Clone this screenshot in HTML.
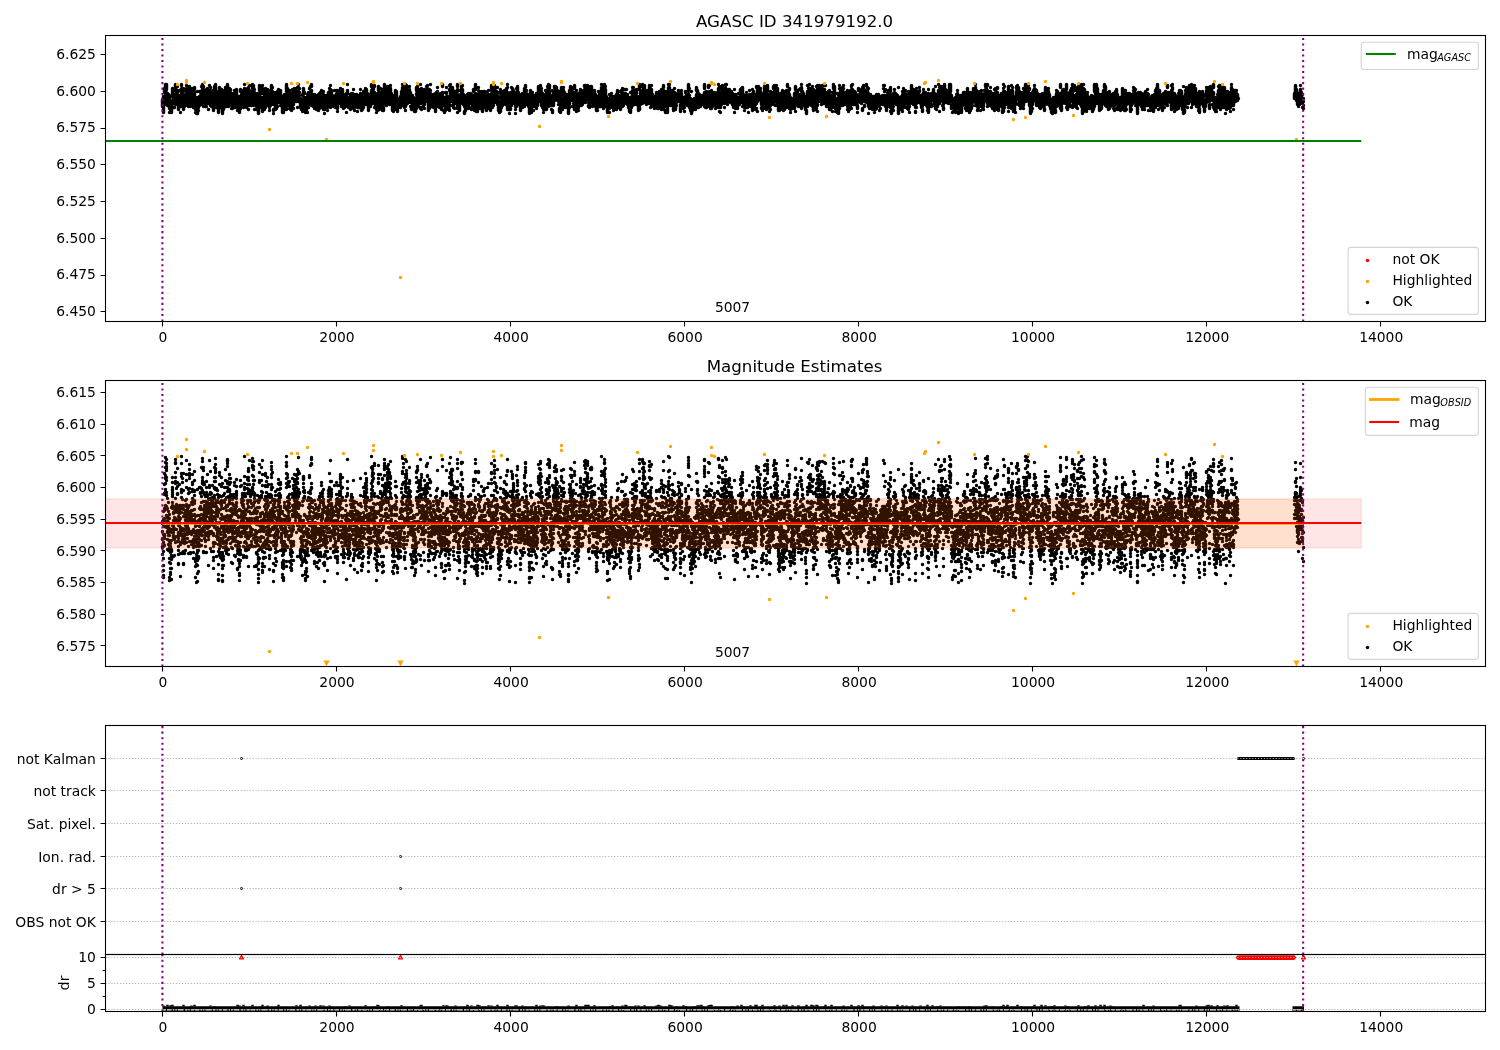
<!DOCTYPE html>
<html><head><meta charset="utf-8"><title>AGASC ID 341979192.0</title>
<style>html,body{margin:0;padding:0;background:#fff;overflow:hidden}svg{display:block;will-change:transform}</style></head>
<body>
<svg width="1500" height="1050" viewBox="0 0 1500 1050" font-family="DejaVu Sans, Liberation Sans, sans-serif" font-size="13.89px" fill="#000">
<defs>
<clipPath id="c0"><rect x="105.5" y="35.5" width="1380.0" height="286.0"/></clipPath>
<clipPath id="c1"><rect x="105.5" y="380.5" width="1380.0" height="286.0"/></clipPath>
<clipPath id="c2"><rect x="105.5" y="725.5" width="1380.0" height="229.0"/></clipPath>
<clipPath id="c3"><rect x="105.5" y="954.5" width="1380.0" height="57.0"/></clipPath>
</defs>
<g clip-path="url(#c0)">
<path transform="translate(.5 .5)" d="M162 99v7M163 96v16M164 88v4m0 4v8M165 84v8m0 3v1M166 84v5m0 3v5m0 3h0M167 93h0m0 3v9M168 94v2m0 3v6M169 97v11m0 4h0M170 101h0m0 3v7M171 95h0m0 6v11M172 88v8m0 4h0M173 97v6m0 4h0M174 97v6m0 4h0M175 84v6m0 3v5m0 6h0M176 91h0m0 4v7M177 86h0m0 4v2m0 3v4m0 4h0M178 98v11M179 90h0m0 5v7M180 95v6m0 3v2m0 6h0M181 84v1m0 3h0m0 3v2m0 3v1m0 3v1M182 89v1m0 4v1m0 5v3m0 3h0M183 88h0m0 3h0m0 4v3m0 3v2m0 3v3M184 97h0m0 4v5M185 94v11M186 85h0m0 3v3m0 3v7m0 3h0M187 96v7M188 91v1m0 3v7m0 3v1M189 86v6m0 3v3m0 5h0M190 96v5m0 5h0M191 94v10M192 88v13M193 98v9M194 87v2m0 3v6m0 4h0M195 98v7m0 3v1m0 3h0M196 100v9m0 4h0M197 91h0m0 6h0m0 4v12M198 98h0m0 3v6m0 3h0M199 91h0m0 5v9M200 91v1m0 3v7M201 86h0m0 5v3m0 3v7M202 84v8m0 4v6M203 86v1m0 3v4m0 3v4m0 5h0M204 90v2m0 3v8M205 93v6m0 3v4M206 89v3m0 3v7m0 4h0M207 88h0m0 4v9M208 94v9m0 6h0M209 85h0m0 5v1m0 4v6M210 87h0m0 5v6m0 4h0m0 3h0M211 92v9m0 5h0M212 90h0m0 3v6M213 93h0m0 7v10M214 86v14m0 4h0M215 84v7m0 4v4m0 5h0M216 91h0m0 3v8m0 5h0M217 92v11M218 93h0m0 3v10m0 3v3M219 87v3m0 3v1m0 5v8M220 95v12M221 89v11m0 3h0m0 4h0M222 90h0m0 8h0m0 5h0m0 3v7M223 93h0m0 3v13M224 91v3m0 4v5M225 87v2m0 5v8m0 3v1M226 91v9m0 3v3M227 84v2m0 3v3m0 3v3M228 91v4m0 3v8M229 88v8m0 4v3M230 89v1m0 3v7m0 4h0M231 93v9m0 3h0m0 3h0M232 94v3m0 3v5m0 3h0M233 93v10M234 90h0m0 3v3m0 4v3m0 4h0M235 95v9m0 3h0M236 89v11m0 3h0M237 97v2m0 3v4m0 4h0M238 96v5m0 3v4M239 96h0m0 8v8M240 89v2m0 5v12M241 90h0m0 4v8M242 92v6m0 3h0M243 94v1m0 3v6m0 3h0M244 84h0m0 4v4m0 4v2m0 3h0m0 3h0M245 93h0m0 3v9M246 96v11M247 88v8m0 3v5M248 87v8m0 8v2m0 4h0M249 85h0m0 5v2m0 4v9M250 91v3m0 3v5M251 91v1m0 3v10M252 84v4m0 3v1m0 9h0M253 85v7m0 3v2m0 6v2M254 89h0m0 3v7m0 3v1m0 6h0M255 96v8M256 97v9m0 3h0M257 93v6m0 4v3M258 94h0m0 5v2m0 3v9M259 85v5m0 3v2m0 4v2m0 4v2M260 93h0m0 4v8M261 86h0m0 3h0m0 3v1m0 4v5m0 3h0M262 85h0m0 3v4m0 5v4m0 3v7M263 98v9M264 94v7m0 3v2m0 3h0M265 88v8m0 3v1m0 3v1m0 3h0M266 90v9m0 3v3M267 89v14M268 90v2m0 3v9M269 93h0m0 4v10m0 3h0M270 92v10m0 3h0M271 85v8m0 4h0m0 3v1m0 3h0M272 87h0m0 4h0m0 3v6M273 95v9m0 5v1m0 3h0M274 94v10M275 92v3m0 3v1m0 3v7M276 94h0m0 4v10M277 91h0m0 3v8m0 4h0M278 89v9m0 3v1M279 90v8M280 90v10m0 5h0M281 99v5M282 96v2m0 3v11M283 101h0m0 3v8M284 94v6m0 3v2M285 98v7M286 84v7m0 5v1m0 5h0m0 6v1M287 88v13m0 3v1M288 90h0m0 3v6m0 3v1M289 90v12m0 6h0M290 99v10M291 101v9M292 89h0m0 3v9m0 3v2M293 90v7m0 3v4m0 4h0M294 88v9M295 90v8M296 88v9m0 4h0M297 87v7m0 3v3m0 7h0M298 84h0m0 3h0m0 4v10M299 88h0m0 4h0m0 3h0m0 3v3M300 98h0m0 5v4M301 101v8M302 94v1m0 4v1m0 3v5m0 3h0M303 88v6m0 4v4m0 6h0M304 92v1m0 4h0m0 3v7M305 104v8M306 97v7m0 4v2M307 94h0m0 4h0m0 3v6m0 5h0M308 92v1m0 3h0m0 3v5m0 3h0M309 88h0m0 7v5m0 3h0M310 86h0m0 5v13M311 84v2m0 4v1m0 3h0m0 7v4M312 94v11M313 97v9M314 94v11m0 3h0M315 95v10M316 95v5m0 4v2m0 3h0M317 98v10M318 94v9m0 4h0m0 3h0M319 93v2m0 3h0m0 3v4m0 3h0M320 92v2m0 3v9M321 90h0m0 8v6m0 3h0M322 92v11M323 91h0m0 3v3m0 4v3m0 5h0M324 95v1m0 4v9m0 4h0M325 98v1m0 3v5M326 95v5m0 3v3M327 96v5m0 3v3m0 3h0M328 92v10M329 88h0m0 3v1m0 3v6M330 85h0m0 4h0m0 3v15M331 90v9m0 3h0M332 95v6M333 97v9M334 90h0m0 6h0m0 3v5M335 95h0m0 3v1m0 3v5M336 90h0m0 3v7m0 5h0M337 90h0m0 3v3m0 3v2m0 4v3m0 3h0M338 94v9M339 90v6m0 3h0M340 88v8m0 4v2M341 89v2m0 3v12M342 89v13m0 3h0M343 99v9M344 97v10M345 94v10M346 93v10m0 9h0M347 84h0m0 6v3m0 4v2m0 4v3M348 98v9M349 100v7M350 94v3m0 3v3m0 3h0m0 3h0M351 93v6m0 3h0M352 93v10M353 89h0m0 6v13M354 94v13m0 3h0M355 96v9M356 94h0m0 3v8M357 96v1m0 3v7m0 4h0M358 95v12M359 97v1m0 3v6M360 89h0m0 4v9m0 4h0M361 95h0m0 3v7m0 4v1M362 98v3m0 3v5M363 91v2m0 4v5m0 3v2M364 92v2m0 3v6M365 88v8m0 3h0M366 89v9m0 6h0M367 93v1m0 3v6M368 97v13M369 94v12M370 95v2m0 3v6M371 84v2m0 4v6m0 3v4M372 86v6m0 6h0m0 5h0M373 88v1m0 6v4m0 3h0M374 85v1m0 6v1m0 4v6m0 4h0M375 95v3m0 3v5M376 98v11m0 3h0M377 93v1m0 5v11M378 86v4m0 3h0m0 3v1m0 3v2m0 3h0M379 95h0m0 4v7m0 3h0M380 88h0m0 4v9m0 3h0M381 92v6m0 5v1m0 3h0M382 89v1m0 3v2m0 5v4m0 4v2M383 93v2m0 3v6m0 3v3M384 84v8M385 86h0m0 4v9M386 91v14M387 86v8M388 86v8m0 3v5M389 87v5m0 3v1m0 3v5M390 85h0m0 3v5m0 3h0m0 3v4M391 93h0m0 3v6M392 95h0m0 5v10M393 100v11M394 95v6m0 3h0m0 4v1M395 90v6m0 3v5M396 91v8m0 5v5M397 99v3m0 3v1m0 3v2M398 100v7M399 98v7M400 96v11M401 91v11M402 84h0m0 3v3m0 3v5M403 85v1m0 4h0m0 3h0m0 3v9M404 98v9M405 84h0m0 4v10m0 8h0m0 4h0M406 85v13m0 6h0M407 92v7m0 3v1M408 91v11M409 86h0m0 3v7m0 3h0M410 92v6m0 3v1m0 4h0M411 96h0m0 3v3m0 5v2M412 95h0m0 3v7m0 3v1M413 97h0m0 4v7M414 98v10m0 3h0M415 101v10M416 87v3m0 3v1m0 3h0m0 7v1m0 3h0M417 86v1m0 5v8M418 89v2m0 3v1m0 4v4m0 3h0M419 90v7m0 3h0M420 84h0m0 5v11m0 3h0m0 4v1M421 88v7m0 3v5m0 6h0M422 91v7m0 3h0M423 95v11M424 89v3m0 3v9m0 4h0M425 90v4m0 3v4M426 86h0m0 5v8M427 85h0m0 3v11M428 98v12M429 89v2m0 3v2m0 3h0m0 3v3m0 3h0M430 84h0m0 6h0m0 3v7m0 6h0M431 97v9M432 98v5m0 3h0M433 94v7m0 3h0m0 3h0M434 96v11M435 93h0m0 4v4m0 3v2m0 3v2M436 92v3m0 3v3m0 5h0M437 87h0m0 4h0m0 3v5m0 3h0m0 4h0M438 94v10M439 94v9m0 4h0M440 93h0m0 3v10M441 98v2m0 3v6M442 84v2m0 6v3m0 3h0m0 4v3M443 97h0m0 3v5m0 5h0M444 98v6m0 6v2M445 92h0m0 5v13M446 87h0m0 5v1m0 3v7m0 6h0M447 96v10M448 99v9M449 85h0m0 4v1m0 6h0m0 3v2m0 3v2m0 3v1M450 84h0m0 3h0m0 5v3m0 4v2m0 4h0M451 87v3m0 4v3M452 87v13M453 91h0m0 3v13M454 91v5m0 3v4m0 5h0M455 91v11M456 91v4m0 3v5M457 84v2m0 3v2m0 3v2m0 5h0m0 5v2m0 4h0M458 97v11M459 96h0m0 3h0m0 3v8M460 90h0m0 4v9M461 85v3m0 4v5m0 3h0M462 85h0m0 4v13M463 94v5m0 3v2M464 95h0m0 3v8m0 5v2M465 99v5m0 3v3M466 97v3m0 3v5M467 94h0m0 3v8M468 93h0m0 3v12M469 94v6M470 93v8M471 94v9m0 4v2M472 96v11M473 89v2m0 4v2m0 3v3M474 95v3m0 4v3m0 3v2M475 84v5m0 4v7M476 97h0m0 4v10M477 100v11M478 87h0m0 3h0m0 3v2m0 5v6M479 94v5M480 93v1m0 4v10M481 91v2m0 3v9M482 96v7m0 3v5M483 91v1m0 5v9M484 91v10m0 3v3M485 94h0m0 3v7m0 3h0M486 100v10M487 91h0m0 3v9m0 5h0M488 90h0m0 4v2m0 4v3M489 95v11M490 95v2m0 4v9M491 85v5m0 3v2m0 3v2m0 4h0M492 97v10M493 93v1m0 3v1m0 3v1m0 3h0M494 85v10m0 4v3M495 90v11M496 91h0m0 3v7M497 87h0m0 5h0m0 3v5m0 3v1M498 101v9M499 103v9M500 89v4m0 3v1m0 3v11M501 96v2m0 3v6M502 94v8m0 3h0M503 91v11M504 90v11M505 92h0m0 3v9M506 88v2m0 3v9M507 84h0m0 3h0m0 5h0m0 4h0m0 5h0m0 3v5M508 93v10m0 4v2M509 96v10m0 3h0m0 4h0M510 92v1m0 7v5m0 3v1M511 87h0m0 5h0m0 3v10M512 88v1m0 3v7M513 90v10M514 93v6m0 4h0M515 95v7m0 3v1m0 3h0m0 4h0M516 88h0m0 4v3m0 4v7M517 86v11M518 92v12M519 94v7M520 100v10M521 94h0m0 3v6m0 3h0M522 93v1m0 3v6m0 3v1M523 97v8M524 88v3m0 3v6m0 4v2M525 85v2m0 4v3m0 3v2m0 3v2M526 90h0m0 3v9M527 94v9M528 95v4m0 3v4M529 103v10M530 90v3m0 4v7M531 92v9m0 4v3m0 4h0M532 92h0m0 6v8m0 4h0M533 95v10m0 5h0M534 95v6m0 3v2M535 95v11M536 93h0m0 7v4m0 3v1M537 98v7M538 86v14M539 86h0m0 3v1m0 3h0m0 3v1M540 85v8m0 4h0m0 4h0M541 88h0m0 3v14M542 93h0m0 5v6m0 3h0M543 95v7m0 3v1m0 3h0m0 3h0M544 95v9M545 90h0m0 4h0m0 3v12M546 91v12m0 5v1M547 86h0m0 3h0m0 3v7m0 6h0M548 84v1m0 4v3m0 4v1m0 3h0m0 3h0m0 3h0M549 85v3m0 3v6m0 5v1M550 95v7m0 3h0M551 96v9m0 4h0M552 90h0m0 6h0m0 3h0m0 3v3m0 5v2M553 91v14M554 86v1m0 4v9M555 86h0m0 3v10M556 87v11M557 90v10M558 92v9m0 3h0M559 91h0m0 5v6m0 6v3M560 95v4m0 4v3m0 5v1M561 87v7m0 4v2m0 3h0M562 98h0m0 4v7M563 87h0m0 3v3m0 4v6M564 92v7m0 5v1M565 94v2m0 4v7M566 94v11M567 95v10M568 96h0m0 3h0m0 3v3m0 3v5M569 90v14m0 3h0M570 86v14M571 87v1m0 4v6M572 89h0m0 3v8m0 6h0M573 92v7m0 4h0M574 85v3m0 6v6m0 5h0m0 3v1M575 92h0m0 3v12M576 90h0m0 4v10m0 4h0m0 3h0M577 98h0m0 3v7M578 93h0m0 5v1m0 3v5m0 3h0M579 94v11M580 89v3m0 3v5M581 93v7m0 3v2M582 91v1m0 3v6m0 3h0M583 90v4m0 3v2m0 3h0M584 85v1m0 3h0m0 3v9M585 85v4m0 3v4m0 5v1M586 89v10M587 85v4m0 3v5M588 90v1m0 4v4m0 3h0m0 3v1M589 95v12M590 86v9m0 3v2M591 86v11m0 3h0M592 92h0m0 4v6m0 3v1M593 94v11M594 90v12M595 94v3m0 3v2m0 3v1M596 98v3m0 3v6M597 96h0m0 3v8m0 3h0M598 91h0m0 5v6M599 93v3m0 3v4m0 3h0M600 94v9m0 3h0M601 84h0m0 3v9m0 3v1m0 5h0M602 87h0m0 4v10M603 97v11M604 84v13m0 3h0M605 86h0m0 3v10m0 5h0M606 96h0m0 3v7M607 98v5m0 3v6M608 99v9M609 94h0m0 5v4m0 3v2m0 4h0M610 94v9M611 93h0m0 3v10M612 98v9M613 96v1m0 3v4m0 6h0M614 96v13M615 96v10M616 94v15M617 90v6m0 4v3m0 3h0M618 91h0m0 6v6m0 3v1M619 95v7m0 3h0M620 100v9M621 90v2m0 3v9M622 88h0m0 4v14M623 95v2m0 4v4M624 89h0m0 4v10M625 89h0m0 4v8M626 89h0m0 5v8M627 94v3m0 3v4M628 97v6m0 3v1M629 98v5m0 3v5M630 92h0m0 5h0m0 3v2m0 3v7M631 101v6M632 87h0m0 3v8m0 3v1m0 3h0M633 87h0m0 6v9M634 90v8m0 3h0m0 3h0M635 91v3m0 3v5M636 89v4m0 3v3m0 3v2M637 96v6M638 99v11M639 84v5m0 7v3m0 3h0m0 5v2M640 92v7m0 3v2M641 95v8M642 84v2m0 4v5m0 5h0m0 3h0M643 85v4m0 3h0m0 3h0m0 4h0m0 3h0M644 85v11m0 5v1M645 90v12M646 97v7M647 90h0m0 3v10M648 92v11M649 85v3m0 5v8M650 86h0m0 3v5m0 3h0m0 3v2m0 5h0M651 85h0m0 4v7m0 4v5M652 94h0m0 3v9M653 97v8M654 96v12M655 97v9M656 92v3m0 4v5M657 97h0m0 3v8M658 95v9m0 4h0M659 91v1m0 3v12M660 95h0m0 3v7M661 89v6m0 4h0m0 3h0m0 3v4M662 93v10M663 85v2m0 3v2m0 5v1m0 5v1m0 5h0M664 93h0m0 3h0m0 3v7M665 91v3m0 3v4m0 3v2m0 4v2M666 94v1m0 3v7M667 92h0m0 3h0m0 3v14M668 84h0m0 3v12M669 84h0m0 3v4m0 4h0m0 3h0m0 3v2M670 93v12M671 93v9M672 90v5m0 4v4M673 92v4m0 3v11M674 88h0m0 4v2m0 3h0m0 3h0m0 3h0m0 3v3M675 96v6m0 3v4M676 97v5m0 3h0M677 93v5m0 3h0M678 90v1m0 3v7M679 91v9M680 97v4m0 3v7M681 90h0m0 3v8M682 97v9M683 97v3m0 3v1m0 3v1M684 97v7m0 3h0m0 4h0M685 91v1m0 4v2m0 4v1M686 94v9M687 97v8M688 84v6m0 3h0m0 3v5M689 88h0m0 7h0m0 4v8M690 98v1m0 3v3m0 3v2M691 91h0m0 8v14M692 99v11M693 102v7M694 98v3m0 3v4M695 98v11M696 87v3m0 4v11M697 90v11M698 93v14M699 94v12M700 99v7M701 95v9M702 95v6M703 95v6m0 3h0M704 84v4m0 4v1m0 3v2m0 4h0m0 4h0M705 98v9M706 91v6m0 3v3m0 4h0M707 94v12M708 85v2m0 5v1m0 3v3m0 3h0M709 85h0m0 6v2m0 3v4m0 3v2M710 93v6m0 5h0m0 3v1M711 90v11m0 4h0m0 3h0M712 95v8m0 3h0M713 93v8m0 3h0M714 92v12M715 99v6m0 3h0M716 97v7M717 92v5m0 4v5M718 84h0m0 4v4m0 4h0m0 3v4m0 3v1M719 86v2m0 6v4m0 5v3m0 5h0M720 93v8m0 3v3m0 5h0M721 91v7m0 3v3M722 85v9m0 3h0M723 95v7M724 90v6m0 4v3m0 4h0M725 84h0m0 3v8m0 5h0M726 84h0m0 8v9M727 97v4m0 3h0M728 89v2m0 3v7M729 89v10M730 92v10M731 91v7M732 93v8m0 3h0M733 94h0m0 3v10M734 89h0m0 5v9m0 4h0m0 5h0M735 94h0m0 3v7m0 3v1M736 96v6m0 3v1M737 97v11M738 93h0m0 4v7M739 97v7M740 89v9M741 88v6m0 3v3M742 87v10m0 3v2m0 4h0M743 94v7m0 3v1M744 97v4m0 3v3m0 3h0M745 95v10M746 92h0m0 5v10M747 95v9m0 3h0M748 95v10m0 7h0M749 90h0m0 4v10M750 95v7m0 3v1M751 98v3m0 3v2M752 89h0m0 4v3m0 3v4m0 6v1M753 91v2m0 3h0m0 3v5m0 4h0M754 97v9M755 97v7m0 5h0M756 86v1m0 7v9m0 5h0M757 88v10m0 3h0m0 10h0M758 86v4m0 3v4M759 89v10M760 88h0m0 3v9M761 95h0m0 3v6m0 3v1M762 95v2m0 3v4m0 3h0m0 3h0M763 93v10m0 3v2M764 86v11m0 4h0M765 86h0m0 3v12M766 86h0m0 7v3m0 3v2m0 3v5M767 85v6m0 3v2m0 3h0m0 3h0M768 94h0m0 4v8M769 99v9m0 3h0M770 91h0m0 3v11m0 4h0M771 92v3m0 3v5M772 93v10M773 86v2m0 5v11M774 85v8m0 5v2m0 4h0M775 86v1m0 3v3m0 5v2m0 5h0M776 85h0m0 3v4m0 4v5m0 3h0M777 88v12m0 5h0M778 95v2m0 3v10M779 97v13M780 93v10M781 99v9M782 90v2m0 3v6m0 4v4M783 97h0m0 4v9M784 91v7m0 6v2m0 3h0M785 93v14M786 90h0m0 5h0m0 4h0m0 3v5M787 84v2m0 4v6m0 3v2m0 3h0M788 90v3m0 3v4m0 3h0M789 88v1m0 5v6m0 3h0m0 3v2M790 97v3m0 3h0m0 4v2m0 3h0M791 98v10M792 99v5m0 4h0M793 98v9M794 93v8m0 4v3M795 86v3m0 3v7m0 5v1m0 6h0M796 92h0m0 3v6M797 90v3m0 3v4m0 3h0M798 98v8M799 89h0m0 6v10M800 88h0m0 6v12M801 84h0m0 3v4m0 3v1m0 4h0m0 7v2M802 91v7m0 3v4M803 93v5m0 4v3M804 96v9M805 96v3m0 3v7M806 99v7m0 4v3M807 85h0m0 6v5m0 3v7M808 85h0m0 3h0m0 6v2m0 3v2m0 3h0M809 84h0m0 4v6m0 3v4m0 3h0M810 88v3m0 4v8M811 92v2m0 5v6M812 86h0m0 4v1m0 4v5m0 3h0m0 3h0M813 89h0m0 3h0m0 6v1m0 3v8M814 92v2m0 3h0m0 3v7M815 97v1m0 3v3m0 5h0M816 86h0m0 4v3m0 3v2m0 5v2m0 3h0M817 85v6m0 4h0m0 5h0m0 4v1m0 6h0M818 86v10m0 5h0M819 85h0m0 3v10M820 88v2m0 3v4m0 3v1M821 87v12m0 5h0M822 85h0m0 3h0m0 4v9M823 92v11M824 85h0m0 4v5m0 6h0M825 85h0m0 8v7M826 95v11M827 92v12M828 91v4m0 3v1m0 3v3M829 90v2m0 4h0m0 6v7M830 96v9m0 4h0M831 95v3m0 4v2m0 3h0M832 92h0m0 7v8m0 4h0M833 84v4m0 4v4m0 10h0M834 86v14M835 98h0m0 3v7m0 3h0M836 99v11M837 93h0m0 5h0m0 3v4m0 5v2M838 95h0m0 4v5m0 4v5M839 85h0m0 3h0m0 6h0m0 3v7m0 3v1M840 88v6m0 3v5m0 3h0M841 94v9M842 87v7m0 3v5m0 3h0M843 85h0m0 3h0m0 5v11M844 92v7m0 4v1M845 92v7m0 4h0M846 92h0m0 4v8M847 90v2m0 3v2m0 3v6m0 3h0M848 91v8m0 3v4m0 5h0M849 95v6m0 3v5M850 90v7m0 4h0m0 3v3M851 85v1m0 3h0m0 5v1m0 4v1m0 3h0m0 5h0M852 84h0m0 5h0m0 3v8M853 92v6m0 3v3M854 91v13M855 92v1m0 3v8M856 94v9M857 99v3m0 3v3m0 4h0M858 88v2m0 7v3M859 94v7M860 91v1m0 4v6M861 89h0m0 4v10M862 87h0m0 5v1m0 4v4m0 7v2M863 85v8m0 3v1m0 3h0M864 94v7m0 4v1M865 90v9M866 84v1m0 5v1m0 3v1m0 4h0m0 3h0M867 87v11m0 4h0M868 88h0m0 5v1m0 5v7m0 7h0M869 96h0m0 3v9M870 94v9M871 98v6m0 3v1M872 96v7m0 3h0m0 3h0M873 96v3m0 3v5M874 96v8m0 4v1m0 3h0M875 96v9m0 4h0M876 94v5m0 4v5M877 98v5m0 3h0M878 94h0m0 3v8M879 99v6m0 5h0M880 96v7m0 5h0M881 96v6M882 95v9M883 85h0m0 3h0m0 7v2m0 5v2M884 85h0m0 6h0m0 4v8M885 89h0m0 6v11M886 96v14M887 92h0m0 3v7M888 90v9M889 90v2m0 3v4m0 4v3M890 87v4m0 3v2m0 3v2m0 4v2m0 4h0M891 97h0m0 4v4m0 3v1m0 3v1M892 102v7M893 93v10m0 3h0m0 4h0M894 89h0m0 3v1m0 3v6M895 93v9M896 94v10M897 95v9M898 87h0m0 16h0m0 3v7M899 97v1m0 4v7M900 97v2m0 3h0m0 3v3M901 96v5m0 3v1m0 3v1M902 91h0m0 3h0m0 3v5m0 3h0m0 3h0m0 3h0M903 88h0m0 4v8M904 91h0m0 5v7m0 3h0M905 90h0m0 3v10m0 4h0M906 94v7M907 96v7m0 3v2M908 91h0m0 7v1m0 3v7M909 93h0m0 5v4m0 4h0m0 6h0M910 91v5m0 4v3M911 85v12M912 94v8M913 89v4m0 4v7M914 90v11M915 93v2m0 3v9m0 4v1M916 88h0m0 3v7m0 3v2m0 4h0M917 92v10M918 93v7M919 87h0m0 3v1m0 4v7M920 95v8M921 96v11M922 94h0m0 5v7m0 3v2M923 89h0m0 3v8m0 3v1M924 92v9M925 92v12M926 94h0m0 4v7M927 98v9m0 3h0M928 89h0m0 4h0m0 3h0m0 6v10M929 94v11M930 94v9M931 93v6m0 5v2M932 93h0m0 3v4M933 89v10M934 93v12M935 86h0m0 14v8M936 94h0m0 5v6m0 4h0M937 97v9M938 84h0m0 6v7m0 3v2M939 87h0m0 7v4m0 3v2m0 8h0M940 86h0m0 6v2m0 3v4M941 86v10M942 89v11m0 5h0M943 95v5m0 3v1m0 3v2M944 84v3m0 4v9M945 89h0m0 4v8M946 90v12M947 91v10M948 92v11M949 84v7m0 3v5M950 84v7m0 3v3M951 95v6m0 3v4M952 100v2m0 3v2m0 5h0M953 103v4m0 4h0M954 98v9m0 3h0M955 97v15M956 94h0m0 3v11M957 90h0m0 3v1m0 3v5M958 99v9m0 3v2M959 97v9M960 95v7m0 6h0M961 95h0m0 5v12M962 97v8M963 92v12M964 92v7m0 3v1M965 93v11m0 3v1M966 93v1m0 3h0m0 3v10M967 88v6m0 3v5m0 4v1M968 96h0m0 3v8M969 97v5m0 3v7M970 92v9m0 3v2m0 4h0M971 98v10M972 92h0m0 4v6m0 3h0M973 88v6m0 4h0M974 88h0m0 5v7M975 84h0m0 3v4m0 3v1m0 4h0m0 3h0m0 3h0M976 90v10m0 4h0M977 96h0m0 3v7m0 3v1M978 99v5m0 3h0M979 91v9m0 3h0M980 94v7m0 9h0M981 90h0m0 3v1m0 4h0m0 3v5M982 95v9m0 3h0M983 98v8m0 3h0M984 90h0m0 3v8M985 84v2m0 3v7M986 88v4m0 3v5M987 84v1m0 5v1m0 3v1m0 3v1m0 4h0m0 3h0M988 91v2m0 4v8M989 94h0m0 3v4m0 3v1M990 87h0m0 4h0m0 3v2m0 3h0m0 3v3M991 97v9M992 93h0m0 4v8m0 3h0M993 94v13M994 89h0m0 4h0m0 3v7m0 7h0M995 88v2m0 3v3m0 3h0m0 3h0m0 3v4M996 88h0m0 6v10M997 87v1m0 4v8M998 96v14M999 95v7m0 4h0M1000 96v9M1001 93h0m0 3v2m0 3v3M1002 96h0m0 4v7m0 3v2M1003 84h0m0 4h0m0 3h0m0 3v2m0 3v12M1004 86h0m0 5h0m0 4v5m0 3h0m0 4h0M1005 92v1m0 3v7M1006 93v4m0 3v4M1007 93v6M1008 86v8m0 6v2m0 5h0m0 4h0M1009 94v2m0 3v8M1010 92v10m0 3v2M1011 85h0m0 5v5m0 3v4m0 6h0M1012 87h0m0 3v7m0 3v2M1013 100h0m0 5v6M1014 98v12M1015 96v8m0 8h0M1016 86v2m0 3v7M1017 85v1m0 4v9M1018 87v10m0 6v1M1019 91v2m0 3v6m0 3h0M1020 92v6m0 4h0m0 6h0M1021 94v5m0 3v4M1022 92h0m0 3v11M1023 88h0m0 7v10m0 3h0M1024 90v3m0 3v4M1025 84v2m0 3v12M1026 84h0m0 5v1m0 3v6M1027 84v3m0 6v7M1028 85h0m0 3h0m0 4v9M1029 88v1m0 4v4m0 3v5M1030 98v2m0 4v9M1031 97h0m0 3v11M1032 92v12m0 4h0M1033 90h0m0 3v7M1034 85h0m0 3v1m0 3v8M1035 89v8M1036 90v5m0 3v7M1037 93v1m0 3v5M1038 94v2m0 3v6M1039 98v9M1040 94h0m0 5v9M1041 94v9m0 3h0M1042 93v6m0 4v3M1043 96v10M1044 96v6m0 3h0m0 3v2M1045 87v12m0 5h0M1046 88v4m0 3v4m0 3h0M1047 92v1m0 3v7M1048 88h0m0 3v3m0 4v6M1049 94v11M1050 100v8M1051 99v13M1052 102v4m0 7h0M1053 97v11M1054 97v2m0 3v2m0 3h0m0 3v2M1055 101v6m0 3v2M1056 90h0m0 3v7m0 4v2M1057 91v12M1058 97v8M1059 94v9M1060 84v3m0 6h0m0 3v3m0 4v1m0 3v1M1061 95v8m0 3v4M1062 90v8m0 5h0M1063 89v6m0 4v3M1064 93v8M1065 90v10m0 3h0M1066 84v5m0 3v7m0 3h0m0 5h0M1067 94v3m0 3v9M1068 95v1m0 3v6M1069 92v1m0 3v10M1070 90h0m0 4v7m0 4v1M1071 88h0m0 3v7M1072 84v1m0 4v11m0 7h0M1073 88h0m0 7v4m0 3v2M1074 85v1m0 3v1m0 8v4m0 3h0M1075 95v11M1076 94v8m0 4v1M1077 87v5m0 3v4m0 4h0m0 5h0M1078 86h0m0 5v4m0 4v2M1079 85v1m0 3v2m0 3v6M1080 87h0m0 5v12M1081 84v10m0 5h0m0 6v1M1082 95h0m0 3v7m0 3v5M1083 84h0m0 4h0m0 6v2m0 3v2m0 5v2m0 3h0M1084 89v4m0 4v7M1085 99v10M1086 95v16M1087 92h0m0 3v7m0 5h0M1088 99v7M1089 100h0m0 3v5M1090 97v9M1091 95h0m0 5v5m0 3h0M1092 101v5m0 3v2M1093 96v13M1094 84v7m0 6v4m0 3v2M1095 92v8m0 3h0M1096 84v4m0 3v8m0 3h0M1097 88v6m0 4v5M1098 94v7M1099 94h0m0 5v11M1100 95h0m0 8v6M1101 94v2m0 4v8M1102 94v7M1103 90v13M1104 84v3m0 3v2m0 9v1M1105 86v3m0 6h0m0 4v2m0 3v1M1106 98v8M1107 92v4m0 3v5M1108 95h0m0 4v10M1109 91v11m0 6h0M1110 99v4m0 3h0M1111 96h0m0 3v6M1112 94v8M1113 93v9m0 3h0m0 3h0M1114 96h0m0 3v6m0 3v2M1115 91v11M1116 89v11M1117 94v2m0 3v5m0 3v2M1118 98v8M1119 102v7M1120 97v6m0 4h0m0 3h0M1121 97v2m0 3v7M1122 88v9m0 5v3m0 3h0M1123 94v11M1124 90v5m0 3v2m0 4v6M1125 90h0m0 3h0m0 4v10m0 3h0M1126 93h0m0 5v6m0 5h0M1127 93v6m0 3h0M1128 93h0m0 3v7M1129 93v8M1130 97h0m0 6v8M1131 94v8m0 3h0m0 4h0M1132 94v1m0 3v5M1133 87h0m0 3h0m0 3v8M1134 88v10M1135 89h0m0 5v8m0 3h0M1136 93v2m0 4v5M1137 95h0m0 7v11M1138 92v7m0 5h0M1139 93v7M1140 92v12M1141 93v9m0 3v1M1142 98v6m0 3v2M1143 94v11M1144 93h0m0 3v10m0 3h0M1145 91h0m0 4v5m0 3v2M1146 95v10M1147 89h0m0 4v8m0 4h0M1148 94h0m0 3v5m0 8h0M1149 98v7M1150 99v8m0 3h0M1151 96h0m0 3v6M1152 95v9m0 3v2M1153 97v8m0 3v3M1154 94v11M1155 90v1m0 5v2m0 5v4M1156 88v4m0 5v3M1157 84v6m0 5v4m0 3v2M1158 94h0m0 4v7m0 4h0M1159 90v2m0 3v5m0 3v1M1160 94v2m0 3v5m0 3h0M1161 95v12M1162 98v12M1163 93h0m0 3v5m0 3h0M1164 93h0m0 3v6m0 5h0M1165 91v11M1166 92v8m0 4h0M1167 85v2m0 5h0m0 3v4m0 3h0m0 3h0M1168 92v8M1169 93v8M1170 92v10M1171 85h0m0 5h0m0 4v1m0 6v8M1172 84h0m0 3v2m0 3h0m0 3v3m0 4v1M1173 94v5m0 5v3M1174 93v2m0 4v5m0 3v1m0 3h0M1175 95v11m0 3h0M1176 97h0m0 3v9M1177 96v1m0 3v6M1178 93h0m0 5v3m0 3v4M1179 90v4m0 3h0m0 3h0m0 3v2M1180 90v2m0 3v5m0 3h0M1181 91v10M1182 96v13M1183 86h0m0 14v6m0 5v2M1184 99v7m0 3v3M1185 90h0m0 3v11M1186 87v3m0 3v2m0 5v3M1187 91v3m0 4v5m0 4h0M1188 91v12M1189 85v3m0 3v5M1190 87v10M1191 84h0m0 3h0m0 5v2m0 3v4m0 6h0M1192 87h0m0 7v10M1193 85h0m0 4v2m0 5v6M1194 85h0m0 3h0m0 5v6m0 4h0M1195 88v12M1196 94h0m0 3v9M1197 93v10m0 3h0M1198 97v10m0 3h0M1199 91h0m0 6h0m0 3v5m0 3v4M1200 94v8M1201 93v7m0 3h0M1202 91v11M1203 94v2m0 4v6M1204 101v10M1205 99v7M1206 87h0m0 3v6m0 5v1M1207 89h0m0 3v8M1208 87v11M1209 92v1m0 3v5m0 3v4M1210 86h0m0 3v7M1211 87v7m0 4h0M1212 92v8m0 4h0M1213 84v3m0 5v2m0 3v1m0 8v1M1214 97h0m0 3v9M1215 97v3m0 3v8M1216 101v7m0 3h0M1217 94h0m0 4v9M1218 86h0m0 4v9m0 3v3M1219 85v7m0 4v1m0 3h0m0 3v4M1220 90v9m0 3v1m0 4v2M1221 85v6m0 4v5M1222 92v13M1223 87h0m0 4h0m0 5v6m0 4v1M1224 87v4m0 4v4m0 3v2M1225 94v6m0 4h0m0 3h0m0 6h0M1226 93v1m0 4h0m0 4v7M1227 91v5m0 3h0m0 3v2M1228 92v8M1229 95v4m0 3v6M1230 96v11m0 4h0M1231 84h0m0 3v8m0 3v3M1232 89v1m0 4v10M1233 93v12m0 4h0M1234 90v8m0 3h0M1235 90v1m0 3v7M1236 90h0m0 3v7M1237 94v6M1238 98h0M1294 93v5M1295 85v12M1296 89v11M1297 94v10M1298 93v10m0 3h0M1299 94v1m0 3v2m0 3v1M1300 85h0m0 4v5m0 4h0m0 3h0M1301 92v1m0 3v6M1302 94h0m0 4v5m0 4h0M1303 98h0m0 3h0m0 4h0m0 3h0" stroke="#000" stroke-width="3.45" stroke-linecap="round" fill="none"/>
<path transform="translate(.5 .5)" d="M177 84h0M186 80h0m0 2h0M204 82h0M247 83h0M269 129h0M291 83h0M297 83h0M307 82h0M326 139h0M343 83h0M373 81v1M400 277h0M404 83h0M417 83h0M441 83h0M460 83h0M493 82h0m0 2h0M501 83h0M539 126h0M561 81v1M608 116h0M637 83h0M670 81h0M711 82v1M714 84h0M764 83h0M769 117h0M824 83h0M826 116h0M924 83h0M925 82h0M938 80h0M974 83h0M1013 119h0M1025 117h0M1028 83h0M1045 81h0M1073 115h0M1078 83h0M1165 83h0M1214 81h0M1222 84h0M1296 139h0" stroke="#ffa500" stroke-width="3.45" stroke-linecap="round" fill="none"/>
<path d="M105.5 141.0H1361.2" stroke="#008000" stroke-width="2.08" fill="none"/>
<path d="M162.4 321.5V35.5" stroke="#800080" stroke-width="2.08" stroke-dasharray="2.08 3.44" fill="none"/>
<path d="M1303.15 321.5V35.5" stroke="#800080" stroke-width="2.08" stroke-dasharray="2.08 3.44" fill="none"/>
</g>
<rect x="105.5" y="35.5" width="1380.0" height="286.0" fill="none" stroke="#000" stroke-width="1.1"/>
<text x="163.0" y="341.5" text-anchor="middle">0</text>
<text x="337.0" y="341.5" text-anchor="middle">2000</text>
<text x="511.1" y="341.5" text-anchor="middle">4000</text>
<text x="685.1" y="341.5" text-anchor="middle">6000</text>
<text x="859.1" y="341.5" text-anchor="middle">8000</text>
<text x="1033.1" y="341.5" text-anchor="middle">10000</text>
<text x="1207.2" y="341.5" text-anchor="middle">12000</text>
<text x="1381.2" y="341.5" text-anchor="middle">14000</text>
<path d="M162.5 321.5v4.9M336.5 321.5v4.9M510.5 321.5v4.9M684.5 321.5v4.9M858.5 321.5v4.9M1032.5 321.5v4.9M1206.5 321.5v4.9M1380.5 321.5v4.9" stroke="#000" stroke-width="1.1" fill="none"/>
<text x="95.9" y="315.9" text-anchor="end">6.450</text>
<text x="95.9" y="279.2" text-anchor="end">6.475</text>
<text x="95.9" y="242.5" text-anchor="end">6.500</text>
<text x="95.9" y="205.7" text-anchor="end">6.525</text>
<text x="95.9" y="169.0" text-anchor="end">6.550</text>
<text x="95.9" y="132.3" text-anchor="end">6.575</text>
<text x="95.9" y="95.5" text-anchor="end">6.600</text>
<text x="95.9" y="58.8" text-anchor="end">6.625</text>
<path d="M105.5 311.5h-4.9M105.5 275.5h-4.9M105.5 238.5h-4.9M105.5 201.5h-4.9M105.5 164.5h-4.9M105.5 128.5h-4.9M105.5 91.5h-4.9M105.5 54.5h-4.9" stroke="#000" stroke-width="1.1" fill="none"/>
<text x="794.6" y="27" text-anchor="middle" font-size="16.67px">AGASC ID 341979192.0</text>
<text x="714.9" y="311.8">5007</text>
<rect x="1361.3" y="42.2" width="117.1" height="27.3" rx="2.8" fill="#fff" fill-opacity="0.8" stroke="#ccc" stroke-opacity="0.8" stroke-width="1.15"/>
<path d="M1366.9 54H1394.7" stroke="#008000" stroke-width="2.08" stroke-linecap="square" fill="none"/>
<text x="1407" y="58.8">mag<tspan font-size="9.72px" font-style="italic" dy="2.3" dx="-0.6">AGASC</tspan></text>
<rect x="1348.1" y="247.3" width="130.3" height="67.1" rx="2.8" fill="#fff" fill-opacity="0.8" stroke="#ccc" stroke-opacity="0.8" stroke-width="1.15"/>
<circle cx="1367.5" cy="260.5" r="1.725" fill="#ff0000"/>
<text x="1392.4" y="263.9">not OK</text>
<circle cx="1367.5" cy="281.5" r="1.725" fill="#ffa500"/>
<text x="1392.4" y="284.9">Highlighted</text>
<circle cx="1367.5" cy="302.5" r="1.725" fill="#000"/>
<text x="1392.4" y="305.8">OK</text>
<g clip-path="url(#c1)">
<path transform="translate(.5 .5)" d="M162 521v2m0 8h0m0 7v1m0 7v1m0 7h0M163 511h0m0 8h0m0 6h0m0 9h0m0 8v1m0 3h0m0 5h0m0 7h0m0 7h0m0 5h0m0 5h0m0 2h0M164 473h0m0 11h0m0 9v1m0 14h0m0 2h0m0 8h0m0 3h0m0 5h0m0 8v2m0 2h0m0 7h0M165 457h0m0 5h0m0 5h0m0 8h0m0 2v1m0 5h0m0 6h0m0 2h0m0 14h0m0 2h0m0 2h0M166 459h0m0 4h0m0 3h0m0 2h0m0 2h0m0 7h0m0 3h0m0 12h0m0 3h0m0 11h0m0 9h0m0 11v1M167 498h0m0 10h0m0 8v1m0 3h0m0 2h0m0 2h0m0 3h0m0 4v1m0 7h0m0 10h0M168 502h0m0 9h0m0 11v1m0 2h0m0 4h0m0 3h0m0 3h0m0 9h0m0 6h0M169 514h0m0 4h0m0 10h0m0 7h0m0 5v1m0 6h0m0 3h0m0 8h0m0 4h0m0 15h0m0 3h0M170 530h0m0 13h0m0 3v1m0 3v2m0 11h0m0 5h0m0 4h0m0 2h0M171 507h0m0 22h0m0 3h0m0 8h0m0 9v2m0 4h0m0 2v2m0 9h0m0 11h0M172 477h0m0 5h0m0 5h0m0 2v1m0 2h0m0 2h0m0 2h0m0 6h0m0 3h0m0 2v1m0 17h0M173 512v1m0 7h0m0 4h0m0 2h0m0 2v1m0 3h0m0 3v2m0 19h0M174 511v1m0 5h0m0 3h0m0 2h0m0 6v1m0 8v2m0 16h0M175 459h0m0 3v1m0 9h0m0 5h0m0 4h0m0 2h0m0 15h0m0 8h0m0 3h0m0 9h0m0 24h0M176 488h0m0 16v1m0 2v1m0 2v1m0 8v2m0 8h0m0 7h0M177 468h0m0 14h0m0 4h0m0 7v1m0 12h0m0 3h0m0 3h0m0 9h0m0 20h0M178 516h0m0 9h0m0 7v1m0 2h0m0 3h0m0 3h0m0 5h0m0 4h0m0 4h0m0 9v1M179 484h0m0 21h0m0 3h0m0 2h0m0 2v1m0 4v3m0 5h0m0 9v1M180 505h0m0 7h0m0 6h0m0 9v1m0 2h0m0 2h0m0 10h0m0 2h0m0 9h0m0 23h0M181 456h0m0 7h0m0 10h0m0 3h0m0 13h0m0 2v1m0 5h0m0 11h0m0 4h0m0 16h0m0 3h0M182 478h0m0 4h0m0 17h0m0 6h0m0 23v2m0 4h0m0 2h0m0 3v1m0 2h0m0 10v1M183 473h0m0 17h0m0 15v1m0 3h0m0 7h0m0 13h0m0 5v1m0 6h0m0 10h0m0 12v1M184 513h0m0 17h0m0 3h0m0 3v1m0 2v1m0 2v1m0 10h0M185 500h0m0 10h0m0 2h0m0 3v1m0 3v1m0 5h0m0 3h0m0 6h0m0 8h0m0 8h0M186 460h0m0 14h0m0 6h0m0 7h0m0 12h0m0 5h0m0 2h0m0 8h0m0 7h0m0 2h0m0 5v1m0 13h0M187 509v1m0 2v1m0 2h0m0 3h0m0 6h0m0 2v1m0 5h0m0 2h0m0 4h0M188 489h0m0 4h0m0 14h0m0 7h0m0 5h0m0 2h0m0 7v2m0 3h0m0 13h0m0 7h0M189 464h0m0 5h0m0 4h0m0 2h0m0 3h0m0 10h0m0 4h0m0 13h0m0 9h0m0 2h0m0 25h0M190 511v1m0 3v1m0 5h0m0 11v1m0 19v1M191 502h0m0 8h0m0 4h0m0 2h0m0 2v4m0 9h0m0 3h0m0 7h0m0 3h0M192 474h0m0 8h0m0 2h0m0 5h0m0 2h0m0 7h0m0 3v1m0 2h0m0 6h0m0 5h0m0 7h0m0 10h0M193 520h0m0 9v1m0 2h0m0 7h0m0 2v2m0 2h0m0 2h0m0 5h0m0 6h0M194 471h0m0 9h0m0 10v1m0 4h0m0 5v1m0 2h0m0 6h0m0 5v1m0 4h0m0 17h0M195 516h0m0 5h0m0 3h0m0 2h0m0 5v1m0 3h0m0 4h0m0 2h0m0 5h0m0 13h0m0 2h0m0 5h0m0 11h0M196 525h0m0 10h0m0 4h0m0 2v1m0 3v1m0 8h0m0 3h0m0 3h0m0 4h0m0 18h0M197 489h0m0 26h0m0 15h0m0 3h0m0 5h0m0 12h0m0 2h0m0 4h0m0 4h0m0 5h0m0 8h0m0 8h0M198 520h0m0 11v1m0 5h0m0 5v1m0 3h0m0 4h0m0 6v2m0 13h0M199 487h0m0 21h0m0 7h0m0 4h0m0 3h0m0 3v1m0 4v1m0 3h0m0 5h0m0 5h0m0 2h0M200 487h0m0 5v1m0 13v3m0 9v2m0 3h0m0 8v2M201 467h0m0 21h0m0 8h0m0 6h0m0 12h0m0 5h0m0 4h0m0 6h0m0 3h0m0 3h0m0 5h0m0 5h0M202 458h0m0 3h0m0 6v1m0 9h0m0 3h0m0 2v1m0 7h0m0 2h0m0 17h0m0 9h0m0 10h0m0 7h0M203 467h0m0 3h0m0 12h0m0 2h0m0 8h0m0 9h0m0 15h0m0 2h0m0 2h0m0 3h0m0 4h0m0 4h0m0 20v1M204 484h0m0 10h0m0 11h0m0 2h0m0 3h0m0 2h0m0 2h0m0 2h0m0 3v1m0 4v1m0 5h0m0 8h0M205 496h0m0 5h0m0 8h0m0 8h0m0 2h0m0 4v1m0 9h0m0 2h0m0 5v1m0 5h0m0 6h0M206 481h0m0 6h0m0 5h0m0 11h0m0 2h0m0 6h0m0 5h0m0 5h0m0 4h0m0 2h0m0 8h0m0 17h0M207 474h0m0 20h0m0 2h0m0 6h0m0 2h0m0 3h0m0 2v1m0 3h0m0 10v1m0 4h0m0 4h0M208 499h0m0 8h0m0 3h0m0 2v1m0 11h0m0 3h0m0 5h0m0 3v1m0 3h0m0 26h0M209 460h0m0 25h0m0 2h0m0 16h0m0 3h0m0 2h0m0 9v1m0 3h0m0 3v2m0 5h0M210 471h0m0 21h0m0 2h0m0 4v1m0 9h0m0 2h0m0 2h0m0 4h0m0 2h0m0 15h0m0 15h0M211 493h0m0 5h0m0 4h0m0 8v1m0 2h0m0 2v1m0 4h0m0 3v1m0 7h0m0 20h0M212 485h0m0 12h0m0 3v1m0 3v2m0 5v1m0 7h0m0 2h0M213 498h0m0 27h0m0 8v2m0 7v1m0 3h0m0 5h0m0 6h0m0 3h0m0 8h0M214 467h0m0 10h0m0 4h0m0 6v1m0 7h0m0 3h0m0 5h0m0 3h0m0 10v1m0 6h0m0 4h0m0 15h0M215 458h0m0 6h0m0 4h0m0 2h0m0 2h0m0 5h0m0 4h0m0 7v1m0 16h0m0 7h0m0 7h0m0 5h0m0 19h0M216 488h0m0 12v2m0 4h0m0 3h0m0 4v1m0 8h0m0 7h0m0 7h0m0 20h0M217 490h0m0 4h0m0 6h0m0 2h0m0 6h0m0 4h0m0 2v2m0 11h0m0 5h0m0 2h0m0 5h0M218 497h0m0 14v1m0 11h0m0 6h0m0 8h0m0 7h0m0 7h0m0 13h0m0 10h0m0 5v1M219 472h0m0 3h0m0 9h0m0 11h0m0 7h0m0 20h0m0 7h0m0 2h0m0 7h0m0 3h0m0 7h0m0 4h0m0 2v1M220 503h0m0 6h0m0 9h0m0 5h0m0 9h0m0 2h0m0 6v2m0 3v1m0 6h0m0 4v1M221 477h0m0 9h0m0 10h0m0 4v1m0 2h0m0 2h0m0 3h0m0 6h0m0 5h0m0 7v1m0 11h0m0 20h0M222 483h0m0 33h0m0 24h0m0 12h0m0 2h0m0 5v1m0 5h0m0 3h0m0 7h0m0 5v1M223 495h0m0 13h0m0 9h0m0 9v1m0 2h0m0 2h0m0 3h0m0 3h0m0 6h0m0 4h0m0 9h0m0 3h0m0 6h0M224 487h0m0 6h0m0 7h0m0 2h0m0 16v1m0 5h0m0 5v1m0 2h0m0 2h0m0 7v1M225 469h0m0 11h0m0 19h0m0 8h0m0 9h0m0 4v1m0 10h0m0 4v1m0 10v1m0 3h0M226 487h0m0 10h0m0 8h0m0 5h0m0 6h0m0 7h0m0 2h0m0 3h0m0 12v1m0 2h0m0 4h0m0 4h0m0 2h0M227 459v2m0 2h0m0 3h0m0 15h0m0 2h0m0 4h0m0 4h0m0 15h0m0 9h0m0 2h0M228 490h0m0 6h0m0 8h0m0 13v1m0 2h0m0 8h0m0 2h0m0 2h0m0 6v1m0 10h0m0 5h0M229 474h0m0 4h0m0 5v1m0 5v2m0 7h0m0 2h0m0 2h0m0 8h0m0 16h0m0 11v1M230 478h0m0 4h0m0 12h0m0 9h0m0 6h0m0 6h0m0 3v4m0 6h0m0 15h0M231 496h0m0 7h0m0 5h0m0 3h0m0 4v1m0 5h0m0 2h0m0 2h0m0 5v1m0 6h0m0 10h0m0 15h0M232 499h0m0 4h0m0 6h0m0 5h0m0 12h0m0 2v2m0 3h0m0 3h0m0 2h0m0 3h0m0 7h0m0 15h0M233 494h0m0 11h0m0 8h0m0 7v1m0 2v1m0 2v1m0 4v1m0 8h0M234 482h0m0 3h0m0 12h0m0 8v1m0 3v1m0 14h0m0 3h0m0 6h0m0 5h0m0 17h0M235 507v1m0 2h0m0 2v2m0 7h0m0 3h0m0 7h0m0 6h0m0 3v1m0 4h0m0 11h0M236 479h0m0 7h0m0 5h0m0 2h0m0 2h0m0 3h0m0 4v1m0 3h0m0 5v1m0 11h0m0 5h0m0 13h0M237 515h0m0 6v1m0 11h0m0 2h0m0 6h0m0 5v1m0 3h0m0 3h0m0 15v1M238 510h0m0 7h0m0 10h0m0 2v1m0 13v1m0 3h0m0 2h0m0 3h0m0 7v1M239 509h0m0 33h0m0 4h0m0 3h0m0 5h0m0 7h0m0 2h0m0 3h0m0 7h0m0 2h0m0 5h0M240 480h0m0 6h0m0 24h0m0 6h0m0 9h0m0 7v1m0 2v1m0 6h0m0 8h0m0 3v1m0 6h0M241 485h0m0 14h0m0 3h0m0 9h0m0 3h0m0 3h0m0 3v1m0 2h0m0 2v2m0 9h0M242 493h0m0 2h0m0 2v4m0 3v1m0 6h0m0 6h0m0 3h0m0 11h0M243 500h0m0 4h0m0 2v1m0 9h0m0 4h0m0 2h0m0 2h0m0 3h0m0 6h0m0 13h0m0 9h0m0 2h0M244 456h0m0 20h0m0 7h0m0 4h0m0 2h0m0 4v1m0 17h0m0 2h0m0 4h0m0 12v1m0 12h0M245 496h0m0 13h0m0 5h0m0 9h0m0 2h0m0 2h0m0 5h0m0 4h0m0 5h0m0 6v1m0 2h0M246 509h0m0 9h0m0 4h0m0 3v1m0 2h0m0 4h0m0 2v1m0 8h0m0 6v1m0 6v1M247 477h0m0 2h0m0 5h0m0 4h0m0 5h0m0 7h0m0 3h0m0 8h0m0 9v1m0 4h0m0 10h0m0 3h0m0 8h0M248 468h0m0 2v1m0 6h0m0 3h0m0 9h0m0 2h0m0 2h0m0 7h0m0 6v1m0 31h0m0 11h0m0 17h0M249 460h0m0 24h0m0 9h0m0 18h0m0 7h0m0 3h0m0 5h0m0 6h0m0 3v1m0 9v2M250 490h0m0 6h0m0 4v1m0 12h0m0 8h0m0 2h0m0 4v1m0 3h0m0 4h0M251 490h0m0 4h0m0 9h0m0 4h0m0 6h0m0 5h0m0 2v1m0 11h0m0 3h0m0 6h0m0 3h0m0 2h0M252 458h0m0 3h0m0 4h0m0 2h0m0 8h0m0 12v1m0 2h0m0 3h0m0 36h0M253 461h0m0 5h0m0 3h0m0 7h0m0 4h0m0 4h0m0 8h0m0 13h0m0 7v1m0 25h0m0 8h0M254 480h0m0 13v2m0 3h0m0 3v1m0 8h0m0 8h0m0 3h0m0 13v1m0 4h0m0 27h0M255 508h0m0 3h0m0 7h0m0 2v3m0 7h0m0 3h0m0 3h0m0 6h0m0 4h0M256 513h0m0 4v1m0 6h0m0 8v1m0 7h0m0 2h0m0 10v1m0 12v1M257 495h0m0 5h0m0 7h0m0 4h0m0 6v1m0 5v1m0 13h0m0 3h0m0 4v1m0 9h0M258 502h0m0 19h0m0 10h0m0 14h0m0 5h0m0 7v2m0 3v1m0 6h0m0 5h0m0 4h0m0 4h0M259 464h0m0 8h0m0 8h0m0 2h0m0 14h0m0 2v2m0 7h0m0 16h0m0 2h0m0 5h0m0 19h0m0 9h0M260 497h0m0 16v1m0 2h0m0 7v1m0 2h0m0 3h0m0 2h0m0 6v1m0 3h0m0 6h0M261 467h0m0 13h0m0 11h0m0 4h0m0 2h0m0 16h0m0 7v1m0 2v1m0 3h0m0 2h0m0 7h0m0 12h0M262 460h0m0 14h0m0 11h0m0 7h0m0 20h0m0 12h0m0 3h0m0 2h0m0 16h0m0 6h0m0 12h0m0 3h0m0 4h0m0 2h0M263 519h0m0 3v2m0 5h0m0 2h0m0 6h0m0 6h0m0 4h0m0 10v1M264 499h0m0 7h0m0 8v1m0 2h0m0 3h0m0 2h0m0 5v1m0 3h0m0 11h0m0 10h0m0 14h0M265 473h0m0 2h0m0 10v1m0 10h0m0 4h0m0 4h0m0 5h0m0 13h0m0 5h0m0 13h0m0 2h0m0 3h0m0 12h0M266 481h0m0 11h0m0 5h0m0 2h0m0 2h0m0 8h0m0 3v1m0 3h0m0 4h0m0 2h0m0 12h0m0 9h0m0 5h0M267 477h0m0 9h0m0 10h0m0 4h0m0 3h0m0 4h0m0 7h0m0 9h0m0 3h0m0 4h0m0 2h0m0 6h0m0 2h0M268 484h0m0 10h0m0 11h0m0 10h0m0 3h0m0 4h0m0 5h0m0 6v2m0 6h0m0 4h0M269 497h0m0 15h0m0 2h0m0 6h0m0 4h0m0 5h0m0 3h0m0 3h0m0 6h0m0 6h0m0 2h0m0 6h0m0 3h0m0 11h0M270 494h0m0 8h0m0 8h0m0 4v1m0 2v1m0 4v1m0 8h0m0 4h0m0 13v1M271 462h0m0 4h0m0 3h0m0 5h0m0 3h0m0 7h0m0 3h0m0 2h0m0 6h0m0 2h0m0 15h0m0 17h0m0 13h0M272 472h0m0 15h0m0 12v1m0 8v1m0 2h0m0 5v1m0 3v1m0 6h0M273 504v1m0 8h0m0 9h0m0 7h0m0 6h0m0 6h0m0 4h0m0 18h0m0 7v1m0 10h0M274 499h0m0 2h0m0 2h0m0 8h0m0 4v1m0 7h0m0 2h0m0 3h0m0 9h0m0 8h0M275 491h0m0 4h0m0 5h0m0 7h0m0 10v1m0 5h0m0 10h0m0 8h0m0 2h0m0 5h0m0 4h0m0 6h0m0 7h0M276 500h0m0 19h0m0 3h0m0 2v2m0 5h0m0 4h0m0 4h0m0 2h0m0 3v1m0 6h0m0 10h0M277 489h0m0 11h0m0 10h0m0 8v2m0 3v1m0 5h0m0 4v2m0 16h0M278 479h0m0 4h0m0 11v1m0 4v2m0 3h0m0 2h0m0 7h0m0 3h0m0 2h0m0 13h0m0 6h0M279 484h0m0 5h0m0 4h0m0 2h0m0 2v1m0 2h0m0 2h0m0 8h0m0 2v3m0 3h0M280 482h0m0 2h0m0 4h0m0 7h0m0 2h0m0 9h0m0 2h0m0 3h0m0 7h0m0 2h0m0 2h0m0 3h0m0 2h0m0 23h0M281 522h0m0 3v4m0 4h0m0 2h0m0 2h0m0 2h0m0 2v1M282 511h0m0 2h0m0 6h0m0 10h0m0 12h0m0 4h0m0 3h0m0 7h0m0 7v1m0 2h0m0 2h0m0 7h0m0 3h0M283 532h0m0 11h0m0 7v2m0 2h0m0 6h0m0 3v1m0 2h0m0 2h0m0 9v1m0 2h0M284 502h0m0 3h0m0 2h0m0 8h0m0 4v1m0 4h0m0 4h0m0 13h0m0 6h0m0 2h0M285 519h0m0 2v1m0 5h0m0 2v1m0 2v2m0 2h0m0 8h0m0 6h0M286 456h0m0 6h0m0 3v1m0 7h0m0 5h0m0 5h0m0 4h0m0 21v1m0 7h0m0 18h0m0 27h0m0 5h0M287 474h0m0 3h0m0 9h0m0 11h0m0 4h0m0 5h0m0 4h0m0 7v1m0 4h0m0 2h0m0 7h0m0 15v1M288 481h0m0 2h0m0 13h0m0 5h0m0 3v1m0 2h0m0 5h0m0 3h0m0 6h0m0 16h0m0 2h0M289 481h0m0 5h0m0 8h0m0 5h0m0 4h0m0 4h0m0 4h0m0 7v2m0 4h0m0 3h0m0 8h0m0 26h0M290 523h0m0 7h0m0 6h0m0 5v1m0 7h0m0 3h0m0 2h0m0 7v1m0 5h0M291 531h0m0 3v1m0 6h0m0 3v2m0 4h0m0 2h0m0 4h0m0 4h0m0 4h0m0 4h0m0 2h0M292 478h0m0 15v1m0 3h0m0 8h0m0 5h0m0 4h0m0 2h0m0 7h0m0 2h0m0 3h0m0 2v1m0 14h0m0 7h0M293 485h0m0 3h0m0 7h0m0 2h0m0 10h0m0 7h0m0 12h0m0 3h0m0 12v1m0 2v1m0 15h0M294 474h0m0 5h0m0 2h0m0 8v1m0 2h0m0 4h0m0 2h0m0 2h0m0 4v1m0 7h0M295 482h0m0 2h0m0 8v1m0 2h0m0 7v1m0 6h0m0 3v1m0 3v1m0 3h0M296 475h0m0 4h0m0 8h0m0 4h0m0 3h0m0 3h0m0 3v1m0 3h0m0 3h0m0 5h0m0 2h0m0 18h0M297 469h0m0 5h0m0 4h0m0 4v1m0 8h0m0 7h0m0 4h0m0 12v1m0 9v1m0 31h0M298 457h0m0 14v1m0 17h0m0 3h0m0 4h0m0 6h0m0 3h0m0 2v1m0 6h0m0 3h0m0 7h0m0 5h0M299 473h0m0 19v1m0 10v2m0 12v2m0 2v1m0 4h0m0 4h0M300 516h0m0 3v1m0 18h0m0 11v2m0 2v2m0 2h0M301 529h0m0 2h0m0 5v1m0 4v1m0 4h0m0 5h0m0 5h0m0 3h0m0 6h0M302 501h0m0 4h0m0 17h0m0 2h0m0 3h0m0 13v1m0 3v1m0 2h0m0 3h0m0 12h0m0 13h0M303 476v3m0 4h0m0 4h0m0 4h0m0 7h0m0 2h0m0 20h0m0 6h0m0 7h0m0 3h0m0 25h0M304 490h0m0 2h0m0 4h0m0 2h0m0 16v1m0 10h0m0 6h0m0 9h0m0 10h0m0 2h0m0 6h0M305 546h0m0 5v2m0 2h0m0 5h0m0 11h0m0 2v1m0 4h0m0 2h0M306 516v1m0 11h0m0 3v1m0 2h0m0 6h0m0 3v1m0 18h0m0 6h0m0 3h0M307 500h0m0 19h0m0 11h0m0 2h0m0 3v1m0 5h0m0 7h0m0 3h0m0 3v1m0 21h0M308 492h0m0 5v1m0 9h0m0 15h0m0 7h0m0 4v1m0 3h0m0 5h0m0 13h0M309 475h0m0 2h0m0 27h0m0 3v1m0 4h0m0 3h0m0 3h0m0 6v1m0 17h0M310 465h0m0 25h0m0 3h0m0 5h0m0 2h0m0 6h0m0 5h0m0 5h0m0 6h0m0 3h0m0 11v1m0 7h0M311 457h0m0 2h0m0 4v1m0 19h0m0 4v1m0 11h0m0 3h0m0 29h0m0 4h0m0 3h0m0 12h0M312 501v1m0 5h0m0 12h0m0 3h0m0 2h0m0 3h0m0 2h0m0 4v2m0 9h0m0 3h0M313 512h0m0 4h0m0 10h0m0 8v1m0 4v2m0 2h0m0 3h0m0 6h0M314 500h0m0 9h0m0 8h0m0 6h0m0 4v1m0 3v1m0 6h0m0 2v1m0 8h0m0 12h0m0 2h0M315 504h0m0 10h0m0 2h0m0 6h0m0 4h0m0 3h0m0 2h0m0 2h0m0 2h0m0 2h0m0 5v1m0 4h0M316 507v1m0 5v1m0 9h0m0 5h0m0 14h0m0 10h0m0 2h0m0 12h0M317 517v1m0 5h0m0 8h0m0 2h0m0 8v1m0 4h0m0 2h0m0 3h0m0 2h0m0 9h0M318 499h0m0 8h0m0 3h0m0 4h0m0 9h0m0 5v2m0 4h0m0 6h0m0 16h0m0 12h0M319 496h0m0 2h0m0 7h0m0 2h0m0 9h0m0 13h0m0 3h0m0 2h0m0 5v2m0 6h0m0 13h0M320 493h0m0 3h0m0 4h0m0 2h0m0 12v1m0 9h0m0 4h0m0 3h0m0 5v1m0 8h0m0 7h0m0 2h0M321 482h0m0 3h0m0 31h0m0 3v1m0 3h0m0 4h0m0 4v1m0 2h0m0 5h0m0 6h0m0 11h0M322 491h0m0 2h0m0 3h0m0 6h0m0 7h0m0 3h0m0 3h0m0 2v1m0 6h0m0 3v1m0 6h0m0 6h0M323 489h0m0 10h0m0 3h0m0 2v1m0 5h0m0 2h0m0 19h0m0 2h0m0 6h0m0 3h0m0 2h0m0 19h0M324 506v1m0 4h0m0 16h0m0 4h0m0 5h0m0 7h0m0 11h0m0 2h0m0 6h0m0 2v1m0 16h0M325 520h0m0 2h0m0 2h0m0 11v3m0 3v2m0 3h0m0 5h0m0 4h0M326 507h0m0 4h0m0 2h0m0 5v1m0 3h0m0 5v1m0 11h0m0 2h0m0 2h0m0 4h0m0 4h0M327 507v1m0 5v2m0 2h0m0 3h0m0 4h0m0 5h0m0 3h0m0 10h0m0 9h0m0 7h0m0 12h0M328 490h0m0 3h0m0 3h0m0 4v1m0 4h0m0 5h0m0 3h0m0 11h0m0 4h0m0 8h0M329 473h0m0 14v2m0 4h0m0 11h0m0 6h0m0 2v1m0 6h0m0 9h0m0 4h0M330 460h0m0 21h0m0 9h0m0 9h0m0 6h0m0 9h0m0 3h0m0 5h0m0 9v1m0 6h0m0 2h0m0 8h0m0 9h0M331 481h0m0 8h0m0 3h0m0 2h0m0 2h0m0 7v2m0 3h0m0 7h0m0 4h0m0 3h0m0 14h0M332 507h0m0 2v1m0 2h0m0 3v1m0 4h0m0 4v1m0 5h0m0 3h0M333 514v1m0 7h0m0 4h0m0 3h0m0 3v1m0 2h0m0 10v1m0 5v1M334 485h0m0 26h0m0 11v1m0 5v3m0 2h0m0 5h0m0 7h0M335 506h0m0 14h0m0 2h0m0 12h0m0 7v2m0 3h0m0 3h0m0 2h0m0 5v1M336 482h0m0 12h0m0 5h0m0 3h0m0 2h0m0 4h0m0 3h0m0 4h0m0 8h0m0 2h0m0 23h0M337 485h0m0 13h0m0 4h0m0 7h0m0 11h0m0 3h0m0 5h0m0 5h0m0 14h0m0 4h0m0 5h0m0 3h0m0 3h0m0 11h0M338 499h0m0 11h0m0 3h0m0 2h0m0 2h0m0 5v2m0 6h0m0 6h0m0 2v2M339 485h0m0 6h0m0 2h0m0 2h0m0 6h0m0 3v1m0 5h0m0 12v2M340 474h0m0 2h0m0 2v1m0 3h0m0 3h0m0 6h0m0 2h0m0 2h0m0 8h0m0 4h0m0 2h0m0 17h0m0 8h0M341 477h0m0 11h0m0 11v1m0 8h0m0 7h0m0 6h0m0 2h0m0 2h0m0 5h0m0 6v1m0 5h0m0 12h0M342 477h0m0 10h0m0 10h0m0 3h0m0 8h0m0 8v1m0 6v2m0 8h0m0 13h0M343 524h0m0 2v1m0 2h0m0 7h0m0 2h0m0 11h0m0 2h0m0 4h0m0 2h0m0 5h0M344 515h0m0 8h0m0 5h0m0 4h0m0 5v2m0 3h0m0 3h0m0 8h0m0 4h0M345 500h0m0 10h0m0 9h0m0 5v1m0 2h0m0 3h0m0 4v1m0 2h0m0 7v1M346 496h0m0 9h0m0 10h0m0 2v1m0 3h0m0 8v1m0 3h0m0 3v1m0 3v1m0 38h0M347 459h0m0 22h0m0 7h0m0 5h0m0 2h0m0 18h0m0 2h0m0 4h0m0 3v1m0 15h0m0 7h0m0 3h0m0 6h0M348 519h0m0 2h0m0 2h0m0 5v2m0 6h0m0 6h0m0 5v1m0 2h0m0 2h0m0 6h0M349 526h0m0 2v1m0 5h0m0 2v1m0 2v1m0 2h0m0 2h0m0 3h0m0 4h0m0 4h0M350 500h0m0 4h0m0 7h0m0 2v2m0 10v1m0 3h0m0 8v1m0 15h0m0 12h0M351 494h0m0 2h0m0 2v1m0 5h0m0 2v1m0 5h0m0 3v1m0 4h0m0 3h0m0 12h0M352 497h0m0 3h0m0 3h0m0 8h0m0 5h0m0 3h0m0 4v1m0 5h0m0 2h0m0 8h0M353 480h0m0 24h0m0 3h0m0 7h0m0 10v1m0 9h0m0 6h0m0 2v1m0 6h0m0 9h0m0 2h0M354 501v1m0 5h0m0 8h0m0 3h0m0 7h0m0 4h0m0 10v1m0 3h0m0 2h0m0 8h0m0 2h0m0 14h0M355 510h0m0 8h0m0 2h0m0 4v1m0 6h0m0 4h0m0 3v1m0 4h0m0 2h0m0 5h0M356 502h0m0 11h0m0 8h0m0 2v1m0 2v2m0 5h0m0 3h0m0 6h0m0 3h0m0 4h0M357 511v1m0 3h0m0 12h0m0 3v1m0 2h0m0 3h0m0 9h0m0 2h0m0 2h0m0 6h0m0 17h0M358 504h0m0 8h0m0 5h0m0 2h0m0 2h0m0 2h0m0 9h0m0 3v1m0 6v1m0 11h0m0 3h0M359 515h0m0 4h0m0 10h0m0 2h0m0 5h0m0 4h0m0 3h0m0 2v1m0 2h0m0 4v1m0 4h0M360 478h0m0 17h0m0 8h0m0 2h0m0 8h0m0 4h0m0 4h0m0 7v1m0 3v1m0 20h0M361 506h0m0 11h0m0 2v1m0 5h0m0 5v1m0 5v2m0 4h0m0 7h0m0 16h0m0 5h0M362 518h0m0 4h0m0 6v4m0 11h0m0 3h0m0 5h0m0 7h0m0 5h0m0 3h0M363 487h0m0 9h0m0 16h0m0 5h0m0 2h0m0 3v2m0 8h0m0 4h0m0 11h0m0 9h0M364 491h0m0 2h0m0 3h0m0 4h0m0 2h0m0 13h0m0 2h0m0 5h0m0 6v1m0 4h0m0 5h0M365 473h0m0 10h0m0 2v2m0 6h0m0 2h0m0 4h0m0 3h0m0 3v1m0 2h0m0 14h0m0 2h0M366 478h0m0 2h0m0 2h0m0 3h0m0 3v1m0 3h0m0 5h0m0 5h0m0 4h0m0 4h0m0 7h0m0 27h0M367 497h0m0 2h0m0 15v2m0 2h0m0 3h0m0 2h0m0 2h0m0 3v1m0 2h0m0 8h0M368 515h0m0 6h0m0 4h0m0 2v1m0 4h0m0 5h0m0 10h0m0 4h0m0 2h0m0 4h0m0 5h0m0 9h0M369 500h0m0 7h0m0 6h0m0 2h0m0 3h0m0 10h0m0 3h0m0 10h0m0 2h0m0 5v1m0 5h0M370 507h0m0 6h0m0 2h0m0 13h0m0 4v1m0 4v1m0 4h0m0 6h0m0 2h0m0 2h0M371 456h0m0 11h0m0 16h0m0 6h0m0 4h0m0 3h0m0 3h0m0 8h0m0 3h0m0 10h0m0 8v1m0 13h0M372 466h0m0 2v1m0 3h0m0 2v2m0 4v1m0 5h0m0 4h0m0 4h0m0 24h0m0 22h0M373 473h0m0 5h0m0 25h0m0 4h0m0 3h0m0 3h0m0 2h0m0 3v2m0 3h0m0 13h0M374 463h0m0 2h0m0 28h0m0 3h0m0 19h0m0 3h0m0 3h0m0 4v2m0 2h0m0 3h0m0 9h0m0 17h0M375 504h0m0 7v1m0 2h0m0 3h0m0 12v1m0 3h0m0 2h0m0 6h0m0 2h0m0 5h0m0 5v1M376 517h0m0 6h0m0 6h0m0 5h0m0 8h0m0 2h0m0 5h0m0 5h0m0 6h0m0 4h0m0 3h0m0 13h0M377 496h0m0 7h0m0 21h0m0 6h0m0 6h0m0 2h0m0 3v1m0 4h0m0 4v1m0 5h0m0 7h0m0 7h0M378 465h0m0 9h0m0 4h0m0 4v1m0 14h0m0 14h0m0 2h0m0 13h0m0 5v1m0 3h0m0 13h0M379 504h0m0 19h0m0 3h0m0 4v2m0 6h0m0 2v1m0 8h0m0 2h0m0 13h0M380 474h0m0 17h0m0 2h0m0 9v1m0 4h0m0 2v1m0 5h0m0 5h0m0 2h0m0 2h0m0 8h0m0 11h0M381 493h0m0 5h0m0 6v1m0 2v2m0 6h0m0 4h0m0 21h0m0 2h0m0 14h0M382 478v1m0 6h0m0 11h0m0 4h0m0 4h0m0 24h0m0 2h0m0 10h0m0 2h0m0 20h0m0 4h0m0 6h0M383 494h0m0 6h0m0 3h0m0 13h0m0 8v2m0 2h0m0 9h0m0 5h0m0 14h0m0 9h0m0 6h0M384 459h0m0 4h0m0 2v1m0 2v1m0 6h0m0 10h0m0 2h0m0 3v2M385 468h0m0 15h0m0 5h0m0 2h0m0 4h0m0 4v2m0 9h0m0 4v1m0 6h0M386 487v2m0 8h0m0 5h0m0 6h0m0 5h0m0 4h0m0 4v1m0 10h0m0 8v1m0 6h0M387 466h0m0 6h0m0 2h0m0 3h0m0 2h0m0 3v1m0 2v2m0 4h0m0 9v1M388 464h0m0 5h0m0 4h0m0 12v1m0 12v1m0 3h0m0 13h0m0 2h0m0 10h0m0 6h0M389 472h0m0 2h0m0 8v2m0 3h0m0 4h0m0 14h0m0 5h0m0 11h0m0 11h0m0 3h0m0 7h0M390 461h0m0 15h0m0 2h0m0 5h0m0 5h0m0 5h0m0 3h0m0 12h0m0 2h0m0 13h0m0 4v1m0 6h0m0 5h0M391 498h0m0 10v2m0 3h0m0 2h0m0 4h0m0 2h0m0 2h0m0 2v1m0 9h0M392 506h0m0 20h0m0 7h0m0 3h0m0 4h0m0 3v1m0 2v1m0 2h0m0 6h0m0 6h0m0 10h0M393 527v1m0 8h0m0 6h0m0 2h0m0 3h0m0 2h0m0 2h0m0 2h0m0 2v1m0 11h0m0 6h0M394 505h0m0 2h0m0 7v1m0 8v2m0 8h0m0 11h0m0 17h0m0 4h0M395 481h0m0 5h0m0 9h0m0 9h0m0 5h0m0 12h0m0 4h0m0 4h0m0 3h0m0 2h0m0 4h0m0 5h0M396 486h0m0 11h0m0 4h0m0 6v2m0 5v1m0 7h0m0 24v1m0 9h0m0 9h0M397 523h0m0 2h0m0 2v1m0 7h0m0 2h0m0 10h0m0 2v1m0 17v1m0 4h0M398 525h0m0 7v1m0 6h0m0 3v1m0 2h0m0 6v1m0 3h0m0 3h0M399 517v1m0 7v2m0 4v1m0 2v1m0 2h0m0 5v1m0 7h0M400 509h0m0 2v1m0 5h0m0 8h0m0 7h0m0 2h0m0 5h0m0 4h0m0 3h0m0 5h0m0 5v1M401 488h0m0 4h0m0 9h0m0 7h0m0 3h0m0 4h0m0 2v1m0 5v1m0 3h0m0 3h0m0 7h0M402 456h0m0 2h0m0 13h0m0 2h0m0 11h0m0 13v1m0 4v2m0 5h0m0 2h0m0 5h0M403 463h0m0 4h0m0 15h0m0 13h0m0 14v1m0 8h0m0 7h0m0 2h0m0 10h0m0 3h0m0 4h0m0 3h0M404 518v2m0 4v1m0 7v1m0 4h0m0 3h0m0 4h0m0 4h0m0 8v1m0 2h0M405 459h0m0 15h0m0 3h0m0 4h0m0 2h0m0 3h0m0 2h0m0 3h0m0 5h0m0 8h0m0 4h0m0 10h0m0 34h0m0 16h0M406 461h0m0 9h0m0 3h0m0 2h0m0 2v1m0 5h0m0 4v1m0 4h0m0 9h0m0 9h0m0 10h0m0 24h0M407 492h0m0 4h0m0 3v1m0 6v1m0 2h0m0 4h0m0 3h0m0 2h0m0 2h0m0 4h0m0 12h0m0 4h0M408 487h0m0 8h0m0 4h0m0 5h0m0 4h0m0 5h0m0 5h0m0 3h0m0 2v3m0 6v1M409 467h0m0 13v1m0 2h0m0 7h0m0 4h0m0 4h0m0 4h0m0 2h0m0 5h0m0 13v1M410 491h0m0 5h0m0 5v1m0 2h0m0 4h0m0 4h0m0 5v1m0 11h0m0 2h0m0 3h0m0 20h0M411 510v1m0 12v1m0 2h0m0 2h0m0 2v1m0 3h0m0 22h0m0 3h0m0 8h0M412 505h0m0 12v1m0 4h0m0 5v3m0 5h0m0 10h0m0 2h0m0 13h0m0 3h0m0 4h0M413 515h0m0 15h0m0 3h0m0 3h0m0 3v1m0 6h0m0 5h0m0 2h0m0 10h0M414 517h0m0 4h0m0 4h0m0 8h0m0 2h0m0 3h0m0 2h0m0 8h0m0 5h0m0 2v1m0 6h0m0 13h0M415 529h0m0 8h0m0 3h0m0 3h0m0 2h0m0 4h0m0 2v1m0 4h0m0 5v1m0 7h0m0 3h0M416 471v1m0 5h0m0 5h0m0 15v1m0 2h0m0 14h0m0 29v1m0 3h0m0 12v2M417 466h0m0 3v1m0 21h0m0 6h0m0 4h0m0 2v1m0 3h0m0 7h0m0 7v2m0 5h0M418 480h0m0 2h0m0 5h0m0 12v1m0 6h0m0 15h0m0 3h0m0 2h0m0 5h0m0 11h0m0 12h0M419 485h0m0 2h0m0 3h0m0 5v4m0 2h0m0 4h0m0 5h0m0 2h0m0 15h0M420 459h0m0 21v1m0 3v1m0 9h0m0 2h0m0 10h0m0 6h0m0 6h0m0 7h0m0 14h0m0 16h0m0 4h0M421 474h0m0 3h0m0 11v1m0 6h0m0 12h0m0 9v1m0 5v1m0 5h0m0 6h0m0 5h0m0 26h0M422 489h0m0 5h0m0 4v1m0 6h0m0 3h0m0 2h0m0 4h0m0 2h0m0 13v1m0 2h0M423 507h0m0 2h0m0 2h0m0 3v2m0 2h0m0 3h0m0 6h0m0 4v1m0 2h0m0 8h0m0 10h0M424 480h0m0 8h0m0 2h0m0 2v1m0 13h0m0 7h0m0 2h0m0 2h0m0 5h0m0 2h0m0 8h0m0 7h0m0 5h0m0 16h0M425 485h0m0 4h0m0 2h0m0 5h0m0 2h0m0 2h0m0 13h0m0 4h0m0 2h0m0 3h0m0 2h0m0 6h0m0 2h0M426 465v1m0 22h0m0 2h0m0 3h0m0 7v1m0 4h0m0 6h0m0 3v1m0 2h0m0 7h0M427 463h0m0 12v1m0 7v1m0 2h0m0 6h0m0 7h0m0 4h0m0 5h0m0 4h0m0 4h0m0 8h0M428 519h0m0 3v1m0 5h0m0 4h0m0 4h0m0 4h0m0 3v1m0 2h0m0 8h0m0 2h0m0 4h0m0 11h0M429 479h0m0 9h0m0 13h0m0 6h0m0 2h0m0 11h0m0 3h0m0 11h0m0 6h0m0 2h0m0 2h0m0 2h0m0 4h0m0 10h0M430 457h0m0 24v1m0 13h0m0 8h0m0 3v2m0 4h0m0 2h0m0 7h0m0 2h0m0 4h0m0 25h0M431 514v2m0 3h0m0 4h0m0 8v2m0 3h0m0 10v1m0 6h0M432 518h0m0 3v1m0 3h0m0 2v1m0 2h0m0 2v1m0 8v1m0 11h0M433 501h0m0 4h0m0 4h0m0 2h0m0 9h0m0 2h0m0 2v1m0 4v1m0 12h0m0 17h0M434 510h0m0 2h0m0 5h0m0 2h0m0 5h0m0 9v1m0 7h0m0 3h0m0 4h0m0 5h0m0 4h0M435 497h0m0 17h0m0 3h0m0 5h0m0 3h0m0 2h0m0 2h0m0 3h0m0 11h0m0 2h0m0 2h0m0 7h0m0 13h0m0 8h0M436 490h0m0 6h0m0 4h0m0 3h0m0 14h0m0 6h0m0 3v1m0 2v1m0 21h0M437 470h0m0 18h0m0 12h0m0 2h0m0 3h0m0 3h0m0 2h0m0 6h0m0 2h0m0 4v1m0 10h0m0 18h0M438 502h0m0 2h0m0 4h0m0 10h0m0 5h0m0 2v1m0 6h0m0 2h0m0 3v1m0 6h0M439 501h0m0 9v1m0 10h0m0 2h0m0 3h0m0 2h0m0 2h0m0 2h0m0 2h0m0 2h0m0 2h0m0 2h0m0 16h0M440 498h0m0 12h0m0 5v1m0 5h0m0 2v1m0 6h0m0 6h0m0 2h0m0 2h0m0 3h0m0 2h0m0 8h0M441 519v1m0 5h0m0 3h0m0 12h0m0 4h0m0 3h0m0 3v1m0 12v1m0 3h0M442 459h0m0 7h0m0 25v1m0 2v1m0 8h0m0 3h0m0 11h0m0 16h0m0 4h0m0 2h0m0 2h0m0 8h0M443 513h0m0 12h0m0 2h0m0 2v4m0 5h0m0 2h0m0 5h0m0 4h0m0 22h0M444 517h0m0 7h0m0 3h0m0 6h0m0 4h0m0 2h0m0 4v2m0 26h0m0 7h0M445 493h0m0 21h0m0 7h0m0 2h0m0 4h0m0 2h0m0 10v1m0 8h0m0 2h0m0 4v1m0 10h0m0 5h0M446 470h0m0 23v2m0 16h0m0 8v1m0 5h0m0 6h0m0 3h0m0 5h0m0 2h0m0 24h0M447 508v1m0 3h0m0 6h0m0 3v1m0 8h0m0 3h0m0 8h0m0 2h0m0 5v1m0 2h0M448 524h0m0 7v1m0 2h0m0 7h0m0 4h0m0 5v1m0 7h0m0 5h0M449 463h0m0 14h0m0 6h0m0 28h0m0 11h0m0 4h0m0 2v2m0 12h0m0 8h0m0 4h0m0 11h0m0 4h0M450 457h0m0 15v1m0 18h0m0 2h0m0 3h0m0 2h0m0 8h0m0 16h0m0 10h0m0 17h0M451 469h0m0 2h0m0 3v1m0 3h0m0 2h0m0 2h0m0 2h0m0 14v2m0 11h0m0 3h0M452 469v1m0 11h0m0 3h0m0 9h0m0 2h0m0 2h0m0 3v1m0 10h0m0 5h0m0 2h0m0 9h0M453 489h0m0 12h0m0 6h0m0 8h0m0 2h0m0 2h0m0 6h0m0 5v1m0 9h0m0 7h0m0 4h0m0 4h0M454 486h0m0 10h0m0 3h0m0 4h0m0 3h0m0 2h0m0 13h0m0 5v1m0 3h0m0 6h0m0 3h0m0 20h0M455 488h0m0 7h0m0 2h0m0 6h0m0 3h0m0 4v1m0 5h0m0 3h0m0 7h0m0 9v2M456 488h0m0 7h0m0 3v1m0 3v1m0 2h0m0 11v1m0 6h0m0 5h0m0 4h0m0 9h0M457 459h0m0 4h0m0 5h0m0 13h0m0 6v1m0 11h0m0 4h0m0 6h0m0 20h0m0 23h0m0 8h0m0 18h0M458 513h0m0 8h0m0 3v1m0 3h0m0 5h0m0 8v1m0 2h0m0 2v2m0 8h0m0 4h0M459 511h0m0 12v1m0 10v1m0 4h0m0 2h0m0 5h0m0 2h0m0 4h0m0 7v1m0 2h0m0 8h0M460 484v1m0 15h0m0 3h0m0 3h0m0 3h0m0 3h0m0 3v1m0 7v1m0 3h0m0 8h0m0 3h0M461 462v1m0 9v2m0 19h0m0 2v1m0 8h0m0 2h0m0 9h0m0 10h0M462 462h0m0 17h0m0 8h0m0 2h0m0 7h0m0 3h0m0 2h0m0 8h0m0 6h0m0 2h0m0 5h0m0 11h0m0 2h0M463 501h0m0 4h0m0 7v1m0 2h0m0 3h0m0 2h0m0 2h0m0 11h0m0 9h0m0 4h0M464 506h0m0 10h0m0 6h0m0 2h0m0 8v3m0 5h0m0 9h0m0 2h0m0 21h0m0 8h0m0 3h0M465 521h0m0 5h0m0 4h0m0 8h0m0 3h0m0 4h0m0 11h0m0 3h0m0 3v1m0 3h0m0 5h0M466 515h0m0 9h0m0 4h0m0 12v1m0 2h0m0 2h0m0 3h0m0 4h0m0 4h0m0 2h0m0 3h0M467 502v1m0 10v1m0 3v1m0 4h0m0 9h0m0 3h0m0 5h0m0 6h0m0 2h0M468 496h0m0 14h0m0 2h0m0 10h0m0 11h0m0 3h0m0 2h0m0 4h0m0 2h0m0 3h0m0 2h0m0 6h0m0 7h0M469 502h0m0 3h0m0 3v1m0 2v2m0 6h0m0 2h0m0 3h0m0 4h0M470 494v1m0 9h0m0 6h0m0 2h0m0 2h0m0 4h0m0 2v2m0 4h0m0 5h0M471 502h0m0 7h0m0 8h0m0 2h0m0 5h0m0 2v2m0 2h0m0 3h0m0 4h0m0 2h0m0 17h0m0 10h0M472 509h0m0 10v1m0 2h0m0 5v1m0 3h0m0 10h0m0 7v1m0 2h0m0 3h0m0 3h0M473 479h0m0 2h0m0 4h0m0 5h0m0 14h0m0 4h0m0 4h0m0 13v1m0 3v1m0 9h0M474 505h0m0 3h0m0 8v1m0 17h0m0 5h0m0 4h0m0 2h0m0 4h0m0 10v1m0 6h0m0 2h0M475 459h0m0 4h0m0 8v1m0 7v1m0 17h0m0 2v1m0 9h0m0 4h0m0 10h0m0 3h0M476 512h0m0 18v1m0 6h0m0 2h0m0 2h0m0 6h0m0 4h0m0 3h0m0 7h0m0 4v1m0 4h0m0 3h0M477 525h0m0 11v1m0 8h0m0 2h0m0 6h0m0 4h0m0 3h0m0 5h0m0 3h0m0 4h0m0 3h0M478 471v1m0 10h0m0 12h0m0 5h0m0 5h0m0 2h0m0 19v1m0 7h0m0 8h0m0 9h0m0 4h0M479 501h0m0 5v1m0 3h0m0 7v1m0 3v2M480 496h0m0 3h0m0 18h0m0 7h0m0 2h0m0 8h0m0 4v1m0 2h0m0 7v1m0 6h0m0 4h0M481 486h0m0 10h0m0 15h0m0 4v2m0 2h0m0 3h0m0 3h0m0 2h0m0 8v2m0 12h0M482 510v1m0 5h0m0 5h0m0 3h0m0 4h0m0 8h0m0 2h0m0 13h0m0 4h0m0 6h0m0 6h0m0 6h0M483 490v1m0 24h0m0 5h0m0 2h0m0 3h0m0 5h0m0 4v2m0 10h0m0 2h0m0 3h0M484 488h0m0 7h0m0 10h0m0 2h0m0 2h0m0 7h0m0 8h0m0 2h0m0 4h0m0 15h0m0 7h0m0 3h0m0 2h0M485 503h0m0 12h0m0 5h0m0 5h0m0 4v2m0 3v2m0 4h0m0 5h0m0 14h0M486 526v2m0 6h0m0 2h0m0 2h0m0 5h0m0 2h0m0 3h0m0 6h0m0 8h0m0 4h0m0 2h0M487 487h0m0 12h0m0 4h0m0 9h0m0 10h0m0 2h0m0 3h0m0 10v2m0 23h0M488 483h0m0 17h0m0 2h0m0 3v1m0 4h0m0 17h0m0 3v1m0 3v2m0 3h0M489 505h0m0 4h0m0 5v1m0 7h0m0 3h0m0 8h0m0 2h0m0 2h0m0 3h0m0 2h0m0 2h0m0 9h0M490 505h0m0 7h0m0 19h0m0 2h0m0 8v1m0 4h0m0 2v2m0 2v1m0 4h0m0 9h0m0 2h0M491 463h0m0 9v1m0 6h0m0 4h0m0 12h0m0 7h0m0 3v1m0 11h0m0 3h0m0 5h0m0 17h0M492 514h0m0 2h0m0 8h0m0 5h0m0 2h0m0 5h0m0 2v1m0 9h0m0 2v1m0 5h0M493 495h0m0 5h0m0 12h0m0 5v2m0 10v1m0 3v1m0 13v2M494 460h0m0 5v1m0 4h0m0 3h0m0 4h0m0 5h0m0 8h0m0 8h0m0 8h0m0 15h0m0 11v1M495 483h0m0 7h0m0 8v1m0 6v2m0 7v1m0 6h0m0 4h0m0 5v1M496 486v1m0 12v1m0 10v3m0 6h0m0 8h0m0 4h0M497 469h0m0 23h0m0 12v3m0 3h0m0 8v1m0 8h0m0 11h0m0 4v1M498 531v1m0 2h0m0 4h0m0 3h0m0 6h0m0 7v1m0 3h0m0 2h0m0 3h0m0 5h0M499 541h0m0 3h0m0 4v1m0 2h0m0 4h0m0 2v2m0 2h0m0 8h0m0 10h0M500 477h0m0 11h0m0 9h0m0 10h0m0 6h0m0 11h0m0 9h0m0 6h0m0 11v1m0 5h0m0 2h0m0 8h0m0 9h0M501 508h0m0 9v1m0 12v2m0 2h0m0 2v1m0 7h0m0 7h0m0 3h0m0 4h0M502 499h0m0 2h0m0 6h0m0 7v1m0 5h0m0 6h0m0 2v1m0 3h0m0 2h0m0 16h0M503 489h0m0 3h0m0 7h0m0 2h0m0 5h0m0 9h0m0 9h0m0 2h0m0 4h0m0 2h0m0 5h0M504 481v1m0 10v1m0 5h0m0 3h0m0 2h0m0 6h0m0 5h0m0 5v1m0 5h0m0 8h0M505 491h0m0 3h0m0 11h0m0 3h0m0 8h0m0 3h0m0 3h0m0 6v1m0 9h0m0 3v1m0 4h0M506 475h0m0 9h0m0 13h0m0 6h0m0 2h0m0 2h0m0 3h0m0 7v1m0 4h0m0 8h0m0 3h0m0 3h0M507 459h0m0 11v1m0 22h0m0 14h0m0 4h0m0 21h0m0 12v1m0 5v1m0 10h0m0 3h0M508 495h0m0 7h0m0 9h0m0 8h0m0 2v1m0 6v1m0 9h0m0 20h0m0 6h0M509 509h0m0 3h0m0 8h0m0 5v2m0 3h0m0 4h0m0 6h0m0 2h0m0 6h0m0 4h0m0 15h0m0 14h0M510 491h0m0 5h0m0 33h0m0 6v1m0 7h0m0 5v1m0 12h0m0 5h0M511 471h0m0 20h0m0 14h0m0 5h0m0 5h0m0 3h0m0 9h0m0 2h0m0 6v1m0 2h0m0 9h0M512 474h0m0 2h0m0 2h0m0 13h0m0 3h0m0 2h0m0 2v2m0 5h0m0 4h0m0 5v1m0 6h0M513 483h0m0 2h0m0 2h0m0 2h0m0 2h0m0 6h0m0 6h0m0 4h0m0 2h0m0 7h0m0 10v1M514 498h0m0 2h0m0 4h0m0 3h0m0 4v2m0 2h0m0 4v1m0 3h0m0 16h0m0 2h0M515 505h0m0 10h0m0 8v1m0 5h0m0 6h0m0 13h0m0 3v1m0 13h0m0 17h0M516 475h0m0 16h0m0 4h0m0 8h0m0 2h0m0 17h0m0 5h0m0 8h0m0 5v1m0 6h0m0 6h0M517 466h0m0 3h0m0 11h0m0 2h0m0 3h0m0 5h0m0 7v1m0 2h0m0 3h0m0 2h0m0 9h0M518 494h0m0 6h0m0 10h0m0 4h0m0 2h0m0 4v1m0 5h0m0 2h0m0 3v1m0 3h0m0 3h0m0 4h0M519 501h0m0 3h0m0 5v1m0 5h0m0 2h0m0 4v2m0 3h0m0 4h0m0 2h0M520 528h0m0 6h0m0 4v1m0 3h0m0 8h0m0 8h0m0 5v1m0 5h0M521 499h0m0 15h0m0 6h0m0 4h0m0 3h0m0 5v1m0 2h0m0 2h0m0 2v1m0 11v1M522 497h0m0 2h0m0 13v1m0 5h0m0 2h0m0 4h0m0 5h0m0 2h0m0 9h0m0 12h0m0 3h0M523 513h0m0 2h0m0 3h0m0 3v2m0 6h0m0 2v1m0 3v1m0 2h0m0 10h0M524 475h0m0 2h0m0 6h0m0 5v1m0 13h0m0 4h0m0 10v1m0 4h0m0 4h0m0 18h0m0 9h0M525 462v1m0 4h0m0 3h0m0 2h0m0 14h0m0 5h0m0 9h0m0 11h0m0 13h0m0 11h0m0 4h0m0 2h0m0 2h0M526 485h0m0 11h0m0 3h0m0 4h0m0 2h0m0 2h0m0 10v3m0 4h0m0 3h0m0 2h0m0 7h0M527 502h0m0 6h0m0 3v1m0 3h0m0 2h0m0 3h0m0 7h0m0 4v2m0 5h0M528 503h0m0 8h0m0 8h0m0 3h0m0 2h0m0 10v1m0 4v1m0 2h0m0 2h0m0 5h0m0 5h0M529 540h0m0 3h0m0 8h0m0 4h0m0 7v1m0 3v1m0 3h0m0 7v1m0 4h0M530 485h0m0 8h0m0 2h0m0 17h0m0 2h0m0 5h0m0 8h0m0 4v1m0 5h0m0 2h0m0 5v1M531 491h0m0 6h0m0 9h0m0 3v1m0 3h0m0 6h0m0 3h0m0 3h0m0 5h0m0 18h0m0 7h0m0 7h0m0 15h0M532 492h0m0 25h0m0 9v1m0 2h0m0 3h0m0 7h0m0 2v1m0 4v1m0 4h0m0 17h0M533 504h0m0 8h0m0 5h0m0 2h0m0 5h0m0 4h0m0 7h0m0 2v2m0 3v1m0 6h0m0 20h0M534 503h0m0 10v1m0 3h0m0 2v1m0 3h0m0 4h0m0 3h0m0 12h0m0 3v1m0 5h0M535 507h0m0 2h0m0 2h0m0 2v2m0 3h0m0 4h0m0 9h0m0 2h0m0 4h0m0 4h0m0 2h0m0 11h0M536 494h0m0 33h0m0 2h0m0 3h0m0 4v1m0 4h0m0 2v2m0 11v1m0 6h0M537 516v2m0 3h0m0 4h0m0 7h0m0 6v1m0 3h0m0 6h0M538 464h0m0 12h0m0 2h0m0 3v1m0 11h0m0 2h0m0 7h0m0 4h0m0 6h0m0 6v1m0 3h0m0 4h0M539 468h0m0 10h0m0 2h0m0 2v2m0 11v1m0 13h0m0 2h0m0 2h0M540 461h0m0 2h0m0 6h0m0 4v2m0 5h0m0 3h0m0 6h0m0 4h0m0 4h0m0 15v1m0 17h0M541 476h0m0 11h0m0 5h0m0 7h0m0 2v1m0 6h0m0 7h0m0 8h0m0 2h0m0 5h0m0 4h0m0 7h0m0 9h0M542 496h0m0 23v1m0 2v1m0 3h0m0 3h0m0 7v1m0 2h0m0 3h0m0 16h0M543 503h0m0 5h0m0 10h0m0 3h0m0 4h0m0 2h0m0 2v1m0 2h0m0 4h0m0 12h0m0 6h0m0 12h0m0 10h0M544 504h0m0 7h0m0 4h0m0 6h0m0 2h0m0 4v1m0 5v1m0 2h0m0 5h0m0 2v1M545 482h0m0 18h0m0 13h0m0 5h0m0 4v1m0 4h0m0 7h0m0 4v1m0 4h0m0 6h0m0 6h0m0 8h0M546 489v1m0 4h0m0 9h0m0 2h0m0 6h0m0 6v1m0 4h0m0 7h0m0 8h0m0 2h0m0 22h0m0 3h0M547 464h0m0 14v1m0 13v1m0 5h0m0 8v1m0 5h0m0 2h0m0 10h0m0 23h0M548 459h0m0 4h0m0 18v2m0 7v1m0 2h0m0 18h0m0 2h0m0 11h0m0 18h0m0 10h0M549 460h0m0 2h0m0 3h0m0 2h0m0 8h0m0 2h0m0 10h0m0 3h0m0 6h0m0 7h0m0 2h0m0 7h0m0 22h0m0 6h0M550 504h0m0 2v1m0 7h0m0 4h0m0 8v1m0 3v1m0 5h0m0 14h0M551 511h0m0 4h0m0 7h0m0 2v1m0 4h0m0 5h0m0 6v1m0 3v1m0 3v1m0 18h0M552 485h0m0 23h0m0 14h0m0 2h0m0 9h0m0 4v1m0 4v1m0 6h0m0 19v1m0 10h0M553 487h0m0 8h0m0 2h0m0 2h0m0 2h0m0 8h0m0 9v1m0 3h0m0 4h0m0 3h0m0 4h0m0 5h0m0 11h0M554 467h0m0 4h0m0 19h0m0 3v1m0 3h0m0 5h0m0 2h0m0 3h0m0 2h0m0 8h0m0 6h0m0 3h0M555 465h0m0 13h0m0 7h0m0 3h0m0 4h0m0 2v1m0 7v1m0 6v1m0 5h0m0 5h0M556 469h0m0 2h0m0 10v3m0 4v1m0 9h0m0 3v2m0 3h0m0 4h0m0 9h0M557 482h0m0 7h0m0 2v1m0 4v2m0 5h0m0 6h0m0 5h0m0 3h0m0 4h0m0 5h0M558 493h0m0 4h0m0 5h0m0 3h0m0 4h0m0 3h0m0 6v1m0 2h0m0 11v1m0 9h0M559 486h0m0 23h0m0 7h0m0 4v1m0 6v1m0 7h0m0 27h0m0 9h0m0 3h0M560 504h0m0 3h0m0 4v1m0 5h0m0 3h0m0 2h0m0 15h0m0 8h0m0 8h0m0 21h0m0 2h0M561 470h0m0 6v1m0 3h0m0 8h0m0 2v1m0 4h0m0 4h0m0 2h0m0 17h0m0 9h0m0 13h0M562 519h0m0 15h0m0 6h0m0 2h0m0 2v1m0 2h0m0 2h0m0 8h0m0 3h0m0 3h0m0 2v1M563 469h0m0 13h0m0 6h0m0 6h0m0 2h0m0 17h0m0 7v1m0 7h0m0 2v1m0 10h0M564 492h0m0 9h0m0 7v1m0 5h0m0 3h0m0 4v1m0 21h0m0 6h0M565 501h0m0 5h0m0 3h0m0 2h0m0 15h0m0 4h0m0 3v1m0 6h0m0 4h0m0 2h0m0 5v1m0 6h0M566 501v1m0 4v2m0 11h0m0 5h0m0 6h0m0 3v1m0 4h0m0 9h0M567 507h0m0 3h0m0 2v1m0 3h0m0 3h0m0 2h0m0 2h0m0 4h0m0 5h0m0 5v1m0 12h0M568 508h0m0 15h0m0 12h0m0 7h0m0 2h0m0 5h0m0 14h0m0 3h0m0 8v1m0 4h0m0 2h0M569 484h0m0 5h0m0 3h0m0 9h0m0 4h0m0 11h0m0 8v1m0 4h0m0 7h0m0 9h0m0 13h0M570 468h0m0 7h0m0 9h0m0 3v1m0 3h0m0 2h0m0 2h0m0 3h0m0 2h0m0 9h0m0 10h0m0 8h0M571 469h0m0 6h0m0 2h0m0 14h0m0 6v2m0 2h0m0 3h0m0 7h0m0 5h0M572 481h0m0 10h0m0 2h0m0 2h0m0 10v2m0 3h0m0 3v1m0 3h0m0 4h0m0 6h0m0 26h0M573 490h0m0 9h0m0 2h0m0 4v1m0 2h0m0 4h0m0 2v1m0 6h0m0 2h0m0 14h0M574 462h0m0 9h0m0 3v1m0 25v1m0 2h0m0 12h0m0 7h0m0 2h0m0 4h0m0 18h0m0 15h0m0 4h0M575 493h0m0 13h0m0 9h0m0 7h0m0 3h0m0 8h0m0 4h0m0 4h0m0 9h0m0 5v1M576 484h0m0 17h0m0 4h0m0 6h0m0 3h0m0 4h0m0 2h0m0 6h0m0 7h0m0 4h0m0 4h0m0 2h0m0 17h0m0 12h0M577 516v1m0 2h0m0 13h0m0 8h0m0 2h0m0 2h0m0 4h0m0 3h0m0 2h0m0 6v1M578 495h0m0 22h0m0 6h0m0 10v2m0 2h0m0 3h0m0 9v2m0 5h0m0 12h0M579 502h0m0 3h0m0 3h0m0 3h0m0 4h0m0 9h0m0 2h0m0 2h0m0 2h0m0 4h0m0 3h0m0 6h0m0 3h0M580 478h0m0 2h0m0 2h0m0 4v1m0 7h0m0 10v2m0 9h0m0 3h0m0 10h0M581 497v1m0 3h0m0 5h0m0 9h0m0 8h0m0 3v2m0 10h0m0 8h0M582 490v1m0 14h0m0 5v1m0 4v1m0 2h0m0 5v1m0 3h0m0 3h0m0 13h0m0 2h0M583 484h0m0 3h0m0 3h0m0 2v1m0 9h0m0 10v1m0 5h0m0 3h0m0 16h0M584 461h0m0 4h0m0 14h0m0 12h0m0 10h0m0 4v1m0 4h0m0 3h0m0 2h0m0 2h0m0 2h0m0 2h0m0 10h0M585 460h0m0 2v1m0 5h0m0 4h0m0 7h0m0 15h0m0 3v1m0 6h0m0 2h0m0 5h0m0 20h0m0 3h0M586 479h0m0 2h0m0 2h0m0 2h0m0 9h0m0 2h0m0 4h0m0 6h0m0 6v1m0 2h0m0 4h0m0 3h0M587 461h0m0 2h0m0 2h0m0 8v1m0 2v2m0 3h0m0 11h0m0 3h0m0 11h0m0 7h0M588 482h0m0 5v1m0 19h0m0 3v1m0 8h0m0 3v1m0 13h0m0 13h0m0 2h0M589 505h0m0 10v1m0 4h0m0 8v2m0 5h0m0 4h0m0 2v1m0 6h0m0 10h0M590 468v1m0 12h0m0 6h0m0 5h0m0 7v1m0 5h0m0 11v1m0 7h0m0 3h0m0 2h0M591 467v2m0 9h0m0 8h0m0 6h0m0 3v2m0 6v1m0 10h0m0 12h0M592 491v1m0 2h0m0 13v1m0 8h0m0 5h0m0 5h0m0 3h0m0 4h0m0 13h0m0 5v1M593 500h0m0 5h0m0 7h0m0 5h0m0 3h0m0 2h0m0 7h0m0 4v1m0 2h0m0 9h0m0 2h0M594 485h0m0 7h0m0 2h0m0 8h0m0 4h0m0 4h0m0 10h0m0 2h0m0 2v1m0 3h0m0 8h0M595 501h0m0 3h0m0 8h0m0 2h0m0 11h0m0 3v1m0 7h0m0 11h0m0 4v1m0 2h0M596 518h0m0 6h0m0 4h0m0 5h0m0 9h0m0 5h0m0 4v2m0 3h0m0 6h0m0 3h0m0 3h0m0 3h0M597 509v1m0 13h0m0 3h0m0 4h0m0 6v1m0 6h0m0 5h0m0 9h0m0 13h0M598 488h0m0 22h0m0 4v1m0 3h0m0 2v1m0 4h0m0 2v1m0 3h0m0 4h0M599 498h0m0 4h0m0 4v1m0 13v1m0 3h0m0 3h0m0 3h0m0 2h0m0 5h0m0 14h0M600 502h0m0 3h0m0 3h0m0 8h0m0 5v1m0 6h0m0 9h0m0 3h0m0 11v1M601 456h0m0 15h0m0 4h0m0 9v1m0 5h0m0 10h0m0 2h0m0 8h0m0 12h0m0 3h0m0 24h0M602 472h0m0 16h0m0 2h0m0 3h0m0 5h0m0 7h0m0 3h0m0 5h0m0 2h0m0 2h0m0 3h0m0 5h0m0 3h0m0 3h0M603 512v1m0 7h0m0 2h0m0 4v1m0 2h0m0 9h0m0 6h0m0 2h0m0 7h0m0 3h0m0 5h0M604 459h0m0 3v1m0 7h0m0 3v1m0 2h0m0 9h0m0 9h0m0 8h0m0 6h0m0 6h0m0 11h0M605 468h0m0 11h0m0 3h0m0 4h0m0 5h0m0 4h0m0 2h0m0 7h0m0 5h0m0 2h0m0 8v1m0 4h0m0 21h0M606 510h0m0 12v2m0 2h0m0 4h0m0 3h0m0 4h0m0 4v1m0 4h0m0 5h0M607 518h0m0 4h0m0 7h0m0 8h0m0 14v2m0 3h0m0 2v1m0 12h0m0 2h0m0 7h0M608 523h0m0 2h0m0 6v2m0 5v1m0 5h0m0 8h0m0 5h0m0 2v1M609 502h0m0 19h0m0 2h0m0 3h0m0 9h0m0 4h0m0 11h0m0 4v1m0 2h0m0 6h0m0 16h0M610 500v1m0 3h0m0 2h0m0 5h0m0 2h0m0 4h0m0 4v1m0 2h0m0 4h0m0 4h0m0 9h0M611 497h0m0 11h0m0 4h0m0 3h0m0 4h0m0 8h0m0 5v1m0 4h0m0 5h0m0 8v2M612 517h0m0 5h0m0 5h0m0 2v1m0 3v1m0 3h0m0 3v1m0 3h0m0 5h0m0 7h0M613 509h0m0 6h0m0 10h0m0 2v1m0 8h0m0 4h0m0 2v1m0 3h0m0 22h0M614 508h0m0 7h0m0 8v1m0 4h0m0 8h0m0 4h0m0 3h0m0 5h0m0 9h0m0 5h0m0 4h0M615 511h0m0 9h0m0 3h0m0 8v3m0 3h0m0 6h0m0 4h0m0 2h0m0 2h0M616 500h0m0 6v1m0 7h0m0 5h0m0 5h0m0 6h0m0 5h0m0 9h0m0 10v1m0 2h0m0 7h0M617 483h0m0 7h0m0 7h0m0 2h0m0 8h0m0 18h0m0 5v2m0 5h0m0 3h0m0 14h0M618 488h0m0 28h0m0 2h0m0 4v1m0 2v1m0 4v1m0 2h0m0 6h0m0 15h0m0 2h0M619 504h0m0 5h0m0 8h0m0 5v1m0 2v1m0 5h0m0 4v1m0 12h0m0 2h0M620 527h0m0 3h0m0 3h0m0 2h0m0 2v1m0 6h0m0 5h0m0 2v1m0 7h0m0 2h0m0 6h0M621 481h0m0 10h0m0 13h0m0 10h0m0 3v1m0 6h0m0 7v2m0 7h0m0 3h0M622 474h0m0 17h0m0 11h0m0 3v1m0 8h0m0 5h0m0 9h0m0 3h0m0 3h0m0 5v1m0 2h0m0 3h0m0 8h0M623 504h0m0 2h0m0 5h0m0 2h0m0 17v1m0 3h0m0 3h0m0 3v2m0 2h0m0 3h0M624 481h0m0 14h0m0 4h0m0 6h0m0 6h0m0 7h0m0 4h0m0 2h0m0 7h0m0 3v1m0 6h0M625 480h0m0 14h0m0 8h0m0 2h0m0 5v2m0 2h0m0 2v1m0 2h0m0 2h0m0 2h0m0 11h0M626 477h0m0 22h0m0 4h0m0 5h0m0 2v1m0 4h0m0 4h0m0 5h0m0 3h0m0 9h0M627 499h0m0 2v1m0 2v1m0 5h0m0 5h0m0 12h0m0 5v1m0 5h0m0 3v1M628 512v2m0 2h0m0 11v1m0 2v1m0 5v1m0 14h0m0 7h0M629 516h0m0 4h0m0 8h0m0 2h0m0 3h0m0 8h0m0 10v2m0 2h0m0 7h0m0 7h0m0 2h0m0 2h0M630 492h0m0 23h0m0 13v1m0 5h0m0 3h0m0 10h0m0 6h0m0 7h0m0 2h0m0 5h0m0 9h0m0 2h0M631 531v1m0 4h0m0 4h0m0 3h0m0 3h0m0 2h0m0 3h0m0 6h0m0 2h0M632 469h0m0 15h0m0 5h0m0 4h0m0 5h0m0 7h0m0 4h0m0 4h0m0 3h0m0 2v1m0 12h0m0 6h0m0 10h0M633 471h0m0 27h0m0 7v1m0 9v1m0 2h0m0 2v1m0 5h0m0 4h0m0 2h0m0 2h0M634 483h0m0 2h0m0 3v1m0 7h0m0 3h0m0 2h0m0 3h0m0 5h0m0 2h0m0 5h0m0 16h0m0 11h0M635 489v1m0 10h0m0 2h0m0 11v1m0 2h0m0 6v1m0 3h0m0 3h0m0 8h0M636 481h0m0 4v1m0 4h0m0 6v2m0 11h0m0 7v1m0 5h0m0 15h0m0 6h0M637 508h0m0 2h0m0 3h0m0 5h0m0 4v2m0 7h0m0 5h0M638 522h0m0 3h0m0 9h0m0 2h0m0 2h0m0 2h0m0 4h0m0 3h0m0 3h0m0 5h0m0 3h0m0 2h0m0 10h0M639 459h0m0 4h0m0 8h0m0 7h0m0 33v1m0 3h0m0 3h0m0 4h0m0 15h0m0 21h0m0 6h0m0 3h0M640 492h0m0 8h0m0 2h0m0 6h0m0 2h0m0 5h0m0 4h0m0 3h0m0 13v1m0 8h0M641 505h0m0 2h0m0 2v1m0 6h0m0 3v2m0 6h0m0 2v1m0 7h0M642 459h0m0 2h0m0 7h0m0 15h0m0 7h0m0 2h0m0 2v1m0 5v1m0 2h0m0 22h0m0 13h0M643 462v1m0 4h0m0 2h0m0 3h0m0 3v1m0 2v1m0 15h0m0 10h0m0 17h0m0 15h0M644 463h0m0 8h0m0 6v1m0 6h0m0 2v1m0 7h0m0 6h0m0 4h0m0 7h0m0 18h0m0 4h0m0 3h0M645 485h0m0 3h0m0 5h0m0 3h0m0 8h0m0 3h0m0 6h0m0 2h0m0 5h0m0 2v1m0 7h0m0 3h0M646 512v1m0 2h0m0 9h0m0 4h0m0 3h0m0 4h0m0 4h0m0 6h0M647 483h0m0 13h0m0 2h0m0 5h0m0 2v1m0 3h0m0 11h0m0 2h0m0 2h0m0 9h0m0 6h0M648 491h0m0 10h0m0 7h0m0 6h0m0 2h0m0 2v1m0 2h0m0 2h0m0 2h0m0 7h0m0 7h0M649 461h0m0 4v1m0 4h0m0 7h0m0 19h0m0 2h0m0 8h0m0 2h0m0 6h0m0 4h0m0 6h0m0 5h0M650 466h0m0 13h0m0 11h0m0 2v1m0 3h0m0 5h0m0 13v1m0 10v1m0 6v1m0 23h0M651 464h0m0 14h0m0 9h0m0 11h0m0 3h0m0 7h0m0 18h0m0 6h0m0 3v1m0 2h0m0 10h0M652 500h0m0 13h0m0 8h0m0 7v1m0 5h0m0 5h0m0 2h0m0 2h0m0 4h0m0 7h0M653 514h0m0 6v1m0 3h0m0 3h0m0 4h0m0 3h0m0 2h0m0 3h0m0 4h0m0 6h0M654 508v2m0 8v1m0 3h0m0 6h0m0 5h0m0 6h0m0 7v1m0 4h0m0 9h0M655 515h0m0 8h0m0 2h0m0 2h0m0 4v1m0 2h0m0 4h0m0 2h0m0 2h0m0 6v1m0 2h0M656 490v1m0 7h0m0 5h0m0 18h0m0 2h0m0 3h0m0 3h0m0 3h0m0 2h0m0 2h0m0 9h0M657 512h0m0 3h0m0 12h0m0 3h0m0 2h0m0 4v2m0 3h0m0 3h0m0 3h0m0 4v1m0 7h0M658 505h0m0 8h0m0 2h0m0 4h0m0 5h0m0 6h0m0 5h0m0 3v1m0 3h0m0 3h0m0 15h0M659 489h0m0 2h0m0 12h0m0 10h0m0 7h0m0 9h0m0 10h0m0 5v1m0 2v1m0 7h0M660 505h0m0 11v1m0 4v2m0 8v2m0 2h0m0 5h0m0 6v1M661 480h0m0 3h0m0 4h0m0 9h0m0 11h0m0 15v1m0 13h0m0 13h0m0 5h0m0 2v1m0 6h0M662 497h0m0 5h0m0 3h0m0 7h0m0 4v1m0 9v3m0 12h0M663 461h0m0 9h0m0 15h0m0 4v1m0 2h0m0 20v1m0 6h0m0 21h0m0 5h0m0 21h0M664 497h0m0 10h0m0 15h0m0 4h0m0 2h0m0 5v1m0 4h0m0 5h0m0 3h0m0 3v1m0 3h0M665 486h0m0 12h0m0 5h0m0 9h0m0 8h0m0 5v1m0 5h0m0 13h0m0 8h0m0 2h0m0 14h0m0 10h0M666 500h0m0 2h0m0 2h0m0 2h0m0 12h0m0 8h0m0 3h0m0 2h0m0 4h0m0 7h0m0 2h0m0 5h0M667 492h0m0 13h0m0 14h0m0 6h0m0 11h0m0 3h0m0 4h0m0 6h0m0 2h0m0 5h0m0 2h0m0 2h0m0 9h0m0 9h0M668 456h0m0 15h0m0 10h0m0 3h0m0 2h0m0 2h0m0 7h0m0 5h0m0 5h0m0 4h0m0 3h0m0 4h0m0 7h0M669 457h0m0 13h0m0 7h0m0 8h0m0 4h0m0 16h0m0 12h0m0 3h0m0 10h0m0 9h0M670 498h0m0 3h0m0 2h0m0 7h0m0 9h0m0 5h0m0 5h0m0 2h0m0 2h0m0 2h0m0 6h0m0 5h0m0 4h0M671 498v3m0 2h0m0 5v1m0 2h0m0 5h0m0 5h0m0 4h0m0 9h0m0 2h0M672 484h0m0 6h0m0 4h0m0 8v3m0 18h0m0 2h0m0 4h0m0 2h0m0 7h0M673 491h0m0 2h0m0 9h0m0 7h0m0 13h0m0 2h0m0 8h0m0 5h0m0 4v1m0 7h0m0 3h0m0 10h0m0 7h0M674 473h0m0 19h0m0 3h0m0 8h0m0 12v1m0 9h0m0 14v2m0 13v1m0 2h0m0 10h0M675 507h0m0 11v1m0 3h0m0 9v1m0 2h0m0 3h0m0 10h0m0 6h0m0 5v1m0 6h0M676 512h0m0 12v1m0 5h0m0 3v4m0 9h0M677 494h0m0 7h0m0 4h0m0 3v1m0 2v1m0 2h0m0 3h0m0 3h0m0 11h0M678 482h0m0 4h0m0 14h0m0 3h0m0 3h0m0 4v1m0 8h0m0 5v1m0 7h0M679 489v1m0 2h0m0 5v1m0 2h0m0 5h0m0 5h0m0 7h0m0 3h0m0 2h0m0 4h0m0 3h0M680 513h0m0 6h0m0 8h0m0 4h0m0 12h0m0 2h0m0 3h0m0 5h0m0 5h0m0 3v2m0 4h0m0 6h0M681 483v1m0 10v1m0 6v2m0 4h0m0 4h0m0 2v1m0 6h0m0 9h0M682 512h0m0 4h0m0 5v1m0 4h0m0 4h0m0 2h0m0 3h0m0 2v2m0 7h0m0 5h0M683 515v1m0 4h0m0 4h0m0 2h0m0 2h0m0 9v1m0 4h0m0 2h0m0 15h0M684 515h0m0 2h0m0 7v1m0 5v1m0 4h0m0 2h0m0 6h0m0 2h0m0 11h0m0 19h0M685 488h0m0 3h0m0 17h0m0 2h0m0 2h0m0 2h0m0 2v1m0 3h0m0 15v2m0 3h0M686 499h0m0 3v2m0 3h0m0 13h0m0 4v2m0 4v1m0 2h0m0 5h0M687 512h0m0 4h0m0 3v1m0 3v1m0 3h0m0 2h0m0 2v1m0 4h0m0 2h0m0 9h0M688 457h0m0 3h0m0 3h0m0 2h0m0 2h0m0 8h0m0 10h0m0 11h0m0 2h0m0 9h0m0 3h0m0 6h0m0 7h0m0 7h0M689 476h0m0 31h0m0 13h0m0 12h0m0 3h0m0 7h0m0 2h0m0 2h0m0 2h0m0 7v1M690 519v1m0 16v1m0 2v2m0 2h0m0 4v2m0 14h0m0 4h0m0 2h0M691 489h0m0 32h0m0 4v1m0 11h0m0 6h0m0 5h0m0 5v1m0 6h0m0 4h0m0 3h0m0 6h0m0 9h0M692 522h0m0 7h0m0 4h0m0 7h0m0 7h0m0 2v1m0 8v3m0 2h0m0 5h0M693 535v1m0 2h0m0 5h0m0 5v2m0 3h0m0 2h0m0 2v1m0 2h0m0 3h0M694 517h0m0 8h0m0 2v2m0 2h0m0 11h0m0 2v2m0 3h0m0 4h0m0 8h0M695 518h0m0 6h0m0 2h0m0 7v1m0 2v1m0 4h0m0 8h0m0 2h0m0 5h0m0 10h0M696 473h0m0 8h0m0 21v1m0 4h0m0 8h0m0 2h0m0 6h0m0 8h0m0 2h0m0 4h0m0 7h0m0 5h0M697 481v1m0 7v1m0 3h0m0 7h0m0 3h0m0 7h0m0 2h0m0 3h0m0 8h0m0 8h0M698 495h0m0 10h0m0 8h0m0 4v1m0 8h0m0 3h0m0 12h0m0 2h0m0 4h0m0 2h0m0 9h0M699 500h0m0 9h0m0 5h0m0 7h0m0 5v1m0 7h0m0 3h0m0 6h0m0 4h0m0 5h0M700 523h0m0 4h0m0 2h0m0 7v1m0 2v3m0 3h0m0 2h0m0 7h0M701 503h0m0 4h0m0 2h0m0 3h0m0 5h0m0 4h0m0 2h0m0 3v1m0 3h0m0 7v1m0 5h0M702 505h0m0 2h0m0 2v1m0 4h0m0 3v1m0 2v1m0 4h0m0 3h0m0 5h0M703 506h0m0 4h0m0 9v3m0 2h0m0 3v1m0 2v1m0 12h0M704 459v1m0 6h0m0 3h0m0 2h0m0 2h0m0 3h0m0 14h0m0 7h0m0 12h0m0 3h0m0 4h0m0 20h0m0 18h0M705 519v1m0 3h0m0 4h0m0 3h0m0 2v1m0 4h0m0 2h0m0 8h0m0 2h0m0 3v1m0 4h0M706 486h0m0 5h0m0 3v1m0 6h0m0 5h0m0 8h0m0 12h0m0 3h0m0 6h0m0 4h0m0 17h0M707 500h0m0 10v2m0 9h0m0 10h0m0 4v2m0 5h0m0 2h0m0 5h0m0 3h0M708 462h0m0 10h0m0 19h0m0 4h0m0 14v1m0 5h0m0 5v1m0 2h0m0 10h0m0 3h0M709 463h0m0 26h0m0 5h0m0 16v1m0 5h0m0 3v1m0 7h0m0 12h0m0 5h0m0 2h0m0 3h0M710 495h0m0 7h0m0 3v1m0 7v1m0 4h0m0 2v2m0 20h0m0 14h0m0 3h0M711 483h0m0 7h0m0 13h0m0 5v1m0 10h0m0 2h0m0 2h0m0 6h0m0 3h0m0 15h0m0 13h0M712 503h0m0 6v1m0 2h0m0 4h0m0 3h0m0 2h0m0 7v4m0 8h0m0 11h0M713 497h0m0 4h0m0 6h0m0 9h0m0 3h0m0 2h0m0 4h0m0 2v1m0 3h0m0 11h0m0 4h0M714 493h0m0 3h0m0 9h0m0 9h0m0 2v1m0 10h0m0 3h0m0 6h0m0 6h0m0 2h0M715 523h0m0 2h0m0 6h0m0 2h0m0 6h0m0 3h0m0 3v3m0 11h0m0 3h0M716 512h0m0 3h0m0 2h0m0 4v1m0 2h0m0 3h0m0 2h0m0 3h0m0 4h0m0 6v1M717 491v1m0 7h0m0 11h0m0 4h0m0 16v1m0 3h0m0 4h0m0 2v1m0 5h0m0 7h0M718 458v1m0 17h0m0 6h0m0 11h0m0 15h0m0 15h0m0 4h0m0 9v1m0 2h0m0 12h0m0 7h0M719 465h0m0 2h0m0 10h0m0 23h0m0 8h0m0 5h0m0 4h0m0 24h0m0 2h0m0 2h0m0 8v1m0 19h0M720 495h0m0 8h0m0 8h0m0 5h0m0 7h0m0 6v1m0 2h0m0 10h0m0 6h0m0 10h0m0 19h0M721 488h0m0 8h0m0 4h0m0 2h0m0 6h0m0 5v1m0 2v1m0 2h0m0 10v1m0 9h0m0 3h0M722 460h0m0 7v1m0 4h0m0 7h0m0 3h0m0 6h0m0 2h0m0 4h0m0 2h0m0 4h0m0 3h0m0 12h0M723 506h0m0 6v1m0 3h0m0 6v1m0 2h0m0 3h0m0 2v1m0 3h0m0 2h0M724 482h0m0 4h0m0 7h0m0 5h0m0 7v1m0 3h0m0 2h0m0 15h0m0 8v1m0 3h0m0 18h0M725 457h0m0 14h0m0 4h0m0 4h0m0 2h0m0 2h0m0 5v1m0 7h0m0 2h0m0 3h0m0 2h0m0 25h0M726 459h0m0 31v2m0 4v1m0 3h0m0 3h0m0 6h0m0 4h0m0 2h0m0 8h0m0 7v1M727 515h0m0 4v4m0 2v1m0 5h0m0 2h0m0 9h0M728 479h0m0 2h0m0 2h0m0 3h0m0 15v1m0 5h0m0 8h0m0 4v1m0 2h0m0 7h0m0 2h0M729 478h0m0 2h0m0 4h0m0 8v3m0 4h0m0 6h0m0 8h0m0 5h0m0 3h0M730 492v1m0 5v3m0 7v1m0 8h0m0 3h0m0 6h0m0 3h0m0 5h0M731 487h0m0 5h0m0 3v2m0 3h0m0 5h0m0 2h0m0 4h0m0 2h0m0 4h0M732 497h0m0 2h0m0 4h0m0 3h0m0 3h0m0 3h0m0 5h0m0 4h0m0 4h0m0 2h0m0 2h0m0 4h0m0 9h0M733 500v1m0 10h0m0 4h0m0 2h0m0 3h0m0 3h0m0 7v1m0 6h0m0 13h0m0 5h0M734 480h0m0 20h0m0 2h0m0 8h0m0 2v2m0 4h0m0 9h0m0 8h0m0 2h0m0 18h0m0 24h0M735 501h0m0 2h0m0 10h0m0 4h0m0 4h0m0 5v2m0 9h0m0 6h0m0 16v2M736 507h0m0 7h0m0 5h0m0 2v1m0 3h0m0 7h0m0 3v1m0 11h0m0 6v1M737 514h0m0 3h0m0 5h0m0 4h0m0 2v1m0 9v1m0 3v1m0 11h0m0 2h0m0 6h0M738 495h0m0 17h0m0 8v1m0 5v1m0 2h0m0 2v1m0 5h0m0 4v1M739 513h0m0 9v1m0 2h0m0 2h0m0 3v2m0 3h0m0 7h0m0 3h0M740 479h0m0 5h0m0 9v2m0 5h0m0 2v1m0 7v1m0 3h0m0 2h0m0 2h0M741 476h0m0 5h0m0 7h0m0 9h0m0 5v1m0 11v1m0 3v1m0 4h0m0 3h0M742 472h0m0 3h0m0 4h0m0 3h0m0 10v1m0 2h0m0 9h0m0 8h0m0 13h0m0 3v1m0 5h0m0 17h0M743 502h0m0 5h0m0 2h0m0 3v1m0 3h0m0 2v1m0 4h0m0 6h0m0 3h0m0 13h0m0 5h0M744 515h0m0 6v1m0 2h0m0 2h0m0 2h0m0 4h0m0 10h0m0 5h0m0 4h0m0 7h0m0 11h0M745 505h0m0 8v1m0 2v1m0 2v1m0 2h0m0 5h0m0 7h0m0 4h0m0 2h0m0 9h0M746 490h0m0 24h0m0 6h0m0 5h0m0 8h0m0 7h0m0 2h0m0 5h0m0 5h0m0 2h0m0 2h0M747 503h0m0 9v1m0 6h0m0 2v3m0 6v1m0 11h0m0 14h0M748 503h0m0 9h0m0 7v1m0 2h0m0 7h0m0 2h0m0 2v1m0 3v1m0 9h0m0 29h0M749 485h0m0 15v2m0 2h0m0 11h0m0 2h0m0 4h0m0 9h0m0 7h0m0 4v1M750 503h0m0 10h0m0 2h0m0 8v3m0 4h0m0 4h0m0 2v1m0 12h0m0 2h0M751 517h0m0 3h0m0 5h0m0 3v2m0 3h0m0 9h0m0 6h0m0 2h0m0 2h0M752 481h0m0 13h0m0 9h0m0 3h0m0 3h0m0 11h0m0 5h0m0 8h0m0 7v1m0 24h0m0 3h0M753 487h0m0 5h0m0 4h0m0 2h0m0 10v1m0 13h0m0 2v1m0 2h0m0 9h0m0 7h0m0 17h0M754 512v1m0 3h0m0 6h0m0 7h0m0 7v1m0 3h0m0 4v1m0 6h0M755 512h0m0 2h0m0 4h0m0 4v2m0 3h0m0 2h0m0 3v3m0 8h0m0 2h0m0 22h0M756 466h0m0 3h0m0 33h0m0 2h0m0 7v1m0 6h0m0 7h0m0 11h0m0 3h0m0 22h0M757 477h0m0 3h0m0 7h0m0 5h0m0 3h0m0 5h0m0 2v1m0 6h0m0 4h0m0 3h0m0 15h0m0 45h0M758 467h0m0 4h0m0 8v4m0 2h0m0 13v1m0 3h0m0 5h0m0 7h0M759 478h0m0 6h0m0 2h0m0 6h0m0 2v2m0 4h0m0 2h0m0 5h0m0 8h0m0 9h0M760 474h0m0 14h0m0 8h0m0 3v1m0 5h0m0 2v1m0 10h0m0 3v1m0 3h0M761 507h0m0 12v1m0 3h0m0 3h0m0 2h0m0 2h0m0 2h0m0 2h0m0 5h0m0 2h0m0 3h0m0 14h0m0 4h0M762 507h0m0 8h0m0 11v2m0 4h0m0 4h0m0 3h0m0 5v1m0 10h0m0 3h0m0 11h0M763 497h0m0 4h0m0 2h0m0 8h0m0 2h0m0 3h0m0 12h0m0 8h0m0 2h0m0 15h0m0 7h0M764 465h0m0 5h0m0 10h0m0 5h0m0 4h0m0 2h0m0 4h0m0 3h0m0 5h0m0 5h0m0 5h0m0 2h0m0 16h0M765 464h0m0 14h0m0 6h0m0 9v1m0 6v2m0 8v1m0 3h0m0 7h0m0 9h0M766 465h0m0 32h0m0 4h0m0 3h0m0 6h0m0 11h0m0 4h0m0 4h0m0 13h0m0 4h0m0 2h0m0 7h0m0 5h0m0 3h0M767 460h0m0 4h0m0 3h0m0 2v1m0 3h0m0 9h0m0 6h0m0 12h0m0 5h0m0 5v1m0 11h0m0 13h0M768 501h0m0 15h0m0 4h0m0 3h0m0 2v2m0 7h0m0 6h0m0 2h0m0 3v1m0 5h0M769 521h0m0 4h0m0 6h0m0 4h0m0 3v1m0 6h0m0 5h0m0 2h0m0 10h0m0 12h0M770 487h0m0 15h0m0 6h0m0 3h0m0 2h0m0 3h0m0 3h0m0 7h0m0 2h0m0 3h0m0 7h0m0 3h0m0 6h0m0 16h0M771 494h0m0 2h0m0 10h0m0 13h0m0 2v1m0 6h0m0 2h0m0 2h0m0 2h0m0 4h0m0 2h0M772 498h0m0 7h0m0 3h0m0 3h0m0 2h0m0 5h0m0 5v1m0 5h0m0 4h0m0 3h0m0 2v1M773 465h0m0 11h0m0 21h0m0 3h0m0 8h0m0 6h0m0 7h0m0 2h0m0 3h0m0 4h0m0 5h0m0 3h0m0 7h0M774 460h0m0 2v1m0 6h0m0 4h0m0 2h0m0 10h0m0 7h0m0 6h0m0 19h0m0 3h0m0 7h0m0 19h0M775 468v1m0 13h0m0 6h0m0 6v1m0 2h0m0 19v1m0 2h0m0 6h0m0 22h0M776 463h0m0 10h0m0 2h0m0 8h0m0 5h0m0 5h0m0 16h0m0 4h0m0 4h0m0 3h0m0 4h0m0 5h0m0 15h0M777 476h0m0 3h0m0 6h0m0 6h0m0 4h0m0 3v1m0 5h0m0 10v1m0 2v1m0 9h0m0 20h0M778 506h0m0 6h0m0 15h0m0 2h0m0 8h0m0 7v1m0 5v1m0 2h0m0 2v1m0 7h0m0 6h0M779 516h0m0 7h0m0 8h0m0 9h0m0 7h0m0 8h0m0 3v3m0 4h0m0 2h0m0 4h0M780 498h0m0 4v1m0 8h0m0 2h0m0 2h0m0 3v1m0 5h0m0 8h0m0 2v2m0 5h0M781 524h0m0 3h0m0 2h0m0 2h0m0 2h0m0 2h0m0 3h0m0 5h0m0 2v1m0 7h0m0 4h0m0 5h0M782 481h0m0 11h0m0 2h0m0 9h0m0 7h0m0 3h0m0 4h0m0 6h0m0 9h0m0 18h0m0 2h0m0 7v1m0 7h0M783 515h0m0 15v1m0 3v1m0 2v1m0 6h0m0 3h0m0 3h0m0 4h0m0 2h0m0 5h0m0 8h0M784 489h0m0 8h0m0 9h0m0 6v1m0 2h0m0 2v1m0 26h0m0 7v1m0 15h0M785 495v1m0 7v1m0 6h0m0 4h0m0 9h0m0 8h0m0 3h0m0 3h0m0 9h0m0 2h0m0 9h0M786 485h0m0 19h0m0 17h0m0 15h0m0 2v2m0 5h0m0 2h0m0 2v1m0 8h0M787 460h0m0 5h0m0 17h0m0 4h0m0 10h0m0 5v1m0 3h0m0 2h0m0 15h0m0 2h0m0 7h0m0 11h0M788 482h0m0 8h0m0 2h0m0 2h0m0 2h0m0 14h0m0 4h0m0 3h0m0 6h0m0 3h0m0 3h0m0 10h0M789 474v1m0 3h0m0 23h0m0 4h0m0 5v1m0 8h0m0 6h0m0 15h0m0 11h0m0 3h0m0 7h0M790 511h0m0 4h0m0 3h0m0 6v1m0 16h0m0 15v1m0 4v1m0 3h0m0 13h0M791 516h0m0 3v1m0 4h0m0 3h0m0 5h0m0 6h0m0 6h0m0 2h0m0 6h0m0 3h0m0 6h0M792 521h0m0 2v1m0 4v1m0 6v1m0 4v1m0 3h0m0 2h0m0 16h0M793 519h0m0 5h0m0 2h0m0 4h0m0 3v2m0 4v1m0 5h0m0 3h0m0 2h0m0 6h0m0 2h0M794 494h0m0 8h0m0 7h0m0 9h0m0 4h0m0 11h0m0 13h0m0 2v2m0 2h0m0 3h0m0 4h0m0 4h0M795 468v1m0 8h0m0 15h0m0 8h0m0 6h0m0 3h0m0 4h0m0 3h0m0 4v1m0 22h0m0 4h0m0 25h0M796 491h0m0 13h0m0 8h0m0 9v2m0 2v3m0 3v1M797 484v1m0 4h0m0 4h0m0 2h0m0 3h0m0 10v1m0 6h0m0 5h0m0 2v1m0 2h0m0 15h0M798 519v1m0 7v3m0 4v2m0 7h0m0 4v1m0 4h0M799 481h0m0 26h0m0 5v1m0 2h0m0 6h0m0 2v2m0 12h0m0 4h0m0 5v1M800 477h0m0 24h0m0 5h0m0 6h0m0 10v1m0 2h0m0 9h0m0 3h0m0 2h0m0 6h0m0 3h0m0 4h0M801 458h0m0 12h0m0 10h0m0 4h0m0 2h0m0 13h0m0 7h0m0 16v1m0 30h0m0 6h0M802 489h0m0 5v1m0 9v1m0 10v1m0 3h0m0 13h0m0 7v2m0 9h0M803 498h0m0 8h0m0 4h0m0 5h0m0 3v2m0 14h0m0 2h0m0 3v2m0 7h0M804 510h0m0 5h0m0 6h0m0 10v1m0 3h0m0 3v2m0 8h0M805 509h0m0 5h0m0 2h0m0 2h0m0 4v1m0 10h0m0 5h0m0 4h0m0 6h0m0 9h0m0 3h0m0 3h0M806 520h0m0 6h0m0 4h0m0 2h0m0 7v2m0 3h0m0 8h0m0 18h0m0 3h0m0 4h0m0 6h0M807 462h0m0 25h0m0 4h0m0 3h0m0 7v1m0 9h0m0 12h0m0 3h0m0 9h0m0 6v1m0 7v1M808 462v1m0 14h0m0 25h0m0 6v1m0 12h0m0 3v3m0 3h0m0 14h0M809 459h0m0 16h0m0 8h0m0 2h0m0 4h0m0 2h0m0 11h0m0 11h0m0 2v1m0 7h0m0 10h0m0 11h0M810 474h0m0 3h0m0 2h0m0 6h0m0 2h0m0 16h0m0 4v1m0 4h0m0 8h0m0 5h0m0 7h0m0 3h0m0 5h0M811 491h0m0 10h0m0 20v1m0 4h0m0 2h0m0 2h0m0 2v1m0 4h0m0 4h0m0 9h0M812 465h0m0 16h0m0 5h0m0 17h0m0 3h0m0 8h0m0 4h0m0 2v1m0 5h0m0 13v2m0 10h0M813 479h0m0 14h0m0 26h0m0 5h0m0 9h0m0 10h0m0 4v1m0 9h0m0 8h0m0 3v1M814 492v1m0 9h0m0 14h0m0 10v2m0 8h0m0 7h0m0 2h0m0 7h0m0 5v1M815 513h0m0 2h0m0 2h0m0 2h0m0 10h0m0 2v2m0 4h0m0 3v1m0 3h0m0 20h0M816 467v1m0 15h0m0 5h0m0 2h0m0 4h0m0 2h0m0 13h0m0 10v1m0 17h0m0 10h0m0 13h0M817 462h0m0 2h0m0 5v1m0 5h0m0 4h0m0 3h0m0 8h0m0 13h0m0 24h0m0 15h0m0 7h0m0 25h0M818 465h0m0 11h0m0 3h0m0 7v1m0 10h0m0 2v2m0 6h0m0 24h0M819 461v1m0 12v1m0 4h0m0 4h0m0 2h0m0 4v1m0 4h0m0 7v1m0 7h0m0 10h0M820 475h0m0 5h0m0 3v1m0 11h0m0 5h0m0 3v2m0 2h0m0 8h0m0 13v1M821 471h0m0 10h0m0 2h0m0 6h0m0 6h0m0 2h0m0 2h0m0 4v1m0 3v1m0 6h0m0 8h0m0 22h0M822 461h0m0 16h0m0 15h0m0 6h0m0 6h0m0 2h0m0 2h0m0 9h0m0 2h0m0 4h0m0 4h0m0 3h0M823 492h0m0 6v1m0 7h0m0 2h0m0 4h0m0 9h0m0 2h0m0 2h0m0 4h0m0 9v2M824 462h0m0 19v1m0 2v2m0 2v2m0 3h0m0 2v1m0 3h0m0 30h0M825 463h0m0 34h0m0 3v1m0 3v1m0 2h0m0 2h0m0 2h0m0 3h0m0 4h0m0 7h0M826 507h0m0 3v2m0 2h0m0 5h0m0 4h0m0 4h0m0 3h0m0 10h0m0 4h0m0 7h0M827 492h0m0 8h0m0 2h0m0 7h0m0 3h0m0 4h0m0 4h0m0 3v1m0 7h0m0 5v1m0 7h0M828 488h0m0 8h0m0 8h0m0 13h0m0 3h0m0 2v1m0 11v1m0 6h0m0 3h0m0 3h0M829 482h0m0 12h0m0 16h0m0 23h0m0 3h0m0 2h0m0 3h0m0 3h0m0 3h0m0 2h0m0 2v1m0 9h0m0 4h0M830 507h0m0 4v1m0 9v1m0 2h0m0 4h0m0 4h0m0 7h0m0 4v1m0 6h0m0 16v1M831 505h0m0 8v2m0 4h0m0 15v1m0 3v2m0 4h0m0 15h0M832 493h0m0 28h0m0 8h0m0 7h0m0 4v1m0 3h0m0 2h0m0 4h0m0 5h0m0 3h0m0 17h0M833 458h0m0 5h0m0 4h0m0 6h0m0 18v1m0 2v1m0 2h0m0 7h0m0 4h0m0 46h0M834 468h0m0 6h0m0 11h0m0 7h0m0 7h0m0 5h0m0 3h0m0 6h0m0 2h0m0 5h0m0 4h0m0 2h0M835 516h0m0 15v2m0 3v2m0 6h0m0 5h0m0 2h0m0 6v1m0 5h0m0 12h0M836 521h0m0 3h0m0 4h0m0 5h0m0 4h0m0 6v1m0 4h0m0 2h0m0 2v1m0 4h0m0 10h0m0 4h0M837 496h0m0 20v1m0 12v1m0 4h0m0 3v1m0 5h0m0 5h0m0 23h0m0 3h0m0 4h0M838 504h0m0 17h0m0 5h0m0 4h0m0 2h0m0 3v1m0 3h0m0 2h0m0 5h0m0 14h0m0 9h0m0 11h0m0 2h0M839 462h0m0 13h0m0 26h0m0 11h0m0 2h0m0 5h0m0 7v1m0 7h0m0 4h0m0 7h0m0 13h0m0 5h0M840 475h0m0 8h0m0 11v1m0 2h0m0 5h0m0 10v1m0 4h0m0 11h0m0 2h0m0 6h0m0 12h0M841 499v1m0 2h0m0 3v1m0 2h0m0 2h0m0 3v1m0 4h0m0 8h0m0 7h0m0 4h0M842 472h0m0 7h0m0 10h0m0 2h0m0 3h0m0 4h0m0 2h0m0 14v1m0 9h0m0 12v1m0 13h0M843 461h0m0 15h0m0 21h0m0 7h0m0 2h0m0 4h0m0 8h0m0 4h0m0 6h0m0 7v1m0 3h0m0 7h0M844 490v1m0 9h0m0 4v1m0 3h0m0 2h0m0 6h0m0 2v2m0 2h0m0 16h0m0 4h0M845 490h0m0 2h0m0 7h0m0 2h0m0 5h0m0 2h0m0 2v1m0 4h0m0 4h0m0 3h0m0 18h0M846 494h0m0 14v2m0 3h0m0 2v1m0 2h0m0 2h0m0 7h0m0 6h0m0 11h0M847 482h0m0 6h0m0 3h0m0 12v1m0 10h0m0 14h0m0 5h0m0 9h0m0 7h0m0 3v1m0 10h0M848 489h0m0 7h0m0 4h0m0 6h0m0 2v1m0 5h0m0 5h0m0 3h0m0 2h0m0 10h0m0 8h0m0 11h0m0 20h0M849 503h0m0 12h0m0 6v1m0 9h0m0 14h0m0 2v2m0 4h0m0 7v1m0 6h0M850 485v1m0 11v1m0 2h0m0 6h0m0 2v1m0 3h0m0 21h0m0 11h0m0 8h0m0 7h0M851 460v1m0 4v1m0 12h0m0 23h0m0 4h0m0 17h0m0 4v2m0 10h0m0 25h0M852 459h0m0 19v1m0 2h0m0 10v1m0 5h0m0 5h0m0 4h0m0 2h0m0 2h0m0 7h0m0 7h0m0 2h0M853 490v1m0 6h0m0 4h0m0 2h0m0 4v1m0 4h0m0 5h0m0 14h0m0 5h0m0 5h0m0 2h0M854 487h0m0 6h0m0 3h0m0 6h0m0 6v1m0 4h0m0 9v1m0 6v1m0 4h0m0 8h0M855 493v2m0 14h0m0 3h0m0 4h0m0 5h0m0 5h0m0 6v1m0 5h0m0 5v1M856 499v1m0 10h0m0 7v1m0 2v2m0 3h0m0 5v1m0 3h0m0 3h0M857 524h0m0 4h0m0 5h0m0 13v2m0 3h0m0 3h0m0 5h0m0 3h0m0 15h0M858 473h0m0 12h0m0 28h0m0 2v1m0 2v2m0 2h0m0 4h0M859 499v1m0 5h0m0 2v1m0 7h0m0 5h0m0 5h0m0 3h0m0 3v1M860 487v1m0 5h0m0 15h0m0 4h0m0 3h0m0 2h0m0 6v4m0 7h0m0 2h0M861 479h0m0 18h0m0 9h0m0 2v1m0 3v1m0 3h0m0 9h0m0 2v1m0 4h0m0 9h0M862 470h0m0 2h0m0 22h0m0 4h0m0 15h0m0 2h0m0 5h0m0 3v1m0 7h0m0 28v1m0 9h0M863 464h0m0 5h0m0 11h0m0 3h0m0 3v1m0 8h0m0 12h0m0 2h0m0 3v1m0 12h0m0 3h0M864 499h0m0 2v1m0 2v1m0 4h0m0 5h0m0 3h0m0 2h0m0 5h0m0 6h0m0 19h0m0 2h0M865 482h0m0 3h0m0 5h0m0 2v1m0 6h0m0 6h0m0 4h0m0 3h0m0 6h0m0 3h0m0 2v1M866 458v1m0 2h0m0 2v1m0 19v1m0 6h0m0 9h0m0 6h0m0 15h0m0 4h0m0 12h0M867 471h0m0 2h0m0 3h0m0 5h0m0 4v1m0 11v1m0 4h0m0 9h0m0 2v1m0 2h0m0 21h0M868 476h0m0 20h0m0 4h0m0 24h0m0 8h0m0 2h0m0 3h0m0 7h0m0 4h0m0 2h0m0 3v1m0 28h0M869 508h0m0 16h0m0 4h0m0 5h0m0 4h0m0 4h0m0 2h0m0 3v2m0 4h0m0 7v1M870 499v1m0 4v1m0 3h0m0 2h0m0 3h0m0 5h0m0 6v1m0 4h0m0 2h0m0 2h0m0 7h0M871 520h0m0 4h0m0 3h0m0 3h0m0 3h0m0 4h0m0 3v2m0 2h0m0 14h0m0 3h0M872 511h0m0 3h0m0 7h0m0 3h0m0 4v1m0 6h0m0 3h0m0 13h0m0 3h0m0 11v1M873 508h0m0 4h0m0 4v1m0 2h0m0 3h0m0 13h0m0 7v1m0 9h0m0 3h0M874 510h0m0 9h0m0 2v1m0 3h0m0 4h0m0 6h0m0 7v1m0 17h0m0 4h0m0 13h0m0 2h0M875 509h0m0 4h0m0 6h0m0 5v1m0 12h0m0 2h0m0 5h0m0 3v1m0 2h0m0 16h0M876 501h0m0 4h0m0 7h0m0 10v2m0 14h0m0 2h0m0 3h0m0 5h0m0 7h0m0 2h0m0 5h0M877 518v1m0 3h0m0 4v1m0 2h0m0 2h0m0 2h0m0 4h0m0 4h0m0 11h0M878 499h0m0 16v1m0 3h0m0 4h0m0 5v1m0 4h0m0 2v1m0 5v1m0 2h0m0 3h0M879 521v1m0 2h0m0 4h0m0 2h0m0 2h0m0 2h0m0 5h0m0 2h0m0 3h0m0 2h0m0 2h0m0 2h0m0 20h0M880 510h0m0 4h0m0 3h0m0 5h0m0 6h0m0 2v2m0 2h0m0 2h0m0 2h0m0 3h0m0 21h0M881 509h0m0 2v1m0 2h0m0 2h0m0 3v3m0 3h0m0 3h0m0 6h0m0 3h0M882 506h0m0 4v2m0 4h0m0 3v1m0 2h0m0 8h0m0 4h0m0 2h0m0 6h0M883 460h0m0 15h0m0 31h0m0 2h0m0 5h0m0 2h0m0 18v2m0 6v1m0 3h0M884 463h0m0 23h0m0 20h0m0 5h0m0 5h0m0 2h0m0 3h0m0 3v1m0 4h0m0 6h0m0 3h0m0 3h0M885 481h0m0 25h0m0 4v1m0 3h0m0 3h0m0 3v1m0 2h0m0 9h0m0 9h0m0 5h0m0 8h0M886 509h0m0 2h0m0 3h0m0 5h0m0 6h0m0 6v1m0 3h0m0 10h0m0 6h0m0 8h0m0 7h0m0 2h0m0 2h0M887 494h0m0 10v1m0 6h0m0 2h0m0 3v1m0 4h0m0 2h0m0 2v1m0 3h0m0 8h0M888 483h0m0 6h0m0 4v1m0 3h0m0 4h0m0 2v1m0 5h0m0 4h0m0 2h0m0 8h0M889 484h0m0 7h0m0 15v1m0 6h0m0 3h0m0 4h0m0 21h0m0 3h0m0 4h0m0 6h0M890 472h0m0 5h0m0 2h0m0 7h0m0 13v1m0 3h0m0 7h0m0 11h0m0 11h0m0 15h0m0 8h0m0 19h0M891 514v1m0 16v1m0 8h0m0 6v1m0 15h0m0 2h0m0 14h0m0 2h0m0 3h0M892 537h0m0 5h0m0 4h0m0 4h0m0 4v1m0 2v1m0 2v1m0 4v1M893 496h0m0 10h0m0 6h0m0 2h0m0 5h0m0 2h0m0 3h0m0 5h0m0 3h0m0 2h0m0 5h0m0 12h0m0 20h0M894 480h0m0 12h0m0 6h0m0 10v1m0 2h0m0 4h0m0 5h0m0 6h0m0 9v1M895 494h0m0 2h0m0 8h0m0 3h0m0 4h0m0 2h0m0 3v1m0 3h0m0 3h0m0 5h0m0 2h0m0 4h0M896 500h0m0 11h0m0 5h0m0 5h0m0 2v2m0 3v2m0 3v1m0 10h0M897 503h0m0 9v1m0 3v1m0 2h0m0 3h0m0 4h0m0 4v1m0 6v1m0 6v1M898 469h0m0 72h0m0 13h0m0 6h0m0 6v1m0 4h0m0 2h0m0 4v1m0 3h0M899 515h0m0 3h0m0 19h0m0 2h0m0 8h0m0 4v1m0 2h0m0 2h0m0 4h0m0 6h0M900 512h0m0 4v1m0 7h0m0 10h0m0 3h0m0 9h0m0 7v1m0 4v2m0 2h0M901 508h0m0 4h0m0 4h0m0 3h0m0 8v1m0 3h0m0 11h0m0 8h0m0 13v1M902 489h0m0 12h0m0 13h0m0 5h0m0 3h0m0 3h0m0 2h0m0 7v1m0 13h0m0 15h0m0 11h0M903 474h0m0 17v1m0 3h0m0 7v4m0 6h0m0 3h0m0 8h0m0 3h0M904 486h0m0 23h0m0 3h0m0 6h0m0 2v2m0 5h0m0 4h0m0 4h0m0 3h0m0 16h0M905 485h0m0 12h0m0 2v1m0 9v1m0 8h0m0 8v1m0 3h0m0 3h0m0 5h0m0 18h0M906 502h0m0 7v1m0 2v5m0 4h0m0 4h0m0 5h0m0 2h0M907 508h0m0 3h0m0 6v1m0 2h0m0 4v1m0 2h0m0 8h0m0 3h0m0 13v1m0 10h0M908 490h0m0 28h0m0 2h0m0 3h0m0 12h0m0 3h0m0 8h0m0 7h0m0 5v1m0 5h0m0 3h0M909 497h0m0 19h0m0 4h0m0 2h0m0 5v1m0 2h0m0 2v1m0 4h0m0 16h0m0 26h0M910 490h0m0 2h0m0 2v1m0 2h0m0 2v1m0 7h0m0 2h0m0 19h0m0 2h0m0 11h0M911 463h0m0 5v1m0 5h0m0 2v1m0 2h0m0 2v1m0 6h0m0 9h0m0 10v1m0 4h0M912 501h0m0 5v1m0 4v1m0 8h0m0 3h0m0 4h0m0 3v1m0 2v1M913 480h0m0 4h0m0 9v1m0 4h0m0 16v1m0 3v1m0 6h0m0 10h0m0 9h0M914 485h0m0 7h0m0 4v1m0 8h0m0 5v2m0 3v1m0 2h0m0 5h0m0 10h0M915 496h0m0 8h0m0 13v1m0 6h0m0 7h0m0 2h0m0 8h0m0 7h0m0 3h0m0 6v1m0 15h0m0 7h0M916 475h0m0 13h0m0 6h0m0 5h0m0 6h0m0 2h0m0 4h0m0 4v1m0 3h0m0 13h0m0 9h0m0 14h0M917 494h0m0 3h0m0 2h0m0 2h0m0 5v2m0 6v1m0 3h0m0 4h0m0 4h0m0 9h0M918 495h0m0 3h0m0 5h0m0 2h0m0 2h0m0 6v1m0 2v3m0 6h0m0 2h0M919 472h0m0 11v1m0 3h0m0 3h0m0 13h0m0 6h0m0 5v1m0 4h0m0 6h0m0 4h0m0 4h0M920 503v1m0 2h0m0 3h0m0 7v1m0 2v1m0 4h0m0 4h0m0 2h0m0 11h0M921 508v1m0 9h0m0 5h0m0 2h0m0 2v1m0 8h0m0 3h0m0 6h0m0 7h0m0 3h0M922 500h0m0 23v2m0 4h0m0 6h0m0 11h0m0 2h0m0 3h0m0 3h0m0 10h0m0 9h0M923 480v1m0 10h0m0 5h0m0 9h0m0 3v1m0 5h0m0 5h0m0 5h0m0 2h0m0 2h0m0 10h0m0 5h0M924 490h0m0 8h0m0 4h0m0 3h0m0 4h0m0 3v1m0 4v1m0 10v2M925 491v2m0 7h0m0 2v1m0 3h0m0 9h0m0 3h0m0 7h0m0 5h0m0 9h0m0 4h0m0 3h0M926 502h0m0 14v1m0 3h0m0 2h0m0 4h0m0 3h0m0 4h0m0 2h0m0 2h0m0 9h0M927 517h0m0 4h0m0 5h0m0 7v2m0 5h0m0 4h0m0 2h0m0 2h0m0 8v1m0 11h0M928 478h0m0 19h0m0 13h0m0 23h0m0 9h0m0 5h0m0 3h0m0 7v1m0 4h0m0 7h0m0 8h0M929 500h0m0 4h0m0 4h0m0 7h0m0 3v3m0 9v1m0 2h0m0 3h0m0 9h0m0 3h0M930 501h0m0 5h0m0 4h0m0 4h0m0 2h0m0 2h0m0 2v1m0 5h0m0 2h0m0 7h0m0 5h0M931 496h0m0 3h0m0 6h0m0 3h0m0 3h0m0 3h0m0 6v1m0 23v1m0 7h0m0 2h0M932 495h0m0 12v4m0 6v1m0 2h0m0 2v1m0 3h0M933 481h0m0 7h0m0 4h0m0 7h0m0 3v1m0 3v2m0 2h0m0 4h0m0 4h0m0 5h0M934 498v1m0 3h0m0 3h0m0 8h0m0 2h0m0 5v1m0 3v1m0 11h0m0 5h0m0 5h0m0 2h0M935 464h0m0 61h0m0 4h0m0 11h0m0 4v1m0 4v1m0 2h0m0 3v2m0 3h0M936 501h0m0 20h0m0 2h0m0 3h0m0 10v1m0 2h0m0 5v3m0 19h0M937 512h0m0 3h0m0 5h0m0 4h0m0 2h0m0 5v1m0 3v1m0 8h0m0 3h0m0 5h0M938 459h0m0 26h0m0 3v2m0 9v1m0 2h0m0 3h0m0 3h0m0 5h0m0 15h0m0 8h0M939 470v1m0 28v1m0 2h0m0 5v1m0 2h0m0 4h0m0 5h0m0 10h0m0 12h0m0 34h0M940 466h0m0 25h0m0 2v1m0 7v1m0 10v1m0 5h0m0 3v1m0 10h0M941 465h0m0 5h0m0 8h0m0 3h0m0 4h0m0 3h0m0 2v1m0 2h0m0 2h0m0 4h0m0 6h0m0 3v1M942 478h0m0 8h0m0 3v1m0 5v1m0 7h0m0 2h0m0 8h0m0 11h0m0 4h0m0 20h0M943 504h0m0 3h0m0 2h0m0 6h0m0 3h0m0 6v1m0 2v1m0 12h0m0 4h0m0 14h0m0 8h0M944 459h0m0 2h0m0 8h0m0 18h0m0 3h0m0 9h0m0 2h0m0 3h0m0 5h0m0 3h0m0 10h0m0 3h0m0 3h0M945 481h0m0 17h0m0 2h0m0 7v2m0 8v1m0 2h0m0 5h0m0 3h0m0 4h0M946 485h0m0 5h0m0 5h0m0 6h0m0 5h0m0 4h0m0 5v1m0 7h0m0 2h0m0 3h0m0 2h0m0 6h0M947 489h0m0 5h0m0 12v1m0 2h0m0 4v1m0 2v1m0 5v1m0 3h0m0 6h0M948 492h0m0 5h0m0 5v1m0 2h0m0 11v1m0 2h0m0 4h0m0 2h0m0 4h0m0 8h0m0 4h0M949 456h0m0 9h0m0 6h0m0 4h0m0 3h0m0 8h0m0 13h0m0 6h0m0 6h0m0 5h0m0 2h0m0 3h0M950 459h0m0 5v2m0 7v3m0 3h0m0 3h0m0 5h0m0 15h0m0 6h0m0 5h0M951 506h0m0 5h0m0 2h0m0 2h0m0 2h0m0 6v1m0 2h0m0 6h0m0 13h0m0 4h0m0 4h0m0 8h0M952 527h0m0 5h0m0 4h0m0 10v1m0 2h0m0 3h0m0 2v1m0 2h0m0 20h0m0 2h0M953 538v1m0 3h0m0 3h0m0 2h0m0 2v1m0 7v1m0 17h0M954 519h0m0 2h0m0 4h0m0 9h0m0 2h0m0 3h0m0 4h0m0 3h0m0 2h0m0 2h0m0 3h0m0 3h0m0 14h0M955 515h0m0 5h0m0 4h0m0 2h0m0 5h0m0 2v1m0 6h0m0 5h0m0 9h0m0 7h0m0 9h0m0 6h0M956 501h0m0 14h0m0 5h0m0 4v1m0 10v1m0 2v1m0 5h0m0 4h0m0 6h0m0 7h0M957 483h0m0 15h0m0 4h0m0 12h0m0 6h0m0 4h0m0 2h0m0 3h0m0 2h0m0 2h0m0 3h0M958 523h0m0 7h0m0 10v2m0 7h0m0 2h0m0 2v1m0 5h0m0 2h0m0 12h0m0 9h0M959 512h0m0 8h0m0 2v1m0 2v1m0 6v1m0 6h0m0 3h0m0 3h0m0 7h0m0 2h0M960 503h0m0 2h0m0 5v1m0 5v1m0 10v1m0 2h0m0 3v1m0 27h0M961 505h0m0 21h0m0 4h0m0 8v1m0 3h0m0 8v1m0 6h0m0 7h0m0 3h0m0 4h0m0 9h0M962 513h0m0 3h0m0 4h0m0 2v1m0 8v2m0 7v1m0 6h0M963 494v1m0 6h0m0 8h0m0 5h0m0 3v2m0 4h0m0 7h0m0 3v1m0 2h0m0 8h0M964 491h0m0 2v1m0 6h0m0 2h0m0 6h0m0 5h0m0 3h0m0 6h0m0 2h0m0 11h0m0 5h0M965 497h0m0 4h0m0 10h0m0 3h0m0 5v1m0 12h0m0 6h0m0 7h0m0 13h0m0 4h0M966 497h0m0 4h0m0 14h0m0 12v1m0 5h0m0 2h0m0 5v2m0 6h0m0 10h0m0 5h0m0 5h0M967 474h0m0 10h0m0 2h0m0 12h0m0 2h0m0 14h0m0 3h0m0 4h0m0 8h0m0 2h0m0 6h0m0 17v1M968 508v1m0 15v1m0 2h0m0 4h0m0 3h0m0 3h0m0 8h0m0 2h0m0 2h0m0 10h0M969 514h0m0 2h0m0 5v1m0 3h0m0 5h0m0 5h0m0 14v1m0 8v1m0 10h0m0 8h0M970 490h0m0 4h0m0 6h0m0 7h0m0 4h0m0 2h0m0 4h0m0 7v1m0 5h0m0 13h0m0 7h0m0 21h0M971 518h0m0 3v1m0 2h0m0 3h0m0 2h0m0 5h0m0 6h0m0 4h0m0 2h0m0 5h0m0 10h0M972 492h0m0 18h0m0 4v1m0 3h0m0 3v1m0 5h0m0 2h0m0 3h0m0 3h0m0 2h0m0 11h0M973 476h0m0 5h0m0 7v1m0 2h0m0 2v1m0 4h0m0 4h0m0 17v1M974 473h0m0 25v1m0 3v3m0 4h0m0 5v1m0 4h0m0 6h0m0 2h0M975 458h0m0 12h0m0 3h0m0 7h0m0 9v1m0 12h0m0 3h0m0 2h0m0 13h0m0 4h0m0 10h0m0 15h0M976 485h0m0 5v1m0 10h0m0 7h0m0 4v1m0 2h0m0 2h0m0 5h0m0 7h0m0 16h0M977 508h0m0 16h0m0 2h0m0 8h0m0 9h0m0 2h0m0 2h0m0 2h0m0 4h0m0 12h0m0 3h0M978 521v1m0 2v2m0 2h0m0 8v1m0 2h0m0 2h0m0 2h0m0 13h0M979 487h0m0 5v1m0 2h0m0 4h0m0 3h0m0 4v1m0 6h0m0 2h0m0 9h0m0 4h0m0 13h0M980 501h0m0 3h0m0 7h0m0 3h0m0 3h0m0 3v1m0 2v2m0 4h0m0 2h0m0 38h0M981 482h0m0 13h0m0 4h0m0 18h0m0 3h0m0 10h0m0 3h0m0 2h0m0 7h0m0 2h0m0 3h0m0 5h0M982 503h0m0 5h0m0 2h0m0 6h0m0 4h0m0 4h0m0 3h0m0 2v1m0 7h0m0 5h0m0 14h0M983 516h0m0 4v1m0 3h0m0 5h0m0 6h0m0 4h0m0 3v2m0 4v1m0 3h0m0 13h0M984 483h0m0 12h0m0 4h0m0 2h0m0 5h0m0 2v1m0 9h0m0 4v2m0 3v1m0 3h0M985 458h0m0 6h0m0 3h0m0 11h0m0 5h0m0 2v2m0 7h0m0 2h0m0 2h0m0 2h0m0 6h0m0 4h0M986 476h0m0 4h0m0 5h0m0 4h0m0 2h0m0 12h0m0 5h0m0 3h0m0 6h0m0 4v1m0 3h0M987 456h0m0 3h0m0 4h0m0 19h0m0 7h0m0 12h0m0 4v1m0 12h0m0 3v1m0 18h0m0 2h0m0 10h0M988 486h0m0 10h0m0 17h0m0 6h0m0 8v1m0 2h0m0 2v1m0 7h0m0 2h0m0 7v1M989 500h0m0 12h0m0 9v3m0 2h0m0 4h0m0 16h0m0 3h0M990 468h0m0 21h0m0 10v1m0 5h0m0 4v1m0 12h0m0 12h0m0 4h0m0 12h0M991 511h0m0 4h0m0 7h0m0 2h0m0 2v2m0 4h0m0 2h0m0 10h0m0 2h0m0 3h0m0 5h0M992 498h0m0 15h0m0 4h0m0 6h0m0 4h0m0 4h0m0 6v1m0 2h0m0 6h0m0 4h0m0 11v1M993 500h0m0 9h0m0 6h0m0 3h0m0 2h0m0 4h0m0 3h0m0 3h0m0 2h0m0 6h0m0 6h0m0 2v1m0 8h0M994 478h0m0 19h0m0 11h0m0 4v1m0 3h0m0 2v1m0 5h0m0 2h0m0 4h0m0 9h0m0 31h0M995 476h0m0 7v1m0 12h0m0 4h0m0 10h0m0 12h0m0 11h0m0 4h0m0 9h0m0 5h0m0 9h0m0 3h0m0 2h0M996 477h0m0 23h0m0 7h0m0 3v1m0 8h0m0 4h0m0 4h0m0 3h0m0 2v1m0 7h0m0 2h0M997 470h0m0 4h0m0 2h0m0 17h0m0 6h0m0 8v1m0 2h0m0 2h0m0 4h0m0 4v1m0 6v1M998 509h0m0 10h0m0 6h0m0 4h0m0 3v1m0 3h0m0 4h0m0 5h0m0 3h0m0 3h0m0 8h0m0 2h0m0 10h0M999 503h0m0 11h0m0 9h0m0 3h0m0 2v1m0 2h0m0 3h0m0 2h0m0 16h0M1000 509h0m0 9h0m0 9v5m0 2h0m0 2h0m0 9h0m0 4h0M1001 494h0m0 14h0m0 4h0m0 2v2m0 15h0m0 4h0m0 2v3m0 4h0M1002 509h0m0 19v1m0 4h0m0 10v1m0 3h0m0 6h0m0 4v1m0 10h0m0 4h0m0 4h0M1003 459h0m0 16h0m0 14h0m0 11v1m0 9h0m0 12h0m0 9h0m0 10h0m0 6h0m0 7h0m0 3h0m0 10h0m0 5h0M1004 465v1m0 23h0m0 18h0m0 2h0m0 3h0m0 7h0m0 4h0m0 3h0m0 15h0m0 16h0M1005 493v1m0 14v1m0 3v1m0 2h0m0 3v1m0 4h0m0 9h0m0 7h0M1006 497h0m0 2h0m0 2h0m0 2h0m0 2h0m0 4h0m0 4h0m0 12h0m0 5h0m0 11h0m0 4h0M1007 495h0m0 3h0m0 2h0m0 2h0m0 5h0m0 2h0m0 4h0m0 2h0m0 2h0m0 2h0m0 3h0m0 2h0M1008 468v2m0 2h0m0 6h0m0 3v1m0 10h0m0 9h0m0 27h0m0 7h0m0 22h0m0 17h0M1009 501h0m0 5h0m0 4h0m0 14h0m0 7h0m0 6h0m0 2h0m0 2v1m0 2h0m0 6h0m0 3h0m0 3h0M1010 492h0m0 2h0m0 3h0m0 9h0m0 3h0m0 4h0m0 4h0m0 8h0m0 4h0m0 4h0m0 2h0m0 12h0m0 9h0M1011 463h0m0 22h0m0 2h0m0 11h0m0 3h0m0 5h0m0 11h0m0 2h0m0 9v1m0 7h0m0 24h0M1012 473h0m0 8h0m0 2h0m0 7h0m0 4v1m0 10h0m0 7h0m0 2h0m0 11v1m0 4h0m0 3h0m0 3h0M1013 525h0m0 23h0m0 2v2m0 4h0m0 4h0m0 5h0m0 2h0m0 5v1m0 3h0M1014 518h0m0 3h0m0 10v3m0 8h0m0 3h0m0 4h0m0 4h0m0 3h0m0 9h0m0 3h0M1015 511h0m0 7h0m0 3h0m0 2v1m0 4v2m0 5h0m0 3h0m0 5h0m0 34h0M1016 466v1m0 6h0m0 14v2m0 6h0m0 9v1m0 2h0m0 3h0m0 8h0M1017 463h0m0 2h0m0 17h0m0 10v1m0 2v1m0 3h0m0 3v2m0 8h0m0 11h0M1018 469v1m0 9h0m0 3h0m0 8h0m0 8h0m0 2h0m0 2v1m0 2h0m0 2h0m0 5h0m0 29h0m0 3h0M1019 486h0m0 3v1m0 5h0m0 14h0m0 10h0m0 8h0m0 2v1m0 2v2m0 12h0M1020 493h0m0 4h0m0 7h0m0 3h0m0 2h0m0 3h0m0 2h0m0 3h0m0 2h0m0 18h0m0 24h0M1021 499h0m0 7h0m0 6h0m0 4v1m0 3h0m0 3h0m0 10h0m0 2v1m0 6h0m0 4h0m0 8h0M1022 492h0m0 14h0m0 6h0m0 4h0m0 2h0m0 2h0m0 3h0m0 2h0m0 2h0m0 7h0m0 2h0m0 5h0m0 7h0m0 4h0M1023 477h0m0 26h0m0 4h0m0 2h0m0 7h0m0 10h0m0 4v1m0 3h0m0 5h0m0 4h0m0 5h0m0 14h0M1024 481h0m0 2h0m0 3h0m0 3h0m0 6h0m0 13h0m0 4h0m0 2h0m0 4h0m0 3h0m0 7h0M1025 456h0m0 4h0m0 8h0m0 9h0m0 7h0m0 6h0m0 8v1m0 10h0m0 4v1m0 8h0m0 5h0m0 5h0M1026 457h0m0 20h0m0 2v1m0 2h0m0 2v1m0 10h0m0 7h0m0 6v1m0 5h0m0 5h0m0 3h0M1027 456h0m0 4h0m0 5v1m0 6h0m0 24h0m0 4v1m0 3v1m0 2h0m0 2h0m0 8h0m0 9h0M1028 461h0m0 15h0m0 14h0m0 4h0m0 9h0m0 2h0m0 2h0m0 7h0m0 5h0m0 4h0m0 4v1m0 4h0M1029 474h0m0 2v1m0 20h0m0 7v1m0 7v1m0 13h0m0 3h0m0 5h0m0 3h0m0 2h0m0 8h0M1030 516h0m0 5h0m0 7h0m0 14h0m0 3h0m0 6h0m0 4h0m0 9h0m0 3h0m0 2h0m0 8h0m0 6h0M1031 514h0m0 13v1m0 3h0m0 9h0m0 6h0m0 3v1m0 5v1m0 5h0m0 7h0m0 3h0m0 2h0M1032 494h0m0 9h0m0 7h0m0 3v1m0 8h0m0 3h0m0 3h0m0 2h0m0 7h0m0 5h0m0 21h0M1033 485h0m0 10h0m0 4v1m0 2h0m0 6h0m0 2h0m0 3v2m0 5h0m0 4h0m0 2h0M1034 462h0m0 12h0m0 3v1m0 16h0m0 2v1m0 2v1m0 2h0m0 9h0m0 3h0m0 8h0m0 3h0M1035 477h0m0 5h0m0 3h0m0 3h0m0 8h0m0 5v2m0 2v1m0 9h0M1036 485h0m0 7h0m0 8h0m0 2h0m0 4h0m0 11h0m0 7v1m0 3h0m0 4v1m0 4h0m0 9h0M1037 496h0m0 4h0m0 15h0m0 2h0m0 4h0m0 4h0m0 3h0m0 3v1m0 2h0M1038 500h0m0 3h0m0 6h0m0 2h0m0 12h0m0 3h0m0 2v1m0 4h0m0 3h0m0 2h0m0 2h0m0 10h0M1039 516h0m0 8h0m0 8v1m0 3h0m0 7h0m0 6v1m0 2v1m0 2v1M1040 500h0m0 21h0m0 11h0m0 4h0m0 2v1m0 3h0m0 4h0m0 3h0m0 7h0m0 3h0M1041 499h0m0 6h0m0 8h0m0 2h0m0 3h0m0 2h0m0 5h0m0 9h0m0 4h0m0 2h0m0 12v1M1042 495h0m0 8h0m0 3h0m0 9v1m0 3h0m0 5h0m0 16h0m0 5h0m0 4v1M1043 508h0m0 2h0m0 10h0m0 3h0m0 4h0m0 4h0m0 7h0m0 2h0m0 2h0m0 2h0m0 4h0m0 2h0m0 4h0M1044 508h0m0 4h0m0 2h0m0 8h0m0 6h0m0 2h0m0 4h0m0 14h0m0 13h0m0 8h0M1045 471h0m0 5h0m0 5h0m0 5h0m0 5h0m0 3v1m0 9h0m0 5h0m0 2h0m0 3h0m0 8h0m0 22h0M1046 476h0m0 5h0m0 6h0m0 2v1m0 16h0m0 2v1m0 4v1m0 3h0m0 5h0m0 15h0M1047 493h0m0 4h0m0 11v1m0 5v1m0 5h0m0 4h0m0 5h0m0 3h0m0 5h0m0 2h0M1048 476h0m0 13v1m0 6h0m0 3v1m0 19h0m0 4v1m0 2h0m0 2h0m0 4h0m0 6h0m0 7h0M1049 499h0m0 3h0m0 4h0m0 3h0m0 3h0m0 5v1m0 7v1m0 11h0m0 3h0m0 10h0M1050 527h0m0 5h0m0 2h0m0 2v1m0 3h0m0 4v2m0 9h0m0 5h0M1051 524h0m0 2h0m0 5h0m0 2h0m0 2h0m0 4h0m0 9v1m0 3h0m0 9h0m0 3h0m0 10h0m0 4h0M1052 537h0m0 3v2m0 3h0m0 2v3m0 3h0m0 30h0M1053 512h0m0 2v2m0 8h0m0 10h0m0 6v3m0 5h0m0 7h0m0 5h0M1054 512h0m0 10v1m0 11h0m0 4v2m0 5h0m0 10v1m0 12h0m0 5h0m0 2h0m0 2h0M1055 530h0m0 2h0m0 6v1m0 3h0m0 10h0m0 2h0m0 4h0m0 11h0m0 3h0m0 7h0M1056 484h0m0 14h0m0 7h0m0 7h0m0 5h0m0 5h0m0 3h0m0 17h0m0 5h0m0 3h0m0 3h0M1057 487h0m0 7h0m0 13v1m0 2h0m0 3h0m0 3v1m0 7h0m0 8v2m0 2h0m0 2h0M1058 512h0m0 2v1m0 3v1m0 4h0m0 2h0m0 3v1m0 2v1m0 3h0m0 11h0m0 2h0M1059 502h0m0 6h0m0 3v1m0 2h0m0 4v1m0 4h0m0 3v1m0 9h0m0 3h0M1060 457h0m0 8h0m0 2h0m0 3v1m0 25h0m0 13h0m0 8h0m0 2h0m0 3h0m0 16h0m0 6h0m0 13h0m0 4h0M1061 504h0m0 7h0m0 8h0m0 6h0m0 4v1m0 2h0m0 8h0m0 12v1m0 9h0m0 4h0m0 2h0M1062 484h0m0 9v1m0 2h0m0 3v1m0 2h0m0 4h0m0 5h0m0 2h0m0 4h0m0 21h0M1063 479v2m0 3v1m0 9h0m0 4h0m0 4h0m0 4h0m0 15h0m0 7h0m0 6h0M1064 497h0m0 8v1m0 8v2m0 2v2m0 2v1m0 6h0m0 2h0M1065 484h0m0 10h0m0 2h0m0 6v1m0 3v2m0 3v1m0 3h0m0 3h0m0 11h0m0 8h0M1066 457h0m0 2h0m0 8h0m0 9h0m0 2h0m0 3h0m0 9h0m0 10h0m0 7h0m0 4h0m0 9h0m0 2h0m0 14h0m0 22h0M1067 501h0m0 3h0m0 9h0m0 14h0m0 5h0m0 8v2m0 4h0m0 12h0m0 8h0M1068 506h0m0 2h0m0 13h0m0 2v2m0 2v1m0 4h0m0 5h0m0 4v1m0 4h0M1069 491h0m0 6h0m0 11h0m0 6h0m0 3h0m0 3h0m0 6h0m0 2h0m0 3h0m0 10h0m0 3h0m0 5h0m0 2h0M1070 484h0m0 15h0m0 5h0m0 6h0m0 8h0m0 2h0m0 2v1m0 7h0m0 18h0m0 2h0m0 3h0M1071 475h0m0 2h0m0 11h0m0 7v1m0 7v1m0 8v1m0 2v1M1072 459h0m0 2h0m0 2h0m0 16h0m0 10h0m0 3h0m0 7h0m0 4h0m0 10h0m0 7h0m0 8h0m0 28v1M1073 474h0m0 2v1m0 26h0m0 9h0m0 3v1m0 3h0m0 3v1m0 13h0m0 7v1m0 2h0M1074 464h0m0 4h0m0 12v1m0 4h0m0 32v1m0 3h0m0 6v1m0 6v1m0 12h0M1075 504h0m0 6h0m0 2v1m0 3h0m0 3h0m0 3h0m0 2h0m0 5v1m0 5h0m0 11h0m0 7h0M1076 499h0m0 7h0m0 9h0m0 2h0m0 2h0m0 2h0m0 2v1m0 6h0m0 6h0m0 15h0m0 6h0M1077 470v1m0 7h0m0 5h0m0 7h0m0 14h0m0 6h0m0 2v1m0 3h0m0 2h0m0 4h0m0 18h0m0 19h0M1078 464h0m0 22h0m0 2h0m0 4h0m0 2v1m0 4h0m0 3v1m0 2h0m0 18h0m0 7h0M1079 462h0m0 6h0m0 10h0m0 8h0m0 13h0m0 5v1m0 5v2m0 5h0m0 6h0m0 2h0m0 2h0M1080 472h0m0 20h0m0 3h0m0 4h0m0 6v1m0 3h0m0 10h0m0 4h0m0 5h0m0 5h0m0 8h0m0 3v1M1081 456h0m0 4h0m0 8h0m0 8h0m0 9v1m0 5h0m0 4h0m0 5v1m0 19h0m0 29h0m0 4h0M1082 506h0m0 11h0m0 9h0m0 7h0m0 6h0m0 2h0m0 4h0m0 4h0m0 12h0m0 3h0m0 8h0m0 5h0m0 6h0M1083 459h0m0 14h0m0 4h0m0 23h0m0 6v1m0 4h0m0 9h0m0 12h0m0 19h0m0 8h0m0 4h0m0 11h0m0 2h0M1084 479h0m0 7h0m0 12h0m0 18v1m0 4h0m0 3h0m0 8v1m0 7v4M1085 521h0m0 4h0m0 5h0m0 5h0m0 2h0m0 4h0m0 2h0m0 5h0m0 6h0m0 4h0m0 3h0m0 6h0M1086 504v1m0 5h0m0 6h0m0 7h0m0 5h0m0 7v1m0 7h0m0 9h0m0 6h0m0 9h0m0 6h0M1087 493h0m0 14h0m0 4h0m0 6v2m0 2h0m0 10h0m0 2h0m0 3v1m0 21h0M1088 521v1m0 4v1m0 7h0m0 5h0m0 4h0m0 2h0m0 3v2M1089 525h0m0 3h0m0 12h0m0 5h0m0 4v1m0 7v1m0 2h0M1090 515h0m0 5v1m0 8h0m0 2v3m0 3h0m0 6h0m0 9h0M1091 504h0m0 22v2m0 2h0m0 3h0m0 4v1m0 5h0m0 2h0m0 4h0m0 13h0M1092 530h0m0 3v1m0 2h0m0 9v1m0 4v1m0 2v1m0 10h0m0 9h0M1093 508h0m0 9h0m0 5h0m0 6h0m0 7h0m0 2h0m0 2v1m0 9v1m0 5h0m0 3h0m0 5h0M1094 457h0m0 7h0m0 2h0m0 5v1m0 7h0m0 2v1m0 6h0m0 28h0m0 8h0m0 6h0m0 16h0m0 8h0M1095 492h0m0 8h0m0 4h0m0 2h0m0 7h0m0 2h0m0 3v1m0 2h0m0 6v1m0 10h0M1096 460h0m0 5h0m0 9h0m0 13h0m0 2v1m0 6h0m0 6h0m0 2h0m0 8h0m0 8h0m0 16h0M1097 476v1m0 8h0m0 7v1m0 6h0m0 2h0m0 18v2m0 4h0m0 8h0m0 3h0m0 2h0M1098 499h0m0 10h0m0 2h0m0 2v2m0 2v1m0 4h0m0 4h0m0 5h0m0 2h0M1099 501h0m0 20h0m0 4h0m0 5h0m0 4h0m0 5h0m0 7h0m0 8h0m0 6v1m0 3h0m0 5h0M1100 505h0m0 33v1m0 4h0m0 2h0m0 6h0m0 2h0m0 3h0m0 3h0m0 2h0m0 4h0m0 2h0M1101 500h0m0 4h0m0 5h0m0 17h0m0 9v2m0 2h0m0 4h0m0 3h0m0 7h0m0 7h0M1102 501h0m0 7v1m0 6v3m0 2h0m0 2h0m0 2h0m0 6v1M1103 484h0m0 6h0m0 5h0m0 9h0m0 2h0m0 2h0m0 11v1m0 2h0m0 4h0m0 7h0m0 3h0m0 5h0M1104 459h0m0 3v1m0 7v1m0 10h0m0 7h0m0 3v1m0 38h0m0 3v1m0 3h0M1105 464h0m0 8v1m0 6h0m0 25h0m0 17h0m0 6h0m0 3h0m0 3h0m0 9h0m0 5h0M1106 518h0m0 5v1m0 2h0m0 2v3m0 10h0m0 4h0m0 3h0m0 6h0M1107 491h0m0 6h0m0 2v3m0 3h0m0 6h0m0 11h0m0 3h0m0 2h0m0 8h0m0 6v1M1108 507h0m0 15h0m0 6h0m0 2h0m0 4v1m0 2h0m0 6h0m0 2h0m0 2h0m0 8h0m0 4h0m0 4h0M1109 487h0m0 5h0m0 2v1m0 5h0m0 4h0m0 12v1m0 5h0m0 3v1m0 5h0m0 2h0m0 28h0M1110 523v2m0 7v1m0 3v1m0 4h0m0 11h0M1111 511h0m0 13h0m0 4v2m0 4h0m0 2v2m0 2h0m0 2v2m0 3h0M1112 499h0m0 9h0m0 5v1m0 5h0m0 2h0m0 2v2m0 5h0m0 2h0m0 2h0M1113 496h0m0 5h0m0 8h0m0 2v1m0 3h0m0 5h0m0 5h0m0 7v1m0 16h0m0 13h0M1114 510h0m0 14h0m0 4v1m0 4h0m0 8h0m0 2h0m0 2h0m0 2h0m0 13h0m0 9h0M1115 488h0m0 3h0m0 5h0m0 2h0m0 5h0m0 4h0m0 7h0m0 7h0m0 8h0m0 4h0m0 3h0M1116 477v1m0 8h0m0 11h0m0 4v1m0 3h0m0 3h0m0 4h0m0 3h0m0 5v2m0 3h0M1117 503h0m0 5h0m0 3h0m0 13h0m0 7h0m0 3h0m0 4h0m0 2h0m0 4h0m0 2h0m0 11h0m0 4h0m0 5h0M1118 517h0m0 6h0m0 3h0m0 5h0m0 4h0m0 3v1m0 4h0m0 2h0m0 2h0m0 2h0m0 3h0M1119 533h0m0 4v1m0 6v1m0 5h0m0 2h0m0 2h0m0 4v1m0 8h0M1120 514h0m0 2v1m0 4h0m0 10v1m0 2v1m0 2h0m0 2h0m0 16h0m0 17h0M1121 513h0m0 9h0m0 12h0m0 5h0m0 5h0m0 4h0m0 4v3m0 3h0m0 5h0m0 4h0M1122 477h0m0 7v1m0 2h0m0 3h0m0 3h0m0 9h0m0 6h0m0 5h0m0 21h0m0 3h0m0 9h0m0 17h0M1123 501h0m0 5h0m0 5h0m0 2h0m0 8h0m0 2v1m0 2h0m0 3h0m0 4h0m0 6h0m0 8h0M1124 482h0m0 12h0m0 5h0m0 5v1m0 11v1m0 7h0m0 18v1m0 5h0m0 7h0m0 11h0m0 4h0M1125 484h0m0 11h0m0 21h0m0 8h0m0 2v1m0 3h0m0 2h0m0 4h0m0 7h0m0 3v1m0 12h0m0 9h0M1126 498h0m0 19v1m0 2v1m0 3h0m0 4h0m0 3v1m0 8h0m0 2h0m0 22h0M1127 497h0m0 2v1m0 4h0m0 2v1m0 4h0m0 8v1m0 4h0m0 11h0M1128 494h0m0 3v1m0 10h0m0 4h0m0 5h0m0 2v2m0 4h0m0 2h0m0 8h0m0 5h0M1129 497h0m0 4h0m0 2v1m0 3h0m0 6v2m0 3h0m0 5h0m0 6v2M1130 514h0m0 25v1m0 2h0m0 6h0m0 2h0m0 3h0m0 3h0m0 6v1m0 8h0m0 3h0m0 2h0M1131 502h0m0 2h0m0 2h0m0 8v2m0 4h0m0 4v1m0 10h0m0 2h0m0 10h0m0 2h0m0 18h0M1132 499v1m0 2h0m0 3h0m0 2h0m0 10h0m0 4v1m0 10v1m0 6h0M1133 471h0m0 11v1m0 15v1m0 4h0m0 5h0m0 6h0m0 9h0m0 5h0m0 4h0M1134 474h0m0 7h0m0 7h0m0 4h0m0 2v1m0 11h0m0 2h0m0 7h0m0 2h0M1135 481h0m0 19v1m0 7v1m0 3h0m0 11h0m0 5h0m0 2h0m0 3v2m0 14h0M1136 498h0m0 3h0m0 2h0m0 20h0m0 2v2m0 2h0m0 9v1m0 4v2M1137 507h0m0 28v1m0 9h0m0 6h0m0 4h0m0 5v1m0 2h0m0 3v1m0 8h0m0 6v1M1138 494v1m0 4h0m0 10v1m0 6v1m0 4h0m0 2v1m0 18v1m0 2h0M1139 497h0m0 2h0m0 4h0m0 3h0m0 2v1m0 2v2m0 5v1m0 3h0m0 4h0M1140 493h0m0 6h0m0 2h0m0 2h0m0 3h0m0 5h0m0 4h0m0 8v2m0 9v1m0 7h0M1141 496h0m0 6h0m0 5h0m0 2h0m0 5h0m0 6h0m0 5h0m0 3h0m0 4h0m0 2h0m0 13h0m0 4h0m0 3h0M1142 517v1m0 3h0m0 5v1m0 2h0m0 2h0m0 3h0m0 3h0m0 3h0m0 5h0m0 12h0m0 8h0M1143 501h0m0 2v1m0 4h0m0 7h0m0 3h0m0 2h0m0 2h0m0 2h0m0 5h0m0 5h0m0 8h0m0 7h0M1144 496h0m0 12h0m0 9h0m0 4h0m0 5h0m0 4h0m0 2v2m0 4v1m0 6h0m0 7h0m0 13h0M1145 487h0m0 17h0m0 2h0m0 2h0m0 4h0m0 2h0m0 9h0m0 2v1m0 2h0m0 12h0m0 3h0m0 2h0m0 3h0M1146 505h0m0 4v1m0 10v2m0 4v1m0 2h0m0 6h0m0 5h0m0 4h0m0 6h0M1147 480h0m0 16h0m0 6v3m0 2h0m0 3h0m0 2v1m0 6h0m0 3h0m0 10h0m0 16h0M1148 499h0m0 2h0m0 11v2m0 3h0m0 4h0m0 5h0m0 2h0m0 6v2m0 34h0M1149 517h0m0 2h0m0 4h0m0 2h0m0 3v2m0 2h0m0 2v1m0 3h0m0 11h0M1150 522h0m0 10h0m0 3v1m0 2h0m0 5h0m0 2v1m0 8v2m0 2h0m0 11h0M1151 511h0m0 11h0m0 2h0m0 2h0m0 2h0m0 2v1m0 2h0m0 2h0m0 3v1m0 3h0m0 6v1M1152 506h0m0 7h0m0 7h0m0 3h0m0 3v1m0 2h0m0 3h0m0 7h0m0 3h0m0 15h0m0 7h0M1153 514h0m0 2h0m0 5h0m0 6h0m0 5h0m0 2h0m0 6h0m0 2h0m0 7h0m0 10h0m0 8h0m0 7h0M1154 500h0m0 7h0m0 4h0m0 5h0m0 2h0m0 4h0m0 7v2m0 6v1m0 2h0m0 4h0m0 3h0M1155 482h0m0 5h0m0 23v1m0 4h0m0 4h0m0 19h0m0 7h0m0 6h0m0 6h0M1156 473v1m0 11h0m0 9h0m0 18h0m0 2v1m0 4h0m0 2v1m0 2v2M1157 459h0m0 2h0m0 5h0m0 9h0m0 8h0m0 2h0m0 18v1m0 10h0m0 3h0m0 6h0m0 12h0m0 7h0M1158 499h0m0 17h0m0 2h0m0 2v1m0 11h0m0 4h0m0 4h0m0 3h0m0 2h0m0 4h0m0 17h0M1159 484h0m0 6h0m0 17h0m0 2h0m0 2h0m0 6h0m0 2h0m0 3v1m0 4h0m0 14v3M1160 502h0m0 8h0m0 13h0m0 4v1m0 3h0m0 2h0m0 5v1m0 2h0m0 3h0m0 12h0M1161 506h0m0 9v3m0 2h0m0 7h0m0 4h0m0 4h0m0 2h0m0 9h0m0 5h0m0 3h0m0 5h0M1162 519v1m0 6h0m0 2h0m0 8v1m0 3h0m0 2h0m0 12h0m0 3h0m0 4h0m0 4h0m0 4h0M1163 496h0m0 12v1m0 3v2m0 6h0m0 3h0m0 2h0m0 6v1m0 13h0M1164 497v1m0 9h0m0 2h0m0 5h0m0 2h0m0 3v1m0 2h0m0 3h0m0 2h0m0 2h0m0 5h0m0 21h0M1165 489h0m0 2h0m0 7h0m0 6h0m0 5v1m0 5h0m0 3h0m0 6v1m0 5h0m0 2h0m0 4h0M1166 490v1m0 9h0m0 5h0m0 4h0m0 5v3m0 8h0m0 18h0M1167 462h0m0 2h0m0 2h0m0 6h0m0 19h0m0 12h0m0 5h0m0 3h0m0 8h0m0 3h0m0 2h0m0 10h0m0 16h0M1168 492h0m0 5v1m0 5v1m0 7v2m0 5h0m0 2h0m0 5v1M1169 495h0m0 7h0m0 3v2m0 2v1m0 4h0m0 5h0m0 3h0m0 3h0m0 2h0m0 2h0M1170 492h0m0 10h0m0 5v1m0 5h0m0 4v1m0 2h0m0 3h0m0 2h0m0 4v1m0 4h0M1171 463h0m0 19h0m0 17h0m0 7h0m0 23h0m0 3h0m0 5h0m0 7h0m0 9h0m0 4h0m0 2h0m0 8h0M1172 460h0m0 9h0m0 2h0m0 8h0m0 14h0m0 11h0m0 5h0m0 2h0m0 3v1m0 2h0m0 18h0m0 3h0M1173 502h0m0 6h0m0 2h0m0 2h0m0 5v1m0 3h0m0 3h0m0 19h0m0 3v1m0 9v1M1174 498h0m0 8h0m0 15v1m0 4h0m0 5h0m0 9v1m0 5h0m0 11h0m0 4v1m0 13h0M1175 506h0m0 6h0m0 5h0m0 11v1m0 3h0m0 5h0m0 2h0m0 2h0m0 3h0m0 7v1m0 15h0M1176 515h0m0 11h0m0 3v1m0 2h0m0 8h0m0 3h0m0 4v1m0 5h0m0 10v2M1177 510h0m0 2h0m0 3h0m0 10v1m0 2h0m0 6v1m0 2v1m0 5h0m0 7v1M1178 498h0m0 20h0m0 10h0m0 3h0m0 12v3m0 11h0m0 2v1M1179 482h0m0 6h0m0 6h0m0 3h0m0 5h0m0 10h0m0 2h0m0 11h0m0 3h0m0 10v1m0 2h0m0 2h0m0 7h0M1180 483h0m0 9v1m0 11h0m0 3h0m0 4v1m0 6h0m0 2h0m0 3h0m0 3v1m0 12h0M1181 488h0m0 7h0m0 2h0m0 2h0m0 2h0m0 5h0m0 5v1m0 2h0m0 2h0m0 2h0m0 3v1m0 10h0M1182 507h0m0 11h0m0 8h0m0 4h0m0 4h0m0 4h0m0 3h0m0 3h0m0 2h0m0 4h0m0 4h0m0 6h0m0 4h0M1183 467h0m0 59h0m0 3v2m0 6h0m0 5h0m0 8v1m0 2h0m0 22h0m0 7h0M1184 521h0m0 4v1m0 10h0m0 5h0m0 2h0m0 2h0m0 4h0m0 2h0m0 14h0m0 4h0m0 8h0M1185 485h0m0 11h0m0 3h0m0 3h0m0 4h0m0 7h0m0 2h0m0 3v1m0 4h0m0 9h0m0 3h0m0 9h0M1186 472v3m0 2h0m0 5h0m0 12h0m0 8h0m0 2h0m0 22h0m0 7h0m0 2v1m0 3h0M1187 488h0m0 3h0m0 3h0m0 6h0m0 17h0m0 4h0m0 3h0m0 3h0m0 5h0m0 5h0m0 2h0m0 18h0M1188 488h0m0 4h0m0 3v1m0 3h0m0 8h0m0 3v1m0 2h0m0 9h0m0 2h0m0 6h0m0 3h0m0 5h0M1189 464v1m0 9h0m0 12h0m0 4h0m0 3v1m0 3h0m0 3h0m0 5v1m0 4h0M1190 472h0m0 3h0m0 3h0m0 3h0m0 3h0m0 2h0m0 8h0m0 8h0m0 2h0m0 5h0m0 6h0M1191 458v1m0 11h0m0 23h0m0 7h0m0 11h0m0 2h0m0 3h0m0 13h0m0 2h0m0 2h0m0 22h0M1192 470h0m0 32h0m0 3h0m0 3v1m0 2h0m0 2h0m0 9h0m0 6h0m0 3h0m0 8h0m0 3h0M1193 463h0m0 15h0m0 9h0m0 3h0m0 17v2m0 2h0m0 9h0m0 4h0m0 3h0m0 6h0m0 4h0M1194 462h0m0 11v1m0 22v1m0 6v1m0 7h0m0 4h0m0 2h0m0 7h0m0 14h0M1195 473h0m0 3v1m0 4h0m0 6h0m0 3h0m0 10v1m0 9h0m0 2h0m0 6h0m0 2h0m0 6h0M1196 499h0m0 15h0m0 4h0m0 2h0m0 10v2m0 2h0m0 2h0m0 4h0m0 2h0m0 2h0m0 6h0M1197 496h0m0 5h0m0 7h0m0 3v3m0 2h0m0 7h0m0 7v1m0 6h0m0 2h0m0 12h0M1198 515h0m0 5h0m0 2h0m0 3v3m0 8h0m0 2h0m0 5h0m0 4h0m0 10h0m0 12h0M1199 489h0m0 23h0m0 16h0m0 2h0m0 4v1m0 6h0m0 2h0m0 3h0m0 3h0m0 14h0m0 9h0m0 5h0M1200 500h0m0 8h0m0 3h0m0 3v1m0 2h0m0 2h0m0 4h0m0 2h0m0 6h0m0 3v1M1201 497v3m0 6h0m0 6h0m0 4h0m0 5v1m0 3h0m0 13v1M1202 487h0m0 2v1m0 8h0m0 3h0m0 5h0m0 4v2m0 3h0m0 6h0m0 7h0m0 9h0M1203 499h0m0 4v1m0 6h0m0 16h0m0 5v3m0 9h0m0 3h0m0 5h0M1204 530h0m0 2h0m0 5h0m0 2h0m0 4h0m0 3h0m0 2h0m0 6h0m0 8h0m0 2h0m0 5v1m0 4h0M1205 522h0m0 6h0m0 2h0m0 4h0m0 2h0m0 5h0m0 2v2m0 2v1m0 3v1M1206 471v1m0 11h0m0 3h0m0 3h0m0 2h0m0 3h0m0 12h0m0 5h0m0 18h0m0 6h0M1207 481h0m0 12h0m0 2h0m0 5v1m0 2v3m0 4v1m0 7h0m0 7h0M1208 469h0m0 6h0m0 2v1m0 4h0m0 9h0m0 4h0m0 2h0m0 3v1m0 5h0m0 2h0m0 5h0m0 4h0M1209 493h0m0 3h0m0 12h0m0 2h0m0 2h0m0 2h0m0 10v1m0 6h0m0 12h0m0 5h0m0 10h0m0 5h0M1210 466h0m0 11h0m0 2v1m0 3h0m0 3h0m0 3h0m0 3h0m0 8h0m0 3h0m0 7h0M1211 470h0m0 10h0m0 5h0m0 6h0m0 2h0m0 2h0m0 3h0m0 3h0m0 2h0m0 15h0M1212 491v1m0 7h0m0 5h0m0 2h0m0 4h0m0 2h0m0 5h0m0 3h0m0 5v2m0 17h0M1213 459h0m0 4v1m0 2h0m0 5h0m0 21h0m0 7h0m0 2h0m0 11h0m0 5h0m0 34h0m0 4h0M1214 512h0m0 15h0m0 3h0m0 3v2m0 2v1m0 11v1m0 4v1m0 4h0m0 5h0M1215 512h0m0 6h0m0 8h0m0 12h0m0 3h0m0 4h0m0 4h0m0 8h0m0 10h0m0 6h0M1216 530h0m0 3h0m0 5h0m0 2h0m0 3h0m0 2v1m0 3v1m0 10h0m0 2v1m0 11h0M1217 500h0m0 19v1m0 6h0m0 5h0m0 3h0m0 4v1m0 2h0m0 6h0m0 7v1m0 2v1M1218 466h0m0 18h0m0 8h0m0 9h0m0 2h0m0 3h0m0 6h0m0 2h0m0 5h0m0 5h0m0 11h0m0 10h0m0 2h0m0 2h0M1219 462h0m0 9h0m0 10v1m0 7h0m0 2h0m0 19h0m0 6h0m0 11h0m0 11h0m0 11h0m0 2h0m0 7h0M1220 482h0m0 9h0m0 11h0m0 3h0m0 5v1m0 8h0m0 2h0m0 2h0m0 10h0m0 5h0m0 18h0m0 5h0m0 3h0M1221 460h0m0 4h0m0 6h0m0 4h0m0 7h0m0 6h0m0 2h0m0 14h0m0 2h0m0 7h0m0 4h0m0 6h0m0 3h0M1222 492h0m0 3h0m0 11h0m0 8v1m0 3h0m0 7v1m0 4h0m0 8h0m0 3h0m0 8h0M1223 469v1m0 17h0m0 23v2m0 6h0m0 2h0m0 3h0m0 3h0m0 8h0m0 20h0m0 5h0M1224 468h0m0 11v1m0 10h0m0 15h0m0 2h0m0 4h0m0 3h0m0 3h0m0 7h0m0 10h0m0 11h0M1225 502h0m0 2v1m0 4h0m0 3h0m0 8v1m0 4v1m0 3h0m0 16v1m0 12h0m0 25h0M1226 495h0m0 2v1m0 20h0m0 16v1m0 2h0m0 3h0m0 4v1m0 2h0m0 11h0m0 7h0M1227 490h0m0 2h0m0 3h0m0 8h0m0 4v4m0 10h0m0 13h0m0 11h0M1228 494h0m0 7h0m0 2v2m0 6v1m0 8h0m0 5h0m0 3h0M1229 504h0m0 8h0m0 9v1m0 11h0m0 2h0m0 4h0m0 4h0m0 4v2m0 6h0m0 6h0M1230 507h0m0 13v2m0 6h0m0 5v1m0 2h0m0 7v1m0 8h0m0 4h0m0 19h0M1231 458h0m0 11v1m0 8h0m0 6h0m0 6h0m0 2h0m0 11v1m0 14h0m0 5h0m0 3h0m0 6h0M1232 478h0m0 2h0m0 4h0m0 19v1m0 6h0m0 3h0m0 9h0m0 5h0m0 7h0m0 8h0m0 4h0M1233 494h0m0 11h0m0 5v1m0 3h0m0 6v1m0 10h0m0 9h0m0 4v1m0 2h0m0 18h0M1234 484h0m0 9v1m0 7h0m0 4h0m0 3h0m0 2v2m0 3v1m0 3h0m0 10h0M1235 483h0m0 4v1m0 15v1m0 4h0m0 2h0m0 3h0m0 5v1m0 2h0m0 5h0m0 6h0M1236 482h0m0 15h0m0 4v1m0 5h0m0 8h0m0 2v1m0 3v3m0 3h0M1237 499h0m0 2h0m0 4h0m0 3v1m0 3h0m0 2h0m0 4h0m0 5h0m0 4h0M1238 519h0M1294 497h0m0 3h0m0 4h0m0 10h0m0 4h0M1295 462h0m0 7h0m0 12v1m0 10v2m0 2v1m0 3h0m0 10h0m0 3v1M1296 478h0m0 8h0m0 7h0m0 4v1m0 2h0m0 6v1m0 3h0m0 8h0m0 8h0M1297 503h0m0 2h0m0 6h0m0 3h0m0 2h0m0 2h0m0 4h0m0 7v3m0 4h0m0 6h0M1298 496h0m0 8h0m0 5h0m0 2v1m0 5v1m0 4h0m0 5h0m0 5h0m0 2h0m0 5h0m0 12h0M1299 500h0m0 5h0m0 2h0m0 9h0m0 4v2m0 3h0m0 3h0m0 13v2M1300 463h0m0 14h0m0 10h0m0 2h0m0 2h0m0 2v2m0 5h0m0 18h0m0 11h0M1301 490h0m0 8h0m0 11v1m0 4h0m0 6v2m0 2h0m0 3v1m0 9h0M1302 500h0m0 2h0m0 18v3m0 3h0m0 4h0m0 3h0m0 4h0m0 2h0m0 2h0m0 17h0M1303 517h0m0 15h0m0 15h0m0 14h0" stroke="#000" stroke-width="3.45" stroke-linecap="round" fill="none"/>
<path transform="translate(.5 .5)" d="M177 456h0M186 439h0m0 10h0M204 451h0M247 454h0M269 651h0M291 453h0M297 453h0M307 447h0M343 453h0M373 445h0m0 5h0M404 455h0M417 454h0M441 455h0M460 452h0M493 451h0m0 5h0M501 455h0M539 637h0M561 445h0m0 5h0M608 597h0M637 452h0M670 446h0M711 447h0m0 8h0M714 456h0M764 454h0M769 599h0M824 455h0M826 597h0M924 453h0M925 451h0M938 442h0M974 454h0M1013 610h0M1025 598h0M1028 454h0M1045 446h0M1073 593h0M1078 452h0M1165 454h0M1214 444h0M1222 456h0" stroke="#ffa500" stroke-width="3.45" stroke-linecap="round" fill="none"/>
<path d="M323.4 660.4h6.2l-3.1 6z" fill="#ffa500"/>
<path d="M397.4 660.4h6.2l-3.1 6z" fill="#ffa500"/>
<path d="M1293.4 660.4h6.2l-3.1 6z" fill="#ffa500"/>
<rect x="105.5" y="499.0" width="1255.7" height="48.89999999999998" fill="#ff0000" fill-opacity="0.1" stroke="#ff0000" stroke-opacity="0.1" stroke-width="1.39"/>
<rect x="162.4" y="499.0" width="1140.8999999999999" height="48.89999999999998" fill="#ffa500" fill-opacity="0.1" stroke="#ffa500" stroke-opacity="0.1" stroke-width="1.39"/>
<path d="M162.4 523.35H1303.3" stroke="#ffa500" stroke-width="2.78" fill="none"/>
<path d="M105.5 523H1361.2" stroke="#ff0000" stroke-width="2.08" fill="none"/>
<path d="M162.4 666.5V380.5" stroke="#800080" stroke-width="2.08" stroke-dasharray="2.08 3.44" fill="none"/>
<path d="M1303.15 666.5V380.5" stroke="#800080" stroke-width="2.08" stroke-dasharray="2.08 3.44" fill="none"/>
</g>
<rect x="105.5" y="380.5" width="1380.0" height="286.0" fill="none" stroke="#000" stroke-width="1.1"/>
<text x="163.0" y="686.5" text-anchor="middle">0</text>
<text x="337.0" y="686.5" text-anchor="middle">2000</text>
<text x="511.1" y="686.5" text-anchor="middle">4000</text>
<text x="685.1" y="686.5" text-anchor="middle">6000</text>
<text x="859.1" y="686.5" text-anchor="middle">8000</text>
<text x="1033.1" y="686.5" text-anchor="middle">10000</text>
<text x="1207.2" y="686.5" text-anchor="middle">12000</text>
<text x="1381.2" y="686.5" text-anchor="middle">14000</text>
<path d="M162.5 666.5v4.9M336.5 666.5v4.9M510.5 666.5v4.9M684.5 666.5v4.9M858.5 666.5v4.9M1032.5 666.5v4.9M1206.5 666.5v4.9M1380.5 666.5v4.9" stroke="#000" stroke-width="1.1" fill="none"/>
<text x="95.9" y="650.7" text-anchor="end">6.575</text>
<text x="95.9" y="619.0" text-anchor="end">6.580</text>
<text x="95.9" y="587.3" text-anchor="end">6.585</text>
<text x="95.9" y="555.6" text-anchor="end">6.590</text>
<text x="95.9" y="523.9" text-anchor="end">6.595</text>
<text x="95.9" y="492.3" text-anchor="end">6.600</text>
<text x="95.9" y="460.6" text-anchor="end">6.605</text>
<text x="95.9" y="428.9" text-anchor="end">6.610</text>
<text x="95.9" y="397.2" text-anchor="end">6.615</text>
<path d="M105.5 645.5h-4.9M105.5 614.5h-4.9M105.5 582.5h-4.9M105.5 550.5h-4.9M105.5 519.5h-4.9M105.5 487.5h-4.9M105.5 455.5h-4.9M105.5 424.5h-4.9M105.5 392.5h-4.9" stroke="#000" stroke-width="1.1" fill="none"/>
<text x="794.6" y="372" text-anchor="middle" font-size="16.67px">Magnitude Estimates</text>
<text x="714.9" y="657">5007</text>
<rect x="1365.4" y="387.2" width="113.0" height="48.1" rx="2.8" fill="#fff" fill-opacity="0.8" stroke="#ccc" stroke-opacity="0.8" stroke-width="1.15"/>
<path d="M1370.3 399.5H1398" stroke="#ffa500" stroke-width="2.78" stroke-linecap="square" fill="none"/>
<path d="M1370.3 422H1398" stroke="#ff0000" stroke-width="2.08" stroke-linecap="square" fill="none"/>
<text x="1410.1" y="403.8">mag<tspan font-size="9.72px" font-style="italic" dy="2.3" dx="-0.6">OBSID</tspan></text>
<text x="1409.2" y="426.7">mag</text>
<rect x="1348.1" y="613.3" width="130.3" height="46.1" rx="2.8" fill="#fff" fill-opacity="0.8" stroke="#ccc" stroke-opacity="0.8" stroke-width="1.15"/>
<circle cx="1367.5" cy="626.5" r="1.725" fill="#ffa500"/>
<text x="1392.4" y="629.9">Highlighted</text>
<circle cx="1367.5" cy="647.5" r="1.725" fill="#000"/>
<text x="1392.4" y="650.8">OK</text>
<g clip-path="url(#c2)">
<circle cx="241.5" cy="758.5" r="1.05" fill="none" stroke="#000" stroke-width="1"/>
<circle cx="241.5" cy="888.5" r="1.05" fill="none" stroke="#000" stroke-width="1"/>
<circle cx="400.5" cy="888.5" r="1.05" fill="none" stroke="#000" stroke-width="1"/>
<circle cx="400.5" cy="856.5" r="1.05" fill="none" stroke="#000" stroke-width="1"/>
<circle cx="1303.5" cy="758.5" r="1.05" fill="none" stroke="#000" stroke-width="1"/>
<path d="M1238.5 758.5H1293.5" stroke="#000" stroke-width="3.1" stroke-linecap="round" fill="none"/>
<path d="M105.5 921.5H1485.5M105.5 888.5H1485.5M105.5 856.5H1485.5M105.5 823.5H1485.5M105.5 790.5H1485.5M105.5 758.5H1485.5" stroke="#b0b0b0" stroke-width="1.11" stroke-dasharray="1.11 1.83" fill="none"/>
<path d="M162.4 954.5V725.5" stroke="#800080" stroke-width="2.08" stroke-dasharray="2.08 3.44" fill="none"/>
<path d="M1303.15 954.5V725.5" stroke="#800080" stroke-width="2.08" stroke-dasharray="2.08 3.44" fill="none"/>
</g>
<g clip-path="url(#c3)">
<path d="M241.5 955.5l1.9 3.4h-3.8z" fill="none" stroke="#f00" stroke-width="1.3" stroke-linejoin="round"/>
<path d="M400.5 955.5l1.9 3.4h-3.8z" fill="none" stroke="#f00" stroke-width="1.3" stroke-linejoin="round"/>
<path d="M1303.5 955.5l1.9 3.4h-3.8z" fill="none" stroke="#f00" stroke-width="1.3" stroke-linejoin="round"/>
<path d="M1238.5 957.6H1293.5" stroke="#f00" stroke-width="4.8" stroke-linecap="round" fill="none"/>
<path d="M162.5 1008.6H1239.5M1292.5 1008.6H1304" stroke="#000" stroke-width="4.8" fill="none"/>
<path d="M163.5 1006.6v-1M167.5 1006.6v-1.8M170.5 1006.6v-1.3M172.5 1006.6v-1.8M183.5 1006.6v-1.8M191.5 1006.6v-1M194.5 1006.6v-1.8M210.5 1006.6v-1M214.5 1006.6v-.7M237.5 1006.6v-1.8M239.5 1006.6v-1M243.5 1006.6v-1.8M252.5 1006.6v-1.8M262.5 1006.6v-1.8M267.5 1006.6v-1M278.5 1006.6v-1.8M296.5 1006.6v-1.3M300.5 1006.6v-1.8M309.5 1006.6v-1M315.5 1006.6v-1M320.5 1006.6v-1.3M323.5 1006.6v-1M329.5 1006.6v-1M330.5 1006.6v-.7M344.5 1006.6v-.7M349.5 1006.6v-1M365.5 1006.6v-1.3M373.5 1006.6v-.7M377.5 1006.6v-1.8M378.5 1006.6v-1.3M388.5 1006.6v-.7M401.5 1006.6v-1.3M420.5 1006.6v-1.3M421.5 1006.6v-1.8M443.5 1006.6v-1.3M446.5 1006.6v-1.3M447.5 1006.6v-1M455.5 1006.6v-1M467.5 1006.6v-1.8M471.5 1006.6v-1M477.5 1006.6v-1.8M479.5 1006.6v-1.3M483.5 1006.6v-.7M488.5 1006.6v-1.3M491.5 1006.6v-1M497.5 1006.6v-1.8M507.5 1006.6v-1.8M515.5 1006.6v-1.3M516.5 1006.6v-1.3M522.5 1006.6v-1M536.5 1006.6v-1.8M540.5 1006.6v-1M541.5 1006.6v-1M543.5 1006.6v-1.3M544.5 1006.6v-.7M556.5 1006.6v-.7M557.5 1006.6v-.7M568.5 1006.6v-1M576.5 1006.6v-1.8M585.5 1006.6v-1.8M586.5 1006.6v-1.8M587.5 1006.6v-1.8M588.5 1006.6v-1.8M594.5 1006.6v-1.3M610.5 1006.6v-.7M612.5 1006.6v-1.3M617.5 1006.6v-.7M622.5 1006.6v-1M625.5 1006.6v-1.8M626.5 1006.6v-1.3M630.5 1006.6v-.7M635.5 1006.6v-1M638.5 1006.6v-1M644.5 1006.6v-1.3M656.5 1006.6v-1M658.5 1006.6v-1.8M660.5 1006.6v-1M669.5 1006.6v-1.8M671.5 1006.6v-1.3M676.5 1006.6v-.7M683.5 1006.6v-1.3M685.5 1006.6v-.7M694.5 1006.6v-.7M697.5 1006.6v-1.3M699.5 1006.6v-1.3M701.5 1006.6v-1.8M702.5 1006.6v-.7M708.5 1006.6v-1.3M710.5 1006.6v-1.8M711.5 1006.6v-1.8M731.5 1006.6v-.7M737.5 1006.6v-1M741.5 1006.6v-1.8M743.5 1006.6v-.7M750.5 1006.6v-1.3M755.5 1006.6v-1.8M756.5 1006.6v-1.8M762.5 1006.6v-1.8M774.5 1006.6v-1.3M779.5 1006.6v-1M783.5 1006.6v-1.8M786.5 1006.6v-1.8M792.5 1006.6v-1.3M798.5 1006.6v-1.3M805.5 1006.6v-.7M806.5 1006.6v-1.8M811.5 1006.6v-1.8M813.5 1006.6v-1.3M816.5 1006.6v-1.8M817.5 1006.6v-1.3M824.5 1006.6v-.7M825.5 1006.6v-1.8M831.5 1006.6v-1.8M843.5 1006.6v-1M851.5 1006.6v-1.8M858.5 1006.6v-1.3M861.5 1006.6v-.7M862.5 1006.6v-1.8M863.5 1006.6v-.7M872.5 1006.6v-.7M873.5 1006.6v-1M881.5 1006.6v-1M884.5 1006.6v-.7M886.5 1006.6v-1M897.5 1006.6v-1.8M902.5 1006.6v-1.3M906.5 1006.6v-1M912.5 1006.6v-1M920.5 1006.6v-1M927.5 1006.6v-1.8M932.5 1006.6v-1.3M937.5 1006.6v-.7M939.5 1006.6v-.7M940.5 1006.6v-1M958.5 1006.6v-.7M963.5 1006.6v-.7M968.5 1006.6v-.7M969.5 1006.6v-.7M984.5 1006.6v-1M986.5 1006.6v-1.3M992.5 1006.6v-.7M1001.5 1006.6v-.7M1002.5 1006.6v-.7M1003.5 1006.6v-1.8M1005.5 1006.6v-.7M1007.5 1006.6v-1.8M1017.5 1006.6v-1.8M1021.5 1006.6v-.7M1034.5 1006.6v-1.8M1041.5 1006.6v-1.8M1045.5 1006.6v-1.3M1050.5 1006.6v-.7M1052.5 1006.6v-.7M1054.5 1006.6v-1.3M1065.5 1006.6v-1M1067.5 1006.6v-.7M1078.5 1006.6v-1.3M1085.5 1006.6v-.7M1086.5 1006.6v-.7M1088.5 1006.6v-1.3M1095.5 1006.6v-1.3M1100.5 1006.6v-1.8M1104.5 1006.6v-1.8M1108.5 1006.6v-.7M1110.5 1006.6v-1M1112.5 1006.6v-.7M1143.5 1006.6v-1.8M1153.5 1006.6v-1M1179.5 1006.6v-1.3M1180.5 1006.6v-1.8M1196.5 1006.6v-1M1206.5 1006.6v-1M1207.5 1006.6v-1.3M1208.5 1006.6v-1.8M1211.5 1006.6v-1.3M1217.5 1006.6v-1.3M1223.5 1006.6v-.7M1224.5 1006.6v-1M1227.5 1006.6v-1.3M1236.5 1006.6v-1.8" stroke="#000" stroke-width="2.4" fill="none"/>
<path d="M163 1009.8H1239M1293 1009.8H1303" stroke="#fff" stroke-opacity="0.95" stroke-width="1.3" stroke-dasharray="3 1 4.5 1.2 1.5 1 1.5 1 6 1.3 2.5 1 1.2 1.2" fill="none"/>
<path d="M105.5 1009.5H1485.5M105.5 983.5H1485.5M105.5 957.5H1485.5" stroke="#b0b0b0" stroke-width="1.11" stroke-dasharray="1.11 1.83" fill="none"/>
<path d="M162.4 1011.5V954.5" stroke="#800080" stroke-width="2.08" stroke-dasharray="2.08 3.44" fill="none"/>
<path d="M1303.15 1011.5V954.5" stroke="#800080" stroke-width="2.08" stroke-dasharray="2.08 3.44" fill="none"/>
</g>
<rect x="105.5" y="725.5" width="1380.0" height="229.0" fill="none" stroke="#000" stroke-width="1.1"/>
<rect x="105.5" y="954.5" width="1380.0" height="57.0" fill="none" stroke="#000" stroke-width="1.1"/>
<text x="163.0" y="1031.5" text-anchor="middle">0</text>
<text x="337.0" y="1031.5" text-anchor="middle">2000</text>
<text x="511.1" y="1031.5" text-anchor="middle">4000</text>
<text x="685.1" y="1031.5" text-anchor="middle">6000</text>
<text x="859.1" y="1031.5" text-anchor="middle">8000</text>
<text x="1033.1" y="1031.5" text-anchor="middle">10000</text>
<text x="1207.2" y="1031.5" text-anchor="middle">12000</text>
<text x="1381.2" y="1031.5" text-anchor="middle">14000</text>
<path d="M162.5 1011.5v4.9M336.5 1011.5v4.9M510.5 1011.5v4.9M684.5 1011.5v4.9M858.5 1011.5v4.9M1032.5 1011.5v4.9M1206.5 1011.5v4.9M1380.5 1011.5v4.9" stroke="#000" stroke-width="1.1" fill="none"/>
<text x="95.9" y="927.0" text-anchor="end">OBS not OK</text>
<text x="95.9" y="894.0" text-anchor="end">dr &gt; 5</text>
<text x="95.9" y="862.0" text-anchor="end">Ion. rad.</text>
<text x="95.9" y="829.0" text-anchor="end">Sat. pixel.</text>
<text x="95.9" y="796.0" text-anchor="end">not track</text>
<text x="95.9" y="764.0" text-anchor="end">not Kalman</text>
<path d="M105.5 921.5h-4.9M105.5 888.5h-4.9M105.5 856.5h-4.9M105.5 823.5h-4.9M105.5 790.5h-4.9M105.5 758.5h-4.9" stroke="#000" stroke-width="1.1" fill="none"/>
<text x="95.9" y="1013.7" text-anchor="end">0</text>
<text x="95.9" y="987.7" text-anchor="end">5</text>
<text x="95.9" y="961.8" text-anchor="end">10</text>
<path d="M105.5 1009.5h-4.9M105.5 983.5h-4.9M105.5 957.5h-4.9" stroke="#000" stroke-width="1.1" fill="none"/>
<path d="M105.5 996.5h-2.8M105.5 970.5h-2.8" stroke="#000" stroke-width="1.1" fill="none"/>
<text transform="translate(69.2 982.9) rotate(-90)" text-anchor="middle">dr</text>
</svg>
</body></html>
